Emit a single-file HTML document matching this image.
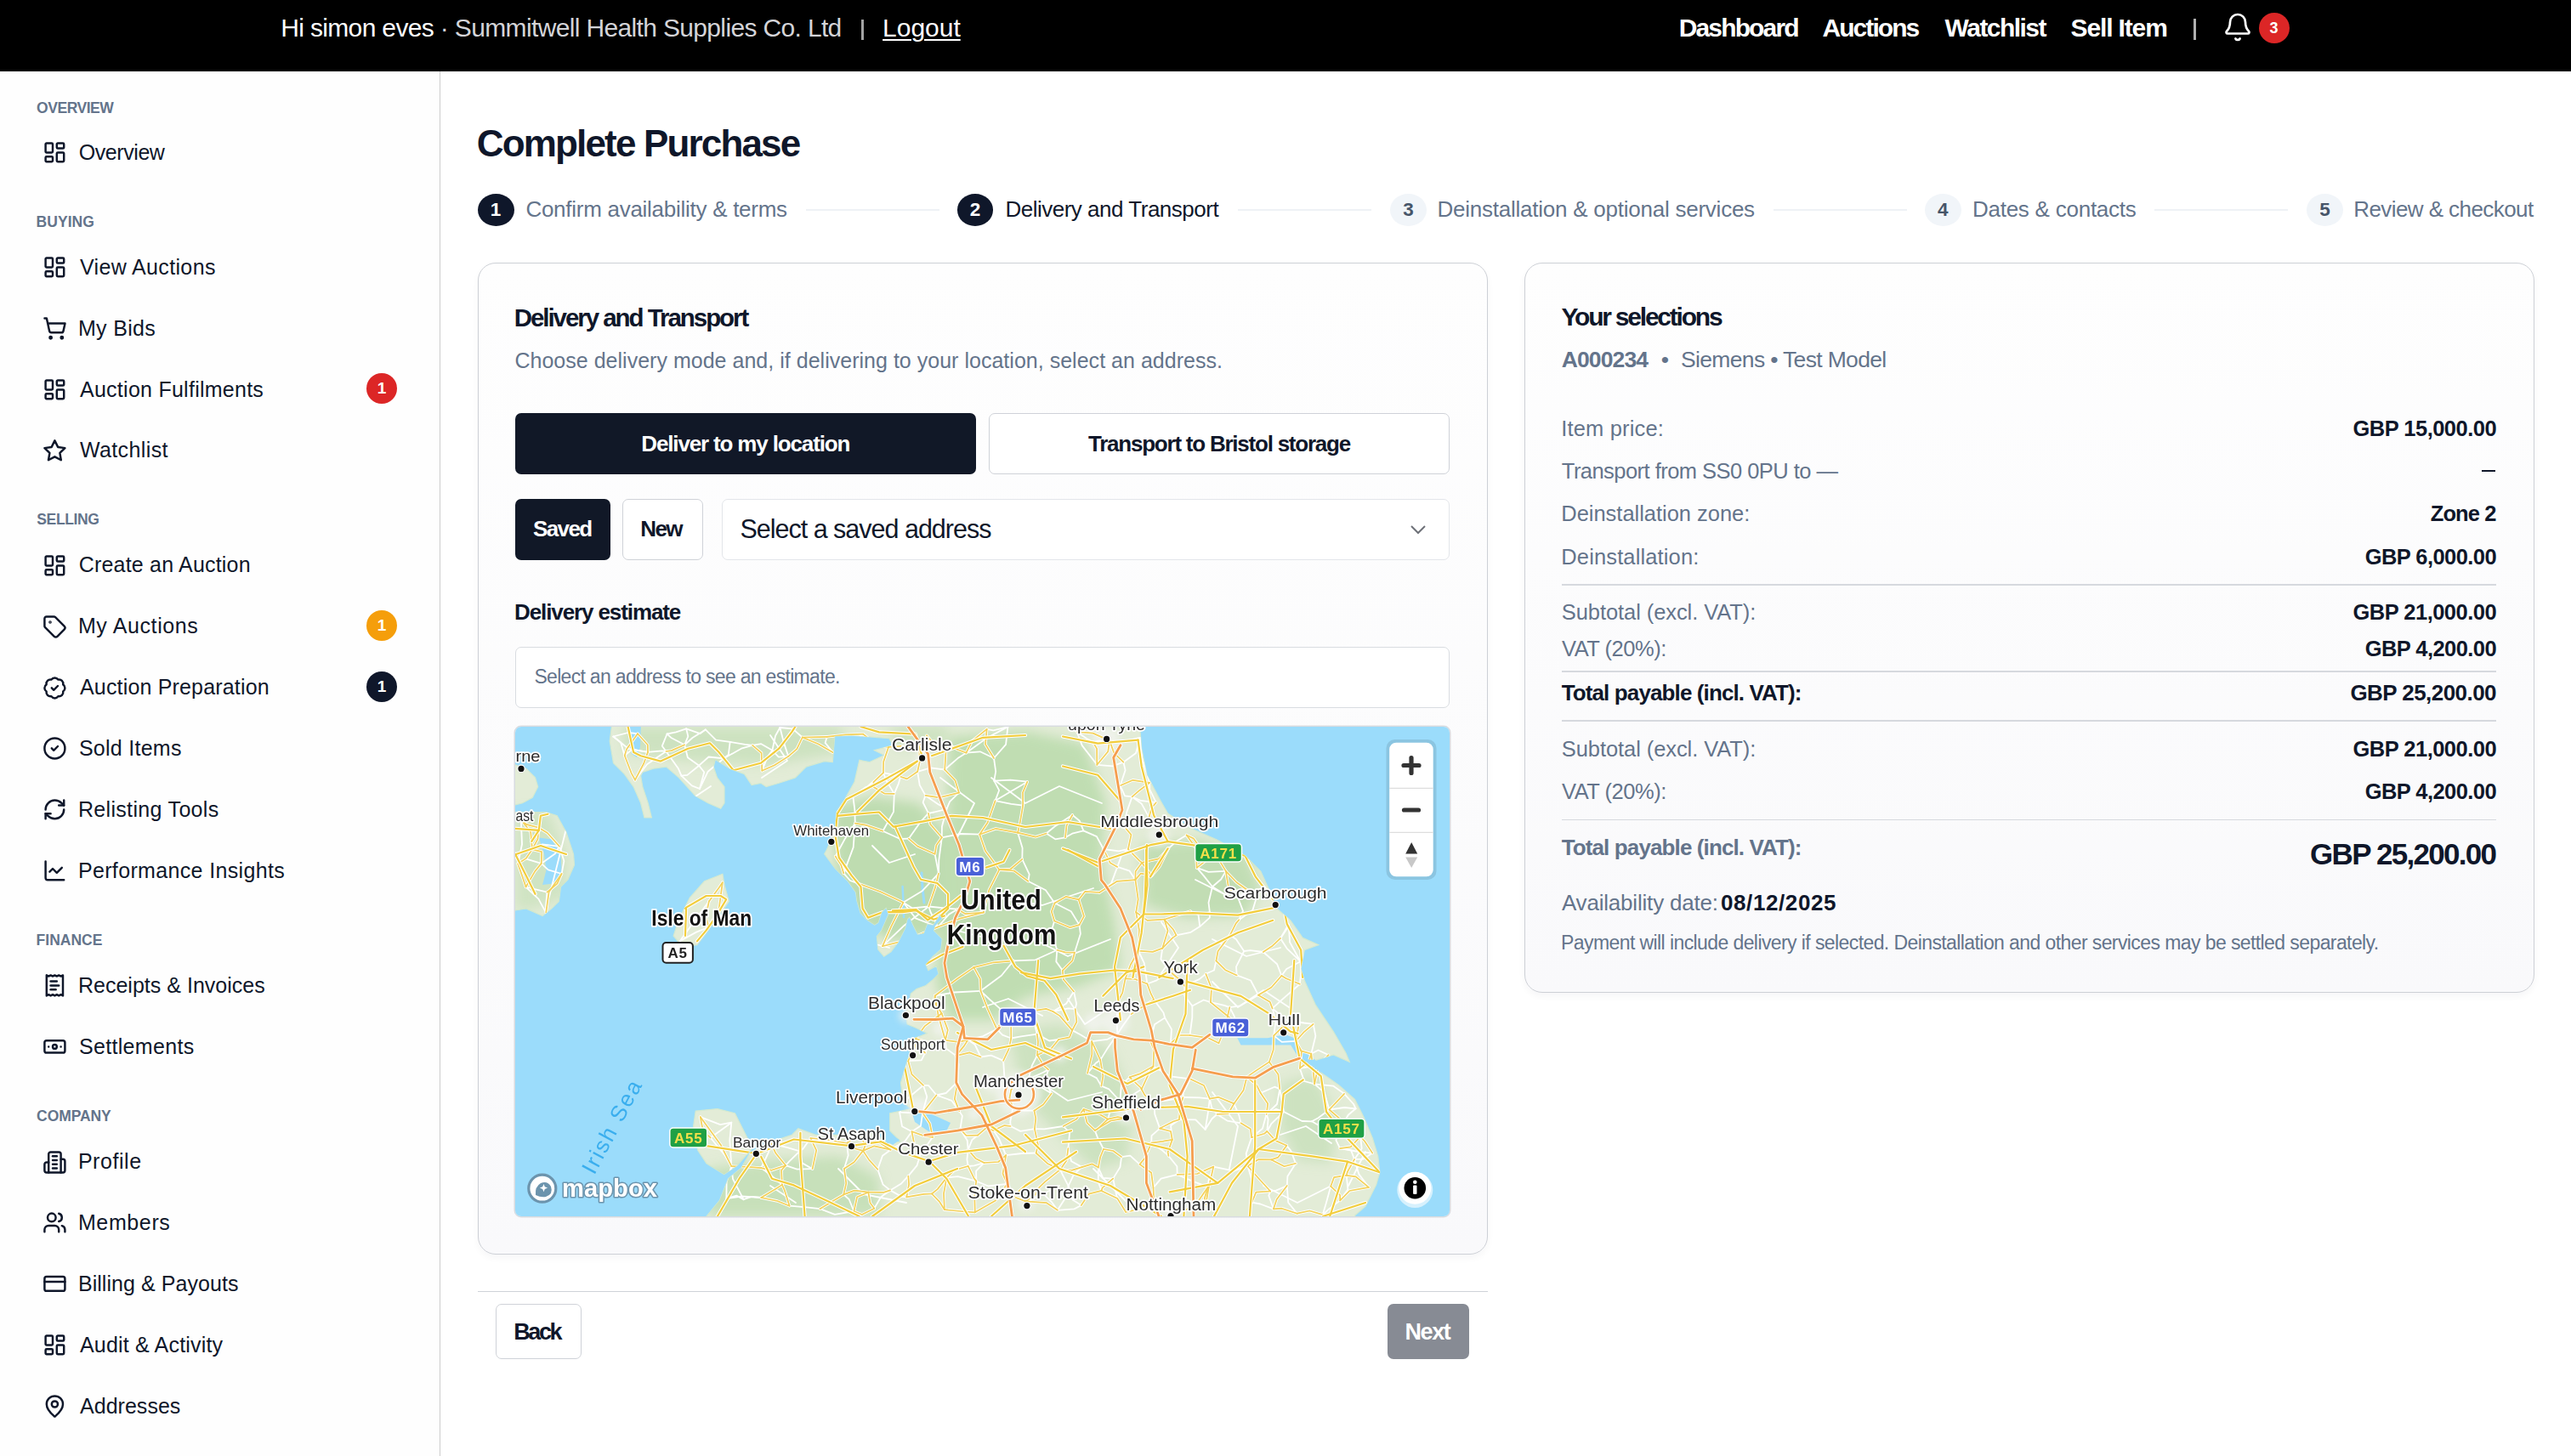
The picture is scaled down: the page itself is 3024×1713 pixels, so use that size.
<!DOCTYPE html>
<html><head><meta charset="utf-8"><title>Complete Purchase</title>
<style>
html,body{margin:0;padding:0;width:3024px;height:1713px;overflow:hidden;background:#fff;font-family:"Liberation Sans", sans-serif;}
.t{position:absolute;white-space:nowrap;line-height:1;font-family:"Liberation Sans", sans-serif;}
.ic{position:absolute;fill:none;stroke:#0f172a;stroke-width:2.05;stroke-linecap:round;stroke-linejoin:round;}
.badge{position:absolute;width:36px;height:36px;border-radius:50%;color:#fff;font-size:19px;font-weight:700;line-height:36px;text-align:center;}
.circ{position:absolute;width:42.8px;height:38px;border-radius:50%;}
.sline{position:absolute;top:245.5px;height:2px;background:#eef2f6;}
#hdr{position:absolute;left:0;top:0;width:3024px;height:84px;background:#000;}
#side{position:absolute;left:0;top:84px;width:517px;height:1629px;background:#fefefe;border-right:1.3px solid #cdcdcd;}
.card{position:absolute;box-sizing:border-box;border:1.5px solid #cdd0d6;border-radius:21px;background:linear-gradient(#fefefe,#f9f9fb);box-shadow:0 4px 8px rgba(15,23,42,0.04);}
.btn{position:absolute;box-sizing:border-box;border-radius:7px;}
.hr{position:absolute;left:1837px;width:1099px;height:1.5px;background:#d6d9de;}
</style></head><body>
<div id="hdr"></div>
<div style="position:absolute;left:1013.3px;top:22.5px;width:2.8px;height:24.5px;background:#a3a3a3"></div>
<div style="position:absolute;left:2580px;top:22px;width:3px;height:25px;background:#b0b0b0"></div>
<div id="side"></div>
<svg style="position:absolute;left:2614px;top:14px" width="36" height="36" viewBox="0 0 24 24" fill="none" stroke="#fff" stroke-width="1.8" stroke-linecap="round" stroke-linejoin="round"><path d="M10.268 21a2 2 0 0 0 3.464 0"/><path d="M3.262 15.326A1 1 0 0 0 4 17h16a1 1 0 0 0 .74-1.673C19.41 13.956 18 12.499 18 8A6 6 0 0 0 6 8c0 4.499-1.411 5.956-2.738 7.326"/></svg>
<div class="badge" style="left:2656.6px;top:14.5px;background:#dc2626;font-size:18px">3</div>
<div class="circ" style="left:562.1px;top:227.8px;background:#0f172a"></div>
<div class="circ" style="left:1125.6px;top:227.8px;background:#0f172a"></div>
<div class="circ" style="left:1635.0px;top:227.8px;background:#f1f5f9"></div>
<div class="circ" style="left:2264.1px;top:227.8px;background:#f1f5f9"></div>
<div class="circ" style="left:2713.1px;top:227.8px;background:#f1f5f9"></div>
<div class="sline" style="left:948px;width:156.79999999999995px"></div>
<div class="sline" style="left:1456px;width:156.5999999999999px"></div>
<div class="sline" style="left:2085.6px;width:157.0999999999999px"></div>
<div class="sline" style="left:2534.4px;width:157.0999999999999px"></div>
<div class="card" style="left:562px;top:309px;width:1188px;height:1167px"></div>
<div class="card" style="left:1793px;top:309px;width:1188px;height:859px"></div>
<div class="btn" style="left:606px;top:486px;width:542px;height:72px;background:#111827"></div>
<div class="btn" style="left:1163px;top:486px;width:542px;height:72px;background:#fff;border:1.5px solid #cfd2d8"></div>
<div class="btn" style="left:606px;top:587px;width:112px;height:72px;background:#111827"></div>
<div class="btn" style="left:732px;top:587px;width:95px;height:72px;background:#fff;border:1.5px solid #cfd2d8"></div>
<div class="btn" style="left:849px;top:587px;width:856px;height:72px;background:#fff;border:1.5px solid #e3e6ea"></div>
<svg style="position:absolute;left:1652px;top:607px" width="32" height="32" viewBox="0 0 24 24" fill="none" stroke="#6e7178" stroke-width="1.5" stroke-linecap="butt" stroke-linejoin="miter"><path d="m6 9 6 6 6-6"/></svg>
<div class="btn" style="left:606px;top:761px;width:1099px;height:72px;background:#fff;border:1.5px solid #d9dce1"></div>
<div id="map" style="position:absolute;left:606px;top:855px;width:1099px;height:576px;border-radius:7px;overflow:hidden;box-shadow:0 0 0 1.5px #d8dbe0;"><svg width="1099" height="576" viewBox="0 0 1099 576" style="position:absolute;left:0;top:0"><rect x="0" y="0" width="1099" height="576" fill="#9bdcfb"/><defs><filter id="bl" x="-30%" y="-30%" width="160%" height="160%"><feGaussianBlur stdDeviation="7"/></filter><filter id="bl2" x="-50%" y="-50%" width="200%" height="200%"><feGaussianBlur stdDeviation="4"/></filter><clipPath id="landclip"><polygon points="113.4,-10.0 113.4,0.0 111.2,17.1 115.5,42.8 128.4,55.6 139.1,70.6 147.6,89.8 151.9,107.0 160.4,107.0 156.2,89.8 149.8,70.6 147.6,57.8 149.8,53.5 162.6,49.2 177.6,47.1 192.5,59.9 211.8,81.3 226.8,89.8 241.7,96.3 246.0,89.8 246.0,70.6 237.5,59.9 233.2,47.1 235.3,38.5 252.4,49.2 269.5,55.6 278.1,68.5 288.8,66.3 295.2,70.6 310.2,66.3 329.4,59.9 342.3,47.1 363.7,40.6 373.3,41.7 375.7,11.0 395.5,10.2 439.9,13.7 444.5,21.8 422.4,27.7 434.0,33.5 416.5,41.7 404.9,39.3 399.0,65.0 387.3,86.0 378.0,100.0 375.7,123.4 366.3,145.0 363.7,149.8 376.5,166.9 391.5,181.8 400.7,195.0 402.0,205.0 406.2,219.3 414.4,227.6 422.7,233.1 426.8,230.3 430.9,218.0 436.4,212.5 439.2,220.7 430.9,240.0 425.4,246.8 426.8,261.9 433.7,270.2 441.9,264.7 450.2,253.7 458.4,237.2 461.1,226.2 463.9,223.5 468.0,233.1 473.5,244.1 480.4,242.7 484.5,231.7 491.4,233.1 499.6,220.7 502.4,226.2 494.1,234.5 492.7,239.9 502.4,249.6 501.0,261.9 491.4,270.2 483.1,279.8 485.9,286.6 495.5,281.2 498.2,290.8 491.4,297.6 483.1,304.5 472.1,308.6 465.3,314.1 463.9,322.4 459.8,336.1 461.1,349.8 470.8,354.0 484.5,360.8 477.6,363.6 466.6,367.7 463.9,385.0 461.2,393.1 453.5,418.8 456.1,441.9 466.3,449.6 440.7,454.7 440.7,475.2 453.5,488.0 438.1,490.6 420.1,475.2 394.5,480.4 353.4,480.4 332.9,472.7 325.2,480.4 302.0,488.0 276.4,500.9 266.1,518.9 250.7,531.7 240.4,557.4 225.0,576.0 218.0,590.0 994.0,590.0 987.5,575.0 1000.1,564.1 1012.7,538.9 1016.9,524.3 1014.8,505.4 1008.5,484.5 998.0,459.3 987.5,438.4 968.7,421.6 947.7,407.0 924.7,390.2 941.4,392.3 962.4,386.0 981.3,394.4 977.0,383.9 962.4,358.8 941.4,327.4 928.9,300.1 924.0,285.0 928.3,262.8 944.8,256.6 926.2,248.4 911.8,227.8 895.3,213.4 887.1,192.8 876.8,170.1 858.3,151.6 825.3,133.0 792.3,118.6 767.6,102.1 759.4,87.7 742.9,56.8 736.7,25.9 734.6,0.8 734.0,-10.0" fill="#000" /><polygon points="-10.0,44.9 0.0,44.9 12.8,49.2 23.5,59.9 26.7,70.6 20.3,83.4 8.6,89.8 0.0,92.0 -10.0,92.0" fill="#000" /><polygon points="-10.0,100.5 36.4,100.5 49.2,104.8 59.9,124.1 68.5,149.8 69.5,162.6 62.0,179.7 53.5,188.3 51.3,205.4 42.8,213.9 32.1,222.5 12.8,213.9 0.0,216.0 -10.0,216.0" fill="#000" /><polygon points="243.9,173.3 246.0,186.1 251.4,205.4 239.6,222.5 226.8,239.6 213.9,256.7 196.8,258.9 186.1,246.0 192.5,226.8 205.4,201.1 222.5,181.8" fill="#000" /><polygon points="212.2,452.1 237.9,449.6 258.4,454.7 268.7,475.2 279.0,495.8 261.0,516.3 245.6,526.6 225.0,513.7 214.8,498.3 209.6,470.1" fill="#000" /></clipPath></defs><polygon points="113.4,-10.0 113.4,0.0 111.2,17.1 115.5,42.8 128.4,55.6 139.1,70.6 147.6,89.8 151.9,107.0 160.4,107.0 156.2,89.8 149.8,70.6 147.6,57.8 149.8,53.5 162.6,49.2 177.6,47.1 192.5,59.9 211.8,81.3 226.8,89.8 241.7,96.3 246.0,89.8 246.0,70.6 237.5,59.9 233.2,47.1 235.3,38.5 252.4,49.2 269.5,55.6 278.1,68.5 288.8,66.3 295.2,70.6 310.2,66.3 329.4,59.9 342.3,47.1 363.7,40.6 373.3,41.7 375.7,11.0 395.5,10.2 439.9,13.7 444.5,21.8 422.4,27.7 434.0,33.5 416.5,41.7 404.9,39.3 399.0,65.0 387.3,86.0 378.0,100.0 375.7,123.4 366.3,145.0 363.7,149.8 376.5,166.9 391.5,181.8 400.7,195.0 402.0,205.0 406.2,219.3 414.4,227.6 422.7,233.1 426.8,230.3 430.9,218.0 436.4,212.5 439.2,220.7 430.9,240.0 425.4,246.8 426.8,261.9 433.7,270.2 441.9,264.7 450.2,253.7 458.4,237.2 461.1,226.2 463.9,223.5 468.0,233.1 473.5,244.1 480.4,242.7 484.5,231.7 491.4,233.1 499.6,220.7 502.4,226.2 494.1,234.5 492.7,239.9 502.4,249.6 501.0,261.9 491.4,270.2 483.1,279.8 485.9,286.6 495.5,281.2 498.2,290.8 491.4,297.6 483.1,304.5 472.1,308.6 465.3,314.1 463.9,322.4 459.8,336.1 461.1,349.8 470.8,354.0 484.5,360.8 477.6,363.6 466.6,367.7 463.9,385.0 461.2,393.1 453.5,418.8 456.1,441.9 466.3,449.6 440.7,454.7 440.7,475.2 453.5,488.0 438.1,490.6 420.1,475.2 394.5,480.4 353.4,480.4 332.9,472.7 325.2,480.4 302.0,488.0 276.4,500.9 266.1,518.9 250.7,531.7 240.4,557.4 225.0,576.0 218.0,590.0 994.0,590.0 987.5,575.0 1000.1,564.1 1012.7,538.9 1016.9,524.3 1014.8,505.4 1008.5,484.5 998.0,459.3 987.5,438.4 968.7,421.6 947.7,407.0 924.7,390.2 941.4,392.3 962.4,386.0 981.3,394.4 977.0,383.9 962.4,358.8 941.4,327.4 928.9,300.1 924.0,285.0 928.3,262.8 944.8,256.6 926.2,248.4 911.8,227.8 895.3,213.4 887.1,192.8 876.8,170.1 858.3,151.6 825.3,133.0 792.3,118.6 767.6,102.1 759.4,87.7 742.9,56.8 736.7,25.9 734.6,0.8 734.0,-10.0" fill="#e3ecd7" stroke="#d5ead0" stroke-width="1.2"/><polygon points="-10.0,44.9 0.0,44.9 12.8,49.2 23.5,59.9 26.7,70.6 20.3,83.4 8.6,89.8 0.0,92.0 -10.0,92.0" fill="#e3ecd7" stroke="#d5ead0" stroke-width="1.2"/><polygon points="-10.0,100.5 36.4,100.5 49.2,104.8 59.9,124.1 68.5,149.8 69.5,162.6 62.0,179.7 53.5,188.3 51.3,205.4 42.8,213.9 32.1,222.5 12.8,213.9 0.0,216.0 -10.0,216.0" fill="#e3ecd7" stroke="#d5ead0" stroke-width="1.2"/><polygon points="243.9,173.3 246.0,186.1 251.4,205.4 239.6,222.5 226.8,239.6 213.9,256.7 196.8,258.9 186.1,246.0 192.5,226.8 205.4,201.1 222.5,181.8" fill="#e3ecd7" stroke="#d5ead0" stroke-width="1.2"/><polygon points="212.2,452.1 237.9,449.6 258.4,454.7 268.7,475.2 279.0,495.8 261.0,516.3 245.6,526.6 225.0,513.7 214.8,498.3 209.6,470.1" fill="#e3ecd7" stroke="#d5ead0" stroke-width="1.2"/><g clip-path="url(#landclip)"><g filter="url(#bl)"><polygon points="510.0,12.0 600.0,5.0 670.0,20.0 695.0,90.0 690.0,160.0 705.0,230.0 712.0,285.0 665.0,305.0 600.0,318.0 565.0,345.0 510.0,345.0 495.0,300.0 500.0,220.0 508.0,140.0" fill="#bedcb0" opacity="0.95"/><polygon points="372.0,95.0 420.0,82.0 475.0,90.0 508.0,125.0 510.0,200.0 495.0,245.0 440.0,252.0 398.0,225.0 378.0,170.0" fill="#bedcb0" opacity="1.0"/><polygon points="736.0,140.0 800.0,133.0 860.0,150.0 877.0,190.0 860.0,222.0 790.0,225.0 740.0,210.0" fill="#bedcb0" opacity="0.9"/><polygon points="128.0,0.0 385.0,0.0 385.0,30.0 300.0,45.0 200.0,40.0 128.0,30.0" fill="#bedcb0" opacity="0.6"/><polygon points="580.0,360.0 640.0,350.0 700.0,380.0 727.0,440.0 720.0,510.0 680.0,520.0 640.0,480.0 600.0,440.0" fill="#bedcb0" opacity="0.6"/><polygon points="227.0,520.0 300.0,510.0 380.0,505.0 428.0,530.0 428.0,576.0 227.0,576.0" fill="#bedcb0" opacity="0.75"/><polygon points="900.0,420.0 940.0,410.0 967.0,460.0 960.0,513.0 920.0,510.0 900.0,470.0" fill="#bedcb0" opacity="0.6"/><polygon points="0.0,100.0 40.0,100.0 60.0,150.0 60.0,200.0 20.0,215.0 0.0,215.0" fill="#bedcb0" opacity="0.5"/><polygon points="440.0,0.0 510.0,0.0 505.0,20.0 450.0,25.0" fill="#bedcb0" opacity="0.6"/></g></g><g filter="url(#bl2)"><circle cx="592" cy="432" r="26" fill="#f1f3ee" opacity="0.85"/><circle cx="475" cy="450" r="13" fill="#f1f3ee" opacity="0.85"/><circle cx="706" cy="346" r="16" fill="#f1f3ee" opacity="0.85"/><circle cx="680" cy="348" r="11" fill="#f1f3ee" opacity="0.85"/><circle cx="718" cy="455" r="12" fill="#f1f3ee" opacity="0.85"/><circle cx="695" cy="16" r="16" fill="#f1f3ee" opacity="0.85"/><circle cx="757" cy="128" r="12" fill="#f1f3ee" opacity="0.85"/><circle cx="460" cy="340" r="8" fill="#f1f3ee" opacity="0.85"/><circle cx="904" cy="360" r="9" fill="#f1f3ee" opacity="0.85"/><circle cx="782" cy="300" r="7" fill="#f1f3ee" opacity="0.85"/><circle cx="601" cy="560" r="10" fill="#f1f3ee" opacity="0.85"/><circle cx="500" cy="355" r="9" fill="#f1f3ee" opacity="0.85"/><circle cx="771" cy="572" r="11" fill="#f1f3ee" opacity="0.85"/><circle cx="478" cy="37" r="8" fill="#f1f3ee" opacity="0.85"/><circle cx="640" cy="385" r="9" fill="#f1f3ee" opacity="0.85"/><circle cx="560" cy="420" r="10" fill="#f1f3ee" opacity="0.85"/><circle cx="540" cy="455" r="8" fill="#f1f3ee" opacity="0.85"/></g><polygon points="27.8,130.5 42.8,132.6 53.5,149.8 54.6,171.1 49.2,184.0 32.1,186.1 36.4,169.0 34.2,149.8" fill="#9bdcfb" /><polygon points="849.3,366.2 884.9,366.2 905.8,362.0 916.3,366.2 922.6,378.7 941.4,392.3 947.7,407.0 922.6,391.2 912.1,374.5 884.9,374.5 853.5,374.5" fill="#9bdcfb" /><polygon points="466.0,452.0 490.0,456.0 512.0,466.0 506.0,478.0 486.0,476.0 470.0,465.0" fill="#9bdcfb" /><polygon points="438.0,478.0 452.0,486.0 444.0,492.0 430.0,484.0" fill="#9bdcfb" /><polygon points="132.0,-5.0 148.0,-5.0 147.0,24.0 143.0,36.0 137.0,32.0 134.0,17.0" fill="#9bdcfb" /><polyline points="478.0,172.0 479.0,190.0 481.0,207.0" fill="none" stroke="#9bdcfb" stroke-width="3" stroke-linejoin="round" stroke-linecap="round" /><polyline points="455.6,188.0 456.5,206.0 457.0,224.0" fill="none" stroke="#9bdcfb" stroke-width="2.5" stroke-linejoin="round" stroke-linecap="round" /><g clip-path="url(#landclip)"><polyline points="40.0,200.0 60.0,120.0 50.0,60.0" fill="none" stroke="#ffffff" stroke-width="1.8" stroke-linejoin="round" stroke-linecap="round" /><polyline points="180.0,60.0 200.0,90.0 230.0,70.0" fill="none" stroke="#ffffff" stroke-width="1.8" stroke-linejoin="round" stroke-linecap="round" /><polyline points="300.0,10.0 320.0,40.0 290.0,60.0" fill="none" stroke="#ffffff" stroke-width="1.8" stroke-linejoin="round" stroke-linecap="round" /><polyline points="500.0,60.0 540.0,90.0 520.0,130.0" fill="none" stroke="#ffffff" stroke-width="1.8" stroke-linejoin="round" stroke-linecap="round" /><polyline points="560.0,60.0 600.0,90.0 640.0,70.0 690.0,90.0" fill="none" stroke="#ffffff" stroke-width="1.8" stroke-linejoin="round" stroke-linecap="round" /><polyline points="560.0,200.0 620.0,210.0 680.0,190.0" fill="none" stroke="#ffffff" stroke-width="1.8" stroke-linejoin="round" stroke-linecap="round" /><polyline points="610.0,250.0 650.0,270.0 700.0,250.0" fill="none" stroke="#ffffff" stroke-width="1.8" stroke-linejoin="round" stroke-linecap="round" /><polyline points="800.0,180.0 840.0,200.0 880.0,190.0" fill="none" stroke="#ffffff" stroke-width="1.8" stroke-linejoin="round" stroke-linecap="round" /><polyline points="820.0,250.0 860.0,270.0 900.0,260.0" fill="none" stroke="#ffffff" stroke-width="1.8" stroke-linejoin="round" stroke-linecap="round" /><polyline points="760.0,230.0 780.0,260.0 760.0,290.0" fill="none" stroke="#ffffff" stroke-width="1.8" stroke-linejoin="round" stroke-linecap="round" /><polyline points="550.0,330.0 580.0,320.0 620.0,340.0" fill="none" stroke="#ffffff" stroke-width="1.8" stroke-linejoin="round" stroke-linecap="round" /><polyline points="650.0,320.0 670.0,350.0 700.0,330.0" fill="none" stroke="#ffffff" stroke-width="1.8" stroke-linejoin="round" stroke-linecap="round" /><polyline points="820.0,300.0 850.0,330.0 880.0,310.0 910.0,330.0" fill="none" stroke="#ffffff" stroke-width="1.8" stroke-linejoin="round" stroke-linecap="round" /><polyline points="620.0,420.0 650.0,440.0 690.0,430.0" fill="none" stroke="#ffffff" stroke-width="1.8" stroke-linejoin="round" stroke-linecap="round" /><polyline points="820.0,430.0 850.0,470.0 840.0,520.0" fill="none" stroke="#ffffff" stroke-width="1.8" stroke-linejoin="round" stroke-linecap="round" /><polyline points="900.0,480.0 930.0,470.0 960.0,490.0" fill="none" stroke="#ffffff" stroke-width="1.8" stroke-linejoin="round" stroke-linecap="round" /><polyline points="880.0,540.0 920.0,560.0 960.0,540.0" fill="none" stroke="#ffffff" stroke-width="1.8" stroke-linejoin="round" stroke-linecap="round" /><polyline points="680.0,520.0 720.0,560.0" fill="none" stroke="#ffffff" stroke-width="1.8" stroke-linejoin="round" stroke-linecap="round" /><polyline points="600.0,560.0 640.0,540.0" fill="none" stroke="#ffffff" stroke-width="1.8" stroke-linejoin="round" stroke-linecap="round" /><polyline points="380.0,520.0 410.0,550.0 460.0,560.0" fill="none" stroke="#ffffff" stroke-width="1.8" stroke-linejoin="round" stroke-linecap="round" /><polyline points="300.0,540.0 330.0,560.0" fill="none" stroke="#ffffff" stroke-width="1.8" stroke-linejoin="round" stroke-linecap="round" /><polyline points="420.0,140.0 440.0,160.0 470.0,150.0" fill="none" stroke="#ffffff" stroke-width="1.8" stroke-linejoin="round" stroke-linecap="round" /><polyline points="520.0,240.0 560.0,250.0" fill="none" stroke="#ffffff" stroke-width="1.8" stroke-linejoin="round" stroke-linecap="round" /><polyline points="400.0,250.0 440.0,260.0" fill="none" stroke="#ffffff" stroke-width="1.8" stroke-linejoin="round" stroke-linecap="round" /><polyline points="1000.0,500.0 980.0,540.0" fill="none" stroke="#ffffff" stroke-width="1.8" stroke-linejoin="round" stroke-linecap="round" /><polyline points="715.4,41.7 730.1,31.0 734.8,13.0" fill="none" stroke="#ffffff" stroke-width="1.8" stroke-linejoin="round" stroke-linecap="round" /><polyline points="715.4,41.7 702.6,46.3 684.3,44.8" fill="none" stroke="#ffffff" stroke-width="1.8" stroke-linejoin="round" stroke-linecap="round" /><polyline points="715.4,41.7 717.6,51.1 711.6,69.3" fill="none" stroke="#ffffff" stroke-width="1.8" stroke-linejoin="round" stroke-linecap="round" /><polyline points="466.5,476.3 477.0,469.4 479.2,454.1" fill="none" stroke="#ffffff" stroke-width="1.8" stroke-linejoin="round" stroke-linecap="round" /><polyline points="466.5,476.3 455.0,470.2 452.1,453.7" fill="none" stroke="#ffffff" stroke-width="1.8" stroke-linejoin="round" stroke-linecap="round" /><polyline points="466.5,476.3 458.5,487.6 441.6,497.7" fill="none" stroke="#ffffff" stroke-width="1.8" stroke-linejoin="round" stroke-linecap="round" /><polyline points="689.5,545.9 685.8,535.6 685.8,518.6" fill="none" stroke="#ffffff" stroke-width="1.8" stroke-linejoin="round" stroke-linecap="round" /><polyline points="634.2,228.5 630.6,240.4 637.3,262.8" fill="none" stroke="#ffffff" stroke-width="1.8" stroke-linejoin="round" stroke-linecap="round" /><polyline points="639.2,368.0 628.1,369.5 613.8,361.6" fill="none" stroke="#ffffff" stroke-width="1.8" stroke-linejoin="round" stroke-linecap="round" /><polyline points="498.0,172.7 478.3,193.6 456.4,206.7" fill="none" stroke="#ffffff" stroke-width="1.8" stroke-linejoin="round" stroke-linecap="round" /><polyline points="498.0,172.7 495.6,160.2 493.6,149.7" fill="none" stroke="#ffffff" stroke-width="1.8" stroke-linejoin="round" stroke-linecap="round" /><polyline points="498.0,172.7 498.3,157.0 501.8,130.3" fill="none" stroke="#ffffff" stroke-width="1.8" stroke-linejoin="round" stroke-linecap="round" /><polyline points="577.2,504.1 596.0,502.0 612.6,501.5" fill="none" stroke="#ffffff" stroke-width="1.8" stroke-linejoin="round" stroke-linecap="round" /><polyline points="577.2,504.1 569.0,484.7 562.5,475.0" fill="none" stroke="#ffffff" stroke-width="1.8" stroke-linejoin="round" stroke-linecap="round" /><polyline points="801.7,165.9 815.4,170.8 835.8,169.9" fill="none" stroke="#ffffff" stroke-width="1.8" stroke-linejoin="round" stroke-linecap="round" /><polyline points="801.7,165.9 800.5,159.1 806.1,143.1" fill="none" stroke="#ffffff" stroke-width="1.8" stroke-linejoin="round" stroke-linecap="round" /><polyline points="801.7,165.9 810.0,175.6 820.0,188.3" fill="none" stroke="#ffffff" stroke-width="1.8" stroke-linejoin="round" stroke-linecap="round" /><polyline points="840.3,330.1 845.4,339.9 849.3,349.8" fill="none" stroke="#ffffff" stroke-width="1.8" stroke-linejoin="round" stroke-linecap="round" /><polyline points="840.3,330.1 852.9,328.3 874.0,315.7" fill="none" stroke="#ffffff" stroke-width="1.8" stroke-linejoin="round" stroke-linecap="round" /><polyline points="840.3,330.1 834.0,327.8 817.9,324.2" fill="none" stroke="#ffffff" stroke-width="1.8" stroke-linejoin="round" stroke-linecap="round" /><polyline points="764.1,342.4 772.0,355.9 770.9,372.7" fill="none" stroke="#ffffff" stroke-width="1.8" stroke-linejoin="round" stroke-linecap="round" /><polyline points="764.1,342.4 752.0,350.2 746.9,369.5" fill="none" stroke="#ffffff" stroke-width="1.8" stroke-linejoin="round" stroke-linecap="round" /><polyline points="764.1,342.4 762.5,336.5 751.2,321.1" fill="none" stroke="#ffffff" stroke-width="1.8" stroke-linejoin="round" stroke-linecap="round" /><polyline points="637.3,262.8 611.8,274.3 586.1,275.3" fill="none" stroke="#ffffff" stroke-width="1.8" stroke-linejoin="round" stroke-linecap="round" /><polyline points="637.3,262.8 636.3,276.4 643.8,286.8" fill="none" stroke="#ffffff" stroke-width="1.8" stroke-linejoin="round" stroke-linecap="round" /><polyline points="770.9,372.7 756.2,370.2 746.9,369.5" fill="none" stroke="#ffffff" stroke-width="1.8" stroke-linejoin="round" stroke-linecap="round" /><polyline points="734.8,13.0 715.1,17.3 699.1,16.4" fill="none" stroke="#ffffff" stroke-width="1.8" stroke-linejoin="round" stroke-linecap="round" /><polyline points="734.8,13.0 737.3,36.5 746.1,65.9" fill="none" stroke="#ffffff" stroke-width="1.8" stroke-linejoin="round" stroke-linecap="round" /><polyline points="507.4,96.8 492.8,100.5 486.1,101.8" fill="none" stroke="#ffffff" stroke-width="1.8" stroke-linejoin="round" stroke-linecap="round" /><polyline points="507.4,96.8 511.1,88.2 521.9,77.6" fill="none" stroke="#ffffff" stroke-width="1.8" stroke-linejoin="round" stroke-linecap="round" /><polyline points="507.4,96.8 497.9,91.4 482.5,80.9" fill="none" stroke="#ffffff" stroke-width="1.8" stroke-linejoin="round" stroke-linecap="round" /><polyline points="507.4,96.8 501.9,117.6 501.8,130.3" fill="none" stroke="#ffffff" stroke-width="1.8" stroke-linejoin="round" stroke-linecap="round" /><polyline points="128.7,34.0 137.4,26.7 156.0,29.9" fill="none" stroke="#ffffff" stroke-width="1.8" stroke-linejoin="round" stroke-linecap="round" /><polyline points="128.7,34.0 124.1,18.4 115.3,11.5" fill="none" stroke="#ffffff" stroke-width="1.8" stroke-linejoin="round" stroke-linecap="round" /><polyline points="493.7,316.5 516.5,312.5 547.5,310.8" fill="none" stroke="#ffffff" stroke-width="1.8" stroke-linejoin="round" stroke-linecap="round" /><polyline points="970.8,471.9 979.8,456.8 988.6,449.3" fill="none" stroke="#ffffff" stroke-width="1.8" stroke-linejoin="round" stroke-linecap="round" /><polyline points="970.8,471.9 953.2,473.8 937.0,464.3" fill="none" stroke="#ffffff" stroke-width="1.8" stroke-linejoin="round" stroke-linecap="round" /><polyline points="970.8,471.9 965.4,486.4 970.1,496.1" fill="none" stroke="#ffffff" stroke-width="1.8" stroke-linejoin="round" stroke-linecap="round" /><polyline points="456.4,206.7 467.2,213.4 486.3,211.5" fill="none" stroke="#ffffff" stroke-width="1.8" stroke-linejoin="round" stroke-linecap="round" /><polyline points="456.4,206.7 470.9,225.3 497.2,235.5" fill="none" stroke="#ffffff" stroke-width="1.8" stroke-linejoin="round" stroke-linecap="round" /><polyline points="566.5,355.7 573.1,362.7 583.3,366.5" fill="none" stroke="#ffffff" stroke-width="1.8" stroke-linejoin="round" stroke-linecap="round" /><polyline points="566.5,355.7 550.2,364.0 532.5,368.3" fill="none" stroke="#ffffff" stroke-width="1.8" stroke-linejoin="round" stroke-linecap="round" /><polyline points="988.6,449.3 986.1,444.0 975.1,431.8" fill="none" stroke="#ffffff" stroke-width="1.8" stroke-linejoin="round" stroke-linecap="round" /><polyline points="988.6,449.3 975.2,448.0 957.5,450.5" fill="none" stroke="#ffffff" stroke-width="1.8" stroke-linejoin="round" stroke-linecap="round" /><polyline points="373.7,30.3 386.8,24.3 409.2,8.7" fill="none" stroke="#ffffff" stroke-width="1.8" stroke-linejoin="round" stroke-linecap="round" /><polyline points="373.7,30.3 364.6,18.9 366.8,11.8" fill="none" stroke="#ffffff" stroke-width="1.8" stroke-linejoin="round" stroke-linecap="round" /><polyline points="376.6,152.5 388.1,131.4 399.8,113.6" fill="none" stroke="#ffffff" stroke-width="1.8" stroke-linejoin="round" stroke-linecap="round" /><polyline points="376.6,152.5 388.7,169.0 404.5,184.8" fill="none" stroke="#ffffff" stroke-width="1.8" stroke-linejoin="round" stroke-linecap="round" /><polyline points="585.3,448.7 596.5,451.5 610.4,451.7" fill="none" stroke="#ffffff" stroke-width="1.8" stroke-linejoin="round" stroke-linecap="round" /><polyline points="585.3,448.7 582.3,464.3 582.6,470.0" fill="none" stroke="#ffffff" stroke-width="1.8" stroke-linejoin="round" stroke-linecap="round" /><polyline points="891.9,567.3 876.4,561.5 866.4,559.7" fill="none" stroke="#ffffff" stroke-width="1.8" stroke-linejoin="round" stroke-linecap="round" /><polyline points="891.9,567.3 886.3,551.6 888.2,546.5" fill="none" stroke="#ffffff" stroke-width="1.8" stroke-linejoin="round" stroke-linecap="round" /><polyline points="937.0,464.3 944.5,460.2 957.5,450.5" fill="none" stroke="#ffffff" stroke-width="1.8" stroke-linejoin="round" stroke-linecap="round" /><polyline points="937.0,464.3 925.5,464.0 904.0,453.0" fill="none" stroke="#ffffff" stroke-width="1.8" stroke-linejoin="round" stroke-linecap="round" /><polyline points="899.3,426.2 893.1,423.7 876.7,431.0" fill="none" stroke="#ffffff" stroke-width="1.8" stroke-linejoin="round" stroke-linecap="round" /><polyline points="899.3,426.2 900.9,435.9 904.0,453.0" fill="none" stroke="#ffffff" stroke-width="1.8" stroke-linejoin="round" stroke-linecap="round" /><polyline points="899.3,426.2 896.0,444.0 883.6,455.8" fill="none" stroke="#ffffff" stroke-width="1.8" stroke-linejoin="round" stroke-linecap="round" /><polyline points="30.7,160.9 12.4,155.3 3.2,161.2" fill="none" stroke="#ffffff" stroke-width="1.8" stroke-linejoin="round" stroke-linecap="round" /><polyline points="30.7,160.9 38.8,168.3 54.6,173.0" fill="none" stroke="#ffffff" stroke-width="1.8" stroke-linejoin="round" stroke-linecap="round" /><polyline points="30.7,160.9 47.0,149.2 52.0,140.8" fill="none" stroke="#ffffff" stroke-width="1.8" stroke-linejoin="round" stroke-linecap="round" /><polyline points="685.8,518.6 691.3,530.8 703.2,531.6" fill="none" stroke="#ffffff" stroke-width="1.8" stroke-linejoin="round" stroke-linecap="round" /><polyline points="923.6,276.2 907.6,260.8 900.0,248.9" fill="none" stroke="#ffffff" stroke-width="1.8" stroke-linejoin="round" stroke-linecap="round" /><polyline points="923.6,276.2 907.2,285.0 901.4,293.0" fill="none" stroke="#ffffff" stroke-width="1.8" stroke-linejoin="round" stroke-linecap="round" /><polyline points="923.6,276.2 911.1,253.6 909.7,232.5" fill="none" stroke="#ffffff" stroke-width="1.8" stroke-linejoin="round" stroke-linecap="round" /><polyline points="923.6,276.2 924.2,288.9 922.9,302.8" fill="none" stroke="#ffffff" stroke-width="1.8" stroke-linejoin="round" stroke-linecap="round" /><polyline points="717.6,460.6 719.8,454.9 711.4,440.5" fill="none" stroke="#ffffff" stroke-width="1.8" stroke-linejoin="round" stroke-linecap="round" /><polyline points="824.4,275.3 822.0,286.5 812.3,290.8" fill="none" stroke="#ffffff" stroke-width="1.8" stroke-linejoin="round" stroke-linecap="round" /><polyline points="441.1,545.4 453.7,537.8 462.3,528.6" fill="none" stroke="#ffffff" stroke-width="1.8" stroke-linejoin="round" stroke-linecap="round" /><polyline points="441.1,545.4 432.6,538.6 426.3,520.8" fill="none" stroke="#ffffff" stroke-width="1.8" stroke-linejoin="round" stroke-linecap="round" /><polyline points="441.1,545.4 430.2,553.2 422.3,566.7" fill="none" stroke="#ffffff" stroke-width="1.8" stroke-linejoin="round" stroke-linecap="round" /><polyline points="441.1,545.4 454.2,552.8 460.3,553.3" fill="none" stroke="#ffffff" stroke-width="1.8" stroke-linejoin="round" stroke-linecap="round" /><polyline points="144.0,8.2 132.7,7.0 115.3,11.5" fill="none" stroke="#ffffff" stroke-width="1.8" stroke-linejoin="round" stroke-linecap="round" /><polyline points="578.7,537.8 556.4,540.5 542.3,534.6" fill="none" stroke="#ffffff" stroke-width="1.8" stroke-linejoin="round" stroke-linecap="round" /><polyline points="476.8,502.1 472.6,516.2 462.3,528.6" fill="none" stroke="#ffffff" stroke-width="1.8" stroke-linejoin="round" stroke-linecap="round" /><polyline points="476.8,502.1 484.9,491.6 491.0,482.8" fill="none" stroke="#ffffff" stroke-width="1.8" stroke-linejoin="round" stroke-linecap="round" /><polyline points="641.1,520.9 643.2,525.9 650.6,540.1" fill="none" stroke="#ffffff" stroke-width="1.8" stroke-linejoin="round" stroke-linecap="round" /><polyline points="201.2,2.3 217.6,8.1 223.8,3.4" fill="none" stroke="#ffffff" stroke-width="1.8" stroke-linejoin="round" stroke-linecap="round" /><polyline points="201.2,2.3 189.1,6.3 178.6,8.5" fill="none" stroke="#ffffff" stroke-width="1.8" stroke-linejoin="round" stroke-linecap="round" /><polyline points="201.2,2.3 203.3,11.3 199.2,21.3" fill="none" stroke="#ffffff" stroke-width="1.8" stroke-linejoin="round" stroke-linecap="round" /><polyline points="520.4,417.7 506.7,431.0 495.5,433.5" fill="none" stroke="#ffffff" stroke-width="1.8" stroke-linejoin="round" stroke-linecap="round" /><polyline points="520.4,417.7 521.5,397.1 518.4,387.1" fill="none" stroke="#ffffff" stroke-width="1.8" stroke-linejoin="round" stroke-linecap="round" /><polyline points="848.7,292.4 865.1,298.5 874.0,315.7" fill="none" stroke="#ffffff" stroke-width="1.8" stroke-linejoin="round" stroke-linecap="round" /><polyline points="848.7,292.4 848.0,282.4 857.2,264.0" fill="none" stroke="#ffffff" stroke-width="1.8" stroke-linejoin="round" stroke-linecap="round" /><polyline points="761.3,260.6 759.4,273.4 768.7,287.0" fill="none" stroke="#ffffff" stroke-width="1.8" stroke-linejoin="round" stroke-linecap="round" /><polyline points="586.1,275.3 571.9,292.7 547.5,310.8" fill="none" stroke="#ffffff" stroke-width="1.8" stroke-linejoin="round" stroke-linecap="round" /><polyline points="768.4,504.9 778.4,517.2 778.7,526.9" fill="none" stroke="#ffffff" stroke-width="1.8" stroke-linejoin="round" stroke-linecap="round" /><polyline points="768.4,504.9 761.6,498.8 748.3,489.6" fill="none" stroke="#ffffff" stroke-width="1.8" stroke-linejoin="round" stroke-linecap="round" /><polyline points="614.9,543.3 631.4,559.7 637.9,568.8" fill="none" stroke="#ffffff" stroke-width="1.8" stroke-linejoin="round" stroke-linecap="round" /><polyline points="861.5,516.7 866.9,535.0 866.4,559.7" fill="none" stroke="#ffffff" stroke-width="1.8" stroke-linejoin="round" stroke-linecap="round" /><polyline points="861.5,516.7 845.3,522.7 821.3,517.6" fill="none" stroke="#ffffff" stroke-width="1.8" stroke-linejoin="round" stroke-linecap="round" /><polyline points="861.5,516.7 859.7,502.1 866.1,483.2" fill="none" stroke="#ffffff" stroke-width="1.8" stroke-linejoin="round" stroke-linecap="round" /><polyline points="725.6,82.4 719.3,100.4 716.2,117.2" fill="none" stroke="#ffffff" stroke-width="1.8" stroke-linejoin="round" stroke-linecap="round" /><polyline points="725.6,82.4 736.6,90.4 745.5,106.6" fill="none" stroke="#ffffff" stroke-width="1.8" stroke-linejoin="round" stroke-linecap="round" /><polyline points="725.6,82.4 717.0,81.4 711.6,69.3" fill="none" stroke="#ffffff" stroke-width="1.8" stroke-linejoin="round" stroke-linecap="round" /><polyline points="725.6,82.4 735.4,86.8 753.8,89.2" fill="none" stroke="#ffffff" stroke-width="1.8" stroke-linejoin="round" stroke-linecap="round" /><polyline points="970.2,557.3 957.4,567.2 949.8,574.1" fill="none" stroke="#ffffff" stroke-width="1.8" stroke-linejoin="round" stroke-linecap="round" /><polyline points="970.2,557.3 979.4,544.2 977.7,527.8" fill="none" stroke="#ffffff" stroke-width="1.8" stroke-linejoin="round" stroke-linecap="round" /><polyline points="484.1,10.4 479.9,29.2 473.2,52.8" fill="none" stroke="#ffffff" stroke-width="1.8" stroke-linejoin="round" stroke-linecap="round" /><polyline points="563.0,37.0 546.8,29.3 530.5,30.7" fill="none" stroke="#ffffff" stroke-width="1.8" stroke-linejoin="round" stroke-linecap="round" /><polyline points="563.0,37.0 565.2,52.6 563.3,63.7" fill="none" stroke="#ffffff" stroke-width="1.8" stroke-linejoin="round" stroke-linecap="round" /><polyline points="563.0,37.0 577.1,20.8 579.4,0.2" fill="none" stroke="#ffffff" stroke-width="1.8" stroke-linejoin="round" stroke-linecap="round" /><polyline points="627.1,403.4 621.0,406.7 603.6,414.5" fill="none" stroke="#ffffff" stroke-width="1.8" stroke-linejoin="round" stroke-linecap="round" /><polyline points="627.1,403.4 623.0,416.4 630.8,431.5" fill="none" stroke="#ffffff" stroke-width="1.8" stroke-linejoin="round" stroke-linecap="round" /><polyline points="697.2,461.7 700.8,447.3 711.4,440.5" fill="none" stroke="#ffffff" stroke-width="1.8" stroke-linejoin="round" stroke-linecap="round" /><polyline points="177.4,29.0 172.3,28.3 156.0,29.9" fill="none" stroke="#ffffff" stroke-width="1.8" stroke-linejoin="round" stroke-linecap="round" /><polyline points="177.4,29.0 172.8,22.7 178.6,8.5" fill="none" stroke="#ffffff" stroke-width="1.8" stroke-linejoin="round" stroke-linecap="round" /><polyline points="177.4,29.0 155.0,44.2 141.0,62.7" fill="none" stroke="#ffffff" stroke-width="1.8" stroke-linejoin="round" stroke-linecap="round" /><polyline points="177.4,29.0 191.9,49.3 195.5,57.7" fill="none" stroke="#ffffff" stroke-width="1.8" stroke-linejoin="round" stroke-linecap="round" /><polyline points="20.0,144.3 31.9,138.3 52.0,140.8" fill="none" stroke="#ffffff" stroke-width="1.8" stroke-linejoin="round" stroke-linecap="round" /><polyline points="900.0,248.9 908.4,236.7 909.7,232.5" fill="none" stroke="#ffffff" stroke-width="1.8" stroke-linejoin="round" stroke-linecap="round" /><polyline points="544.0,480.7 537.4,486.0 532.7,497.7" fill="none" stroke="#ffffff" stroke-width="1.8" stroke-linejoin="round" stroke-linecap="round" /><polyline points="755.8,565.9 773.3,572.0 786.7,570.1" fill="none" stroke="#ffffff" stroke-width="1.8" stroke-linejoin="round" stroke-linecap="round" /><polyline points="956.7,386.2 939.8,399.1 922.8,401.8" fill="none" stroke="#ffffff" stroke-width="1.8" stroke-linejoin="round" stroke-linecap="round" /><polyline points="956.7,386.2 944.5,380.5 936.3,384.7" fill="none" stroke="#ffffff" stroke-width="1.8" stroke-linejoin="round" stroke-linecap="round" /><polyline points="289.3,554.0 278.1,552.8 268.6,556.2" fill="none" stroke="#ffffff" stroke-width="1.8" stroke-linejoin="round" stroke-linecap="round" /><polyline points="289.3,554.0 266.5,552.5 248.4,555.2" fill="none" stroke="#ffffff" stroke-width="1.8" stroke-linejoin="round" stroke-linecap="round" /><polyline points="268.6,556.2 256.0,532.1 254.3,517.1" fill="none" stroke="#ffffff" stroke-width="1.8" stroke-linejoin="round" stroke-linecap="round" /><polyline points="268.6,556.2 260.3,551.6 248.4,555.2" fill="none" stroke="#ffffff" stroke-width="1.8" stroke-linejoin="round" stroke-linecap="round" /><polyline points="554.7,2.9 562.3,4.4 579.4,0.2" fill="none" stroke="#ffffff" stroke-width="1.8" stroke-linejoin="round" stroke-linecap="round" /><polyline points="290.3,51.7 296.5,35.8 302.4,27.8" fill="none" stroke="#ffffff" stroke-width="1.8" stroke-linejoin="round" stroke-linecap="round" /><polyline points="722.6,412.4 712.9,421.3 711.4,440.5" fill="none" stroke="#ffffff" stroke-width="1.8" stroke-linejoin="round" stroke-linecap="round" /><polyline points="358.4,567.2 342.5,565.4 322.6,563.7" fill="none" stroke="#ffffff" stroke-width="1.8" stroke-linejoin="round" stroke-linecap="round" /><polyline points="358.4,567.2 375.9,573.8 398.4,570.0" fill="none" stroke="#ffffff" stroke-width="1.8" stroke-linejoin="round" stroke-linecap="round" /><polyline points="918.0,513.8 912.3,498.9 907.3,492.7" fill="none" stroke="#ffffff" stroke-width="1.8" stroke-linejoin="round" stroke-linecap="round" /><polyline points="918.0,513.8 908.4,529.1 907.8,540.0" fill="none" stroke="#ffffff" stroke-width="1.8" stroke-linejoin="round" stroke-linecap="round" /><polyline points="689.4,422.7 698.3,426.3 711.4,440.5" fill="none" stroke="#ffffff" stroke-width="1.8" stroke-linejoin="round" stroke-linecap="round" /><polyline points="689.4,422.7 683.9,413.4 673.1,407.7" fill="none" stroke="#ffffff" stroke-width="1.8" stroke-linejoin="round" stroke-linecap="round" /><polyline points="884.3,476.0 889.3,467.2 904.0,453.0" fill="none" stroke="#ffffff" stroke-width="1.8" stroke-linejoin="round" stroke-linecap="round" /><polyline points="884.3,476.0 885.6,461.8 883.6,455.8" fill="none" stroke="#ffffff" stroke-width="1.8" stroke-linejoin="round" stroke-linecap="round" /><polyline points="750.5,399.4 770.5,411.4 794.1,414.4" fill="none" stroke="#ffffff" stroke-width="1.8" stroke-linejoin="round" stroke-linecap="round" /><polyline points="252.7,17.9 236.1,15.6 223.8,3.4" fill="none" stroke="#ffffff" stroke-width="1.8" stroke-linejoin="round" stroke-linecap="round" /><polyline points="252.7,17.9 270.3,20.9 279.1,21.8" fill="none" stroke="#ffffff" stroke-width="1.8" stroke-linejoin="round" stroke-linecap="round" /><polyline points="252.7,17.9 250.8,33.0 245.4,37.3" fill="none" stroke="#ffffff" stroke-width="1.8" stroke-linejoin="round" stroke-linecap="round" /><polyline points="613.8,361.6 594.9,364.3 583.3,366.5" fill="none" stroke="#ffffff" stroke-width="1.8" stroke-linejoin="round" stroke-linecap="round" /><polyline points="613.8,361.6 610.0,346.3 610.1,334.1" fill="none" stroke="#ffffff" stroke-width="1.8" stroke-linejoin="round" stroke-linecap="round" /><polyline points="688.2,392.1 682.6,396.1 673.1,407.7" fill="none" stroke="#ffffff" stroke-width="1.8" stroke-linejoin="round" stroke-linecap="round" /><polyline points="688.2,392.1 695.6,380.1 708.3,361.6" fill="none" stroke="#ffffff" stroke-width="1.8" stroke-linejoin="round" stroke-linecap="round" /><polyline points="751.4,441.8 752.3,456.0 758.2,472.6" fill="none" stroke="#ffffff" stroke-width="1.8" stroke-linejoin="round" stroke-linecap="round" /><polyline points="751.4,441.8 772.2,438.7 785.4,436.0" fill="none" stroke="#ffffff" stroke-width="1.8" stroke-linejoin="round" stroke-linecap="round" /><polyline points="678.1,370.2 664.3,362.0 655.2,357.1" fill="none" stroke="#ffffff" stroke-width="1.8" stroke-linejoin="round" stroke-linecap="round" /><polyline points="678.1,370.2 696.6,367.8 708.3,361.6" fill="none" stroke="#ffffff" stroke-width="1.8" stroke-linejoin="round" stroke-linecap="round" /><polyline points="901.4,293.0 896.1,279.3 879.8,265.0" fill="none" stroke="#ffffff" stroke-width="1.8" stroke-linejoin="round" stroke-linecap="round" /><polyline points="254.3,517.1 252.3,486.7 254.3,465.7" fill="none" stroke="#ffffff" stroke-width="1.8" stroke-linejoin="round" stroke-linecap="round" /><polyline points="254.3,517.1 248.6,536.0 248.4,555.2" fill="none" stroke="#ffffff" stroke-width="1.8" stroke-linejoin="round" stroke-linecap="round" /><polyline points="254.3,517.1 246.7,504.5 229.7,483.5" fill="none" stroke="#ffffff" stroke-width="1.8" stroke-linejoin="round" stroke-linecap="round" /><polyline points="347.4,484.0 338.4,496.7 334.6,499.3" fill="none" stroke="#ffffff" stroke-width="1.8" stroke-linejoin="round" stroke-linecap="round" /><polyline points="302.4,27.8 309.8,35.6 321.3,34.9" fill="none" stroke="#ffffff" stroke-width="1.8" stroke-linejoin="round" stroke-linecap="round" /><polyline points="302.4,27.8 306.0,10.7 311.4,1.0" fill="none" stroke="#ffffff" stroke-width="1.8" stroke-linejoin="round" stroke-linecap="round" /><polyline points="302.4,27.8 289.3,20.2 279.1,21.8" fill="none" stroke="#ffffff" stroke-width="1.8" stroke-linejoin="round" stroke-linecap="round" /><polyline points="313.9,538.9 300.9,527.8 289.3,519.1" fill="none" stroke="#ffffff" stroke-width="1.8" stroke-linejoin="round" stroke-linecap="round" /><polyline points="892.3,363.4 894.6,345.4 890.6,331.4" fill="none" stroke="#ffffff" stroke-width="1.8" stroke-linejoin="round" stroke-linecap="round" /><polyline points="892.3,363.4 901.7,370.9 918.3,369.8" fill="none" stroke="#ffffff" stroke-width="1.8" stroke-linejoin="round" stroke-linecap="round" /><polyline points="1003.9,541.8 992.3,526.4 987.1,508.9" fill="none" stroke="#ffffff" stroke-width="1.8" stroke-linejoin="round" stroke-linecap="round" /><polyline points="603.6,414.5 618.9,424.2 630.8,431.5" fill="none" stroke="#ffffff" stroke-width="1.8" stroke-linejoin="round" stroke-linecap="round" /><polyline points="603.6,414.5 607.8,398.7 614.1,386.3" fill="none" stroke="#ffffff" stroke-width="1.8" stroke-linejoin="round" stroke-linecap="round" /><polyline points="495.5,433.5 513.2,439.8 522.3,452.1" fill="none" stroke="#ffffff" stroke-width="1.8" stroke-linejoin="round" stroke-linecap="round" /><polyline points="495.5,433.5 486.3,422.2 480.0,421.9" fill="none" stroke="#ffffff" stroke-width="1.8" stroke-linejoin="round" stroke-linecap="round" /><polyline points="708.3,164.9 722.6,169.7 729.4,180.1" fill="none" stroke="#ffffff" stroke-width="1.8" stroke-linejoin="round" stroke-linecap="round" /><polyline points="708.3,164.9 713.2,151.2 720.9,144.0" fill="none" stroke="#ffffff" stroke-width="1.8" stroke-linejoin="round" stroke-linecap="round" /><polyline points="708.3,164.9 701.1,184.1 687.2,195.0" fill="none" stroke="#ffffff" stroke-width="1.8" stroke-linejoin="round" stroke-linecap="round" /><polyline points="812.2,562.3 805.4,561.3 786.7,570.1" fill="none" stroke="#ffffff" stroke-width="1.8" stroke-linejoin="round" stroke-linecap="round" /><polyline points="546.3,126.7 524.1,126.0 501.8,130.3" fill="none" stroke="#ffffff" stroke-width="1.8" stroke-linejoin="round" stroke-linecap="round" /><polyline points="975.1,431.8 962.0,422.6 940.2,420.3" fill="none" stroke="#ffffff" stroke-width="1.8" stroke-linejoin="round" stroke-linecap="round" /><polyline points="692.0,497.0 685.2,484.0 681.8,474.9" fill="none" stroke="#ffffff" stroke-width="1.8" stroke-linejoin="round" stroke-linecap="round" /><polyline points="574.1,392.9 559.7,386.6 547.6,388.5" fill="none" stroke="#ffffff" stroke-width="1.8" stroke-linejoin="round" stroke-linecap="round" /><polyline points="574.1,392.9 575.5,413.6 583.3,427.3" fill="none" stroke="#ffffff" stroke-width="1.8" stroke-linejoin="round" stroke-linecap="round" /><polyline points="711.4,440.5 728.1,432.0 736.7,426.5" fill="none" stroke="#ffffff" stroke-width="1.8" stroke-linejoin="round" stroke-linecap="round" /><polyline points="660.6,6.0 666.8,22.1 684.3,44.8" fill="none" stroke="#ffffff" stroke-width="1.8" stroke-linejoin="round" stroke-linecap="round" /><polyline points="660.6,6.0 672.2,14.0 679.5,17.8" fill="none" stroke="#ffffff" stroke-width="1.8" stroke-linejoin="round" stroke-linecap="round" /><polyline points="337.8,12.5 326.3,2.4 311.4,1.0" fill="none" stroke="#ffffff" stroke-width="1.8" stroke-linejoin="round" stroke-linecap="round" /><polyline points="547.6,388.5 540.7,374.0 532.5,368.3" fill="none" stroke="#ffffff" stroke-width="1.8" stroke-linejoin="round" stroke-linecap="round" /><polyline points="37.5,194.7 27.1,192.2 12.5,188.5" fill="none" stroke="#ffffff" stroke-width="1.8" stroke-linejoin="round" stroke-linecap="round" /><polyline points="37.5,194.7 36.1,210.8 36.2,218.9" fill="none" stroke="#ffffff" stroke-width="1.8" stroke-linejoin="round" stroke-linecap="round" /><polyline points="462.2,393.2 477.8,392.3 482.1,383.7" fill="none" stroke="#ffffff" stroke-width="1.8" stroke-linejoin="round" stroke-linecap="round" /><polyline points="217.7,459.1 241.2,468.1 254.3,465.7" fill="none" stroke="#ffffff" stroke-width="1.8" stroke-linejoin="round" stroke-linecap="round" /><polyline points="812.3,290.8 804.5,297.1 787.2,304.9" fill="none" stroke="#ffffff" stroke-width="1.8" stroke-linejoin="round" stroke-linecap="round" /><polyline points="835.8,169.9 830.2,179.5 820.0,188.3" fill="none" stroke="#ffffff" stroke-width="1.8" stroke-linejoin="round" stroke-linecap="round" /><polyline points="432.4,122.7 452.7,132.0 462.8,131.7" fill="none" stroke="#ffffff" stroke-width="1.8" stroke-linejoin="round" stroke-linecap="round" /><polyline points="432.4,122.7 445.0,100.1 445.8,78.9" fill="none" stroke="#ffffff" stroke-width="1.8" stroke-linejoin="round" stroke-linecap="round" /><polyline points="156.0,29.9 133.0,25.8 115.3,11.5" fill="none" stroke="#ffffff" stroke-width="1.8" stroke-linejoin="round" stroke-linecap="round" /><polyline points="987.1,508.9 995.7,496.2 994.1,482.2" fill="none" stroke="#ffffff" stroke-width="1.8" stroke-linejoin="round" stroke-linecap="round" /><polyline points="987.1,508.9 983.0,498.2 970.1,496.1" fill="none" stroke="#ffffff" stroke-width="1.8" stroke-linejoin="round" stroke-linecap="round" /><polyline points="987.1,508.9 997.3,508.7 1008.3,501.6" fill="none" stroke="#ffffff" stroke-width="1.8" stroke-linejoin="round" stroke-linecap="round" /><polyline points="3.2,161.2 8.0,138.2 6.8,109.4" fill="none" stroke="#ffffff" stroke-width="1.8" stroke-linejoin="round" stroke-linecap="round" /><polyline points="386.3,550.4 392.6,556.0 398.4,570.0" fill="none" stroke="#ffffff" stroke-width="1.8" stroke-linejoin="round" stroke-linecap="round" /><polyline points="227.9,205.4 210.5,228.9 193.7,252.3" fill="none" stroke="#ffffff" stroke-width="1.8" stroke-linejoin="round" stroke-linecap="round" /><polyline points="520.3,214.7 507.3,213.7 486.3,211.5" fill="none" stroke="#ffffff" stroke-width="1.8" stroke-linejoin="round" stroke-linecap="round" /><polyline points="520.3,214.7 510.3,220.6 497.2,235.5" fill="none" stroke="#ffffff" stroke-width="1.8" stroke-linejoin="round" stroke-linecap="round" /><polyline points="821.3,517.6 815.6,533.8 814.9,541.4" fill="none" stroke="#ffffff" stroke-width="1.8" stroke-linejoin="round" stroke-linecap="round" /><polyline points="542.3,534.6 542.1,522.7 551.5,513.0" fill="none" stroke="#ffffff" stroke-width="1.8" stroke-linejoin="round" stroke-linecap="round" /><polyline points="542.3,534.6 520.7,529.2 507.5,530.4" fill="none" stroke="#ffffff" stroke-width="1.8" stroke-linejoin="round" stroke-linecap="round" /><polyline points="811.6,473.9 819.5,461.2 825.5,456.0" fill="none" stroke="#ffffff" stroke-width="1.8" stroke-linejoin="round" stroke-linecap="round" /><polyline points="811.6,473.9 814.7,455.0 816.9,437.6" fill="none" stroke="#ffffff" stroke-width="1.8" stroke-linejoin="round" stroke-linecap="round" /><polyline points="811.6,473.9 800.3,462.3 780.9,462.2" fill="none" stroke="#ffffff" stroke-width="1.8" stroke-linejoin="round" stroke-linecap="round" /><polyline points="849.3,349.8 834.8,355.5 827.5,372.3" fill="none" stroke="#ffffff" stroke-width="1.8" stroke-linejoin="round" stroke-linecap="round" /><polyline points="254.3,465.7 245.4,472.3 229.7,483.5" fill="none" stroke="#ffffff" stroke-width="1.8" stroke-linejoin="round" stroke-linecap="round" /><polyline points="718.0,570.8 707.4,552.1 703.2,531.6" fill="none" stroke="#ffffff" stroke-width="1.8" stroke-linejoin="round" stroke-linecap="round" /><polyline points="716.2,117.2 726.1,114.3 745.5,106.6" fill="none" stroke="#ffffff" stroke-width="1.8" stroke-linejoin="round" stroke-linecap="round" /><polyline points="12.5,188.5 27.4,202.6 36.2,218.9" fill="none" stroke="#ffffff" stroke-width="1.8" stroke-linejoin="round" stroke-linecap="round" /><polyline points="949.8,574.1 953.8,560.6 959.2,540.7" fill="none" stroke="#ffffff" stroke-width="1.8" stroke-linejoin="round" stroke-linecap="round" /><polyline points="399.8,113.6 397.7,141.9 386.3,172.4" fill="none" stroke="#ffffff" stroke-width="1.8" stroke-linejoin="round" stroke-linecap="round" /><polyline points="399.8,113.6 399.3,97.3 397.3,81.9" fill="none" stroke="#ffffff" stroke-width="1.8" stroke-linejoin="round" stroke-linecap="round" /><polyline points="223.8,3.4 208.5,13.0 199.2,21.3" fill="none" stroke="#ffffff" stroke-width="1.8" stroke-linejoin="round" stroke-linecap="round" /><polyline points="178.6,8.5 183.9,13.3 199.2,21.3" fill="none" stroke="#ffffff" stroke-width="1.8" stroke-linejoin="round" stroke-linecap="round" /><polyline points="216.9,73.0 222.3,53.5 216.2,45.7" fill="none" stroke="#ffffff" stroke-width="1.8" stroke-linejoin="round" stroke-linecap="round" /><polyline points="216.9,73.0 207.8,69.4 195.5,57.7" fill="none" stroke="#ffffff" stroke-width="1.8" stroke-linejoin="round" stroke-linecap="round" /><polyline points="216.9,73.0 226.7,52.7 245.4,37.3" fill="none" stroke="#ffffff" stroke-width="1.8" stroke-linejoin="round" stroke-linecap="round" /><polyline points="530.5,30.7 520.6,37.1 505.2,50.5" fill="none" stroke="#ffffff" stroke-width="1.8" stroke-linejoin="round" stroke-linecap="round" /><polyline points="530.5,30.7 554.3,13.4 579.4,0.2" fill="none" stroke="#ffffff" stroke-width="1.8" stroke-linejoin="round" stroke-linecap="round" /><polyline points="426.3,520.8 432.0,504.8 441.6,497.7" fill="none" stroke="#ffffff" stroke-width="1.8" stroke-linejoin="round" stroke-linecap="round" /><polyline points="421.6,70.9 412.2,71.2 397.3,81.9" fill="none" stroke="#ffffff" stroke-width="1.8" stroke-linejoin="round" stroke-linecap="round" /><polyline points="857.2,264.0 864.6,263.2 879.8,265.0" fill="none" stroke="#ffffff" stroke-width="1.8" stroke-linejoin="round" stroke-linecap="round" /><polyline points="857.2,264.0 847.9,250.1 840.7,245.3" fill="none" stroke="#ffffff" stroke-width="1.8" stroke-linejoin="round" stroke-linecap="round" /><polyline points="473.2,52.8 488.5,48.4 505.2,50.5" fill="none" stroke="#ffffff" stroke-width="1.8" stroke-linejoin="round" stroke-linecap="round" /><polyline points="473.2,52.8 475.7,68.6 482.5,80.9" fill="none" stroke="#ffffff" stroke-width="1.8" stroke-linejoin="round" stroke-linecap="round" /><polyline points="610.1,334.1 592.3,333.6 573.9,334.9" fill="none" stroke="#ffffff" stroke-width="1.8" stroke-linejoin="round" stroke-linecap="round" /><polyline points="634.5,207.5 653.8,217.2 663.5,233.1" fill="none" stroke="#ffffff" stroke-width="1.8" stroke-linejoin="round" stroke-linecap="round" /><polyline points="634.5,207.5 623.9,192.3 603.3,181.8" fill="none" stroke="#ffffff" stroke-width="1.8" stroke-linejoin="round" stroke-linecap="round" /><polyline points="486.1,101.8 477.0,111.5 462.8,131.7" fill="none" stroke="#ffffff" stroke-width="1.8" stroke-linejoin="round" stroke-linecap="round" /><polyline points="486.1,101.8 479.6,89.0 482.5,80.9" fill="none" stroke="#ffffff" stroke-width="1.8" stroke-linejoin="round" stroke-linecap="round" /><polyline points="957.5,450.5 951.8,430.6 940.2,420.3" fill="none" stroke="#ffffff" stroke-width="1.8" stroke-linejoin="round" stroke-linecap="round" /><polyline points="708.8,323.9 707.5,343.9 708.3,361.6" fill="none" stroke="#ffffff" stroke-width="1.8" stroke-linejoin="round" stroke-linecap="round" /><polyline points="708.8,323.9 711.9,325.8 724.5,338.1" fill="none" stroke="#ffffff" stroke-width="1.8" stroke-linejoin="round" stroke-linecap="round" /><polyline points="479.2,454.1 461.1,454.0 452.1,453.7" fill="none" stroke="#ffffff" stroke-width="1.8" stroke-linejoin="round" stroke-linecap="round" /><polyline points="479.2,454.1 484.3,435.3 480.0,421.9" fill="none" stroke="#ffffff" stroke-width="1.8" stroke-linejoin="round" stroke-linecap="round" /><polyline points="820.0,188.3 839.5,199.9 849.6,199.7" fill="none" stroke="#ffffff" stroke-width="1.8" stroke-linejoin="round" stroke-linecap="round" /><polyline points="820.0,188.3 815.5,207.0 816.9,218.2" fill="none" stroke="#ffffff" stroke-width="1.8" stroke-linejoin="round" stroke-linecap="round" /><polyline points="922.8,401.8 928.0,417.0 940.2,420.3" fill="none" stroke="#ffffff" stroke-width="1.8" stroke-linejoin="round" stroke-linecap="round" /><polyline points="796.4,328.5 796.3,342.1 793.5,363.0" fill="none" stroke="#ffffff" stroke-width="1.8" stroke-linejoin="round" stroke-linecap="round" /><polyline points="796.4,328.5 809.7,321.5 817.9,324.2" fill="none" stroke="#ffffff" stroke-width="1.8" stroke-linejoin="round" stroke-linecap="round" /><polyline points="796.4,328.5 787.1,316.4 787.2,304.9" fill="none" stroke="#ffffff" stroke-width="1.8" stroke-linejoin="round" stroke-linecap="round" /><polyline points="404.5,184.8 393.9,181.0 386.3,172.4" fill="none" stroke="#ffffff" stroke-width="1.8" stroke-linejoin="round" stroke-linecap="round" /><polyline points="679.5,17.8 691.1,16.0 699.1,16.4" fill="none" stroke="#ffffff" stroke-width="1.8" stroke-linejoin="round" stroke-linecap="round" /><polyline points="849.6,199.7 861.1,196.1 872.2,200.0" fill="none" stroke="#ffffff" stroke-width="1.8" stroke-linejoin="round" stroke-linecap="round" /><polyline points="849.6,199.7 856.0,216.8 851.3,227.2" fill="none" stroke="#ffffff" stroke-width="1.8" stroke-linejoin="round" stroke-linecap="round" /><polyline points="591.1,124.7 596.6,142.8 596.3,155.8" fill="none" stroke="#ffffff" stroke-width="1.8" stroke-linejoin="round" stroke-linecap="round" /><polyline points="768.7,287.0 754.5,298.4 743.4,302.5" fill="none" stroke="#ffffff" stroke-width="1.8" stroke-linejoin="round" stroke-linecap="round" /><polyline points="289.3,519.1 297.7,501.4 301.0,490.3" fill="none" stroke="#ffffff" stroke-width="1.8" stroke-linejoin="round" stroke-linecap="round" /><polyline points="772.8,485.9 771.1,469.3 780.9,462.2" fill="none" stroke="#ffffff" stroke-width="1.8" stroke-linejoin="round" stroke-linecap="round" /><polyline points="663.5,233.1 664.9,243.6 658.0,265.6" fill="none" stroke="#ffffff" stroke-width="1.8" stroke-linejoin="round" stroke-linecap="round" /><polyline points="691.9,144.0 710.1,146.4 720.9,144.0" fill="none" stroke="#ffffff" stroke-width="1.8" stroke-linejoin="round" stroke-linecap="round" /><polyline points="691.9,144.0 683.9,129.1 668.4,122.4" fill="none" stroke="#ffffff" stroke-width="1.8" stroke-linejoin="round" stroke-linecap="round" /><polyline points="597.2,92.6 583.4,90.8 564.6,87.1" fill="none" stroke="#ffffff" stroke-width="1.8" stroke-linejoin="round" stroke-linecap="round" /><polyline points="814.9,541.4 798.3,535.3 778.7,526.9" fill="none" stroke="#ffffff" stroke-width="1.8" stroke-linejoin="round" stroke-linecap="round" /><polyline points="853.5,466.3 837.5,463.6 825.5,456.0" fill="none" stroke="#ffffff" stroke-width="1.8" stroke-linejoin="round" stroke-linecap="round" /><polyline points="853.5,466.3 851.2,456.8 845.4,443.4" fill="none" stroke="#ffffff" stroke-width="1.8" stroke-linejoin="round" stroke-linecap="round" /><polyline points="389.9,490.0 391.7,504.3 386.9,520.0" fill="none" stroke="#ffffff" stroke-width="1.8" stroke-linejoin="round" stroke-linecap="round" /><polyline points="734.6,514.9 723.3,504.7 713.1,506.1" fill="none" stroke="#ffffff" stroke-width="1.8" stroke-linejoin="round" stroke-linecap="round" /><polyline points="866.1,483.2 879.0,472.8 883.6,455.8" fill="none" stroke="#ffffff" stroke-width="1.8" stroke-linejoin="round" stroke-linecap="round" /><polyline points="547.5,310.8 557.6,320.5 573.9,334.9" fill="none" stroke="#ffffff" stroke-width="1.8" stroke-linejoin="round" stroke-linecap="round" /><polyline points="532.7,517.0 531.4,509.1 532.7,497.7" fill="none" stroke="#ffffff" stroke-width="1.8" stroke-linejoin="round" stroke-linecap="round" /><polyline points="532.7,517.0 539.9,516.3 551.5,513.0" fill="none" stroke="#ffffff" stroke-width="1.8" stroke-linejoin="round" stroke-linecap="round" /><polyline points="909.7,232.5 898.8,251.2 879.8,265.0" fill="none" stroke="#ffffff" stroke-width="1.8" stroke-linejoin="round" stroke-linecap="round" /><polyline points="54.6,173.0 57.4,158.0 52.0,140.8" fill="none" stroke="#ffffff" stroke-width="1.8" stroke-linejoin="round" stroke-linecap="round" /><polyline points="733.0,263.7 739.7,277.9 743.4,302.5" fill="none" stroke="#ffffff" stroke-width="1.8" stroke-linejoin="round" stroke-linecap="round" /><polyline points="199.2,21.3 202.9,36.3 216.2,45.7" fill="none" stroke="#ffffff" stroke-width="1.8" stroke-linejoin="round" stroke-linecap="round" /><polyline points="904.0,453.0 895.0,449.8 883.6,455.8" fill="none" stroke="#ffffff" stroke-width="1.8" stroke-linejoin="round" stroke-linecap="round" /><polyline points="890.6,331.4 906.5,344.7 913.6,346.3" fill="none" stroke="#ffffff" stroke-width="1.8" stroke-linejoin="round" stroke-linecap="round" /><polyline points="890.6,331.4 901.3,321.6 922.9,302.8" fill="none" stroke="#ffffff" stroke-width="1.8" stroke-linejoin="round" stroke-linecap="round" /><polyline points="650.6,540.1 655.5,556.6 665.8,563.0" fill="none" stroke="#ffffff" stroke-width="1.8" stroke-linejoin="round" stroke-linecap="round" /><polyline points="650.6,540.1 649.0,551.4 637.9,568.8" fill="none" stroke="#ffffff" stroke-width="1.8" stroke-linejoin="round" stroke-linecap="round" /><polyline points="650.6,540.1 657.1,526.6 666.6,518.1" fill="none" stroke="#ffffff" stroke-width="1.8" stroke-linejoin="round" stroke-linecap="round" /><polyline points="453.2,58.8 450.9,66.8 445.8,78.9" fill="none" stroke="#ffffff" stroke-width="1.8" stroke-linejoin="round" stroke-linecap="round" /><polyline points="453.2,58.8 448.2,57.3 432.9,54.2" fill="none" stroke="#ffffff" stroke-width="1.8" stroke-linejoin="round" stroke-linecap="round" /><polyline points="321.3,34.9 315.9,18.6 311.4,1.0" fill="none" stroke="#ffffff" stroke-width="1.8" stroke-linejoin="round" stroke-linecap="round" /><polyline points="665.8,563.0 657.5,567.4 637.9,568.8" fill="none" stroke="#ffffff" stroke-width="1.8" stroke-linejoin="round" stroke-linecap="round" /><polyline points="913.6,346.3 927.8,348.5 938.7,349.9" fill="none" stroke="#ffffff" stroke-width="1.8" stroke-linejoin="round" stroke-linecap="round" /><polyline points="644.7,470.0 652.1,477.7 650.4,496.0" fill="none" stroke="#ffffff" stroke-width="1.8" stroke-linejoin="round" stroke-linecap="round" /><polyline points="644.7,470.0 622.2,473.3 610.9,473.1" fill="none" stroke="#ffffff" stroke-width="1.8" stroke-linejoin="round" stroke-linecap="round" /><polyline points="301.0,490.3 320.3,495.1 334.6,499.3" fill="none" stroke="#ffffff" stroke-width="1.8" stroke-linejoin="round" stroke-linecap="round" /><polyline points="825.5,456.0 819.1,447.8 816.9,437.6" fill="none" stroke="#ffffff" stroke-width="1.8" stroke-linejoin="round" stroke-linecap="round" /><polyline points="279.1,21.8 265.9,25.7 245.4,37.3" fill="none" stroke="#ffffff" stroke-width="1.8" stroke-linejoin="round" stroke-linecap="round" /><polyline points="432.0,258.2 456.4,234.8 486.3,211.5" fill="none" stroke="#ffffff" stroke-width="1.8" stroke-linejoin="round" stroke-linecap="round" /><polyline points="349.6,520.2 331.5,520.6 318.1,516.2" fill="none" stroke="#ffffff" stroke-width="1.8" stroke-linejoin="round" stroke-linecap="round" /><polyline points="349.6,520.2 337.6,513.4 334.6,499.3" fill="none" stroke="#ffffff" stroke-width="1.8" stroke-linejoin="round" stroke-linecap="round" /><polyline points="318.1,516.2 322.1,511.6 334.6,499.3" fill="none" stroke="#ffffff" stroke-width="1.8" stroke-linejoin="round" stroke-linecap="round" /><polyline points="216.2,45.7 202.4,56.9 195.5,57.7" fill="none" stroke="#ffffff" stroke-width="1.8" stroke-linejoin="round" stroke-linecap="round" /><polyline points="216.2,45.7 227.5,35.5 245.4,37.3" fill="none" stroke="#ffffff" stroke-width="1.8" stroke-linejoin="round" stroke-linecap="round" /><polyline points="805.3,235.1 803.5,221.3 794.0,217.1" fill="none" stroke="#ffffff" stroke-width="1.8" stroke-linejoin="round" stroke-linecap="round" /><polyline points="805.3,235.1 794.6,241.8 777.5,245.4" fill="none" stroke="#ffffff" stroke-width="1.8" stroke-linejoin="round" stroke-linecap="round" /><polyline points="805.3,235.1 816.9,224.6 816.9,218.2" fill="none" stroke="#ffffff" stroke-width="1.8" stroke-linejoin="round" stroke-linecap="round" /><polyline points="658.7,332.1 650.6,331.3 632.4,335.0" fill="none" stroke="#ffffff" stroke-width="1.8" stroke-linejoin="round" stroke-linecap="round" /><polyline points="658.7,332.1 660.1,325.9 657.0,311.5" fill="none" stroke="#ffffff" stroke-width="1.8" stroke-linejoin="round" stroke-linecap="round" /><polyline points="445.8,78.9 436.6,63.5 432.9,54.2" fill="none" stroke="#ffffff" stroke-width="1.8" stroke-linejoin="round" stroke-linecap="round" /><polyline points="650.4,496.0 654.1,511.3 666.6,518.1" fill="none" stroke="#ffffff" stroke-width="1.8" stroke-linejoin="round" stroke-linecap="round" /><polyline points="907.8,540.0 894.9,545.6 888.2,546.5" fill="none" stroke="#ffffff" stroke-width="1.8" stroke-linejoin="round" stroke-linecap="round" /><polyline points="907.8,540.0 909.2,559.7 919.7,572.7" fill="none" stroke="#ffffff" stroke-width="1.8" stroke-linejoin="round" stroke-linecap="round" /><polyline points="816.9,437.6 804.4,436.4 785.4,436.0" fill="none" stroke="#ffffff" stroke-width="1.8" stroke-linejoin="round" stroke-linecap="round" /><polyline points="522.3,452.1 525.9,457.9 523.4,473.4" fill="none" stroke="#ffffff" stroke-width="1.8" stroke-linejoin="round" stroke-linecap="round" /><polyline points="778.7,526.9 759.6,531.6 750.5,542.4" fill="none" stroke="#ffffff" stroke-width="1.8" stroke-linejoin="round" stroke-linecap="round" /><polyline points="632.4,335.0 648.1,325.8 657.0,311.5" fill="none" stroke="#ffffff" stroke-width="1.8" stroke-linejoin="round" stroke-linecap="round" /><polyline points="582.6,470.0 594.2,475.9 610.9,473.1" fill="none" stroke="#ffffff" stroke-width="1.8" stroke-linejoin="round" stroke-linecap="round" /><polyline points="563.3,63.7 582.6,62.7 602.4,64.7" fill="none" stroke="#ffffff" stroke-width="1.8" stroke-linejoin="round" stroke-linecap="round" /><polyline points="563.3,63.7 569.2,74.8 564.6,87.1" fill="none" stroke="#ffffff" stroke-width="1.8" stroke-linejoin="round" stroke-linecap="round" /><polyline points="758.2,472.6 748.5,481.1 748.3,489.6" fill="none" stroke="#ffffff" stroke-width="1.8" stroke-linejoin="round" stroke-linecap="round" /><polyline points="452.1,453.7 461.9,437.0 480.0,421.9" fill="none" stroke="#ffffff" stroke-width="1.8" stroke-linejoin="round" stroke-linecap="round" /><polyline points="789.6,127.5 778.8,133.9 768.5,143.1" fill="none" stroke="#ffffff" stroke-width="1.8" stroke-linejoin="round" stroke-linecap="round" /><polyline points="794.0,217.1 807.1,220.5 816.9,218.2" fill="none" stroke="#ffffff" stroke-width="1.8" stroke-linejoin="round" stroke-linecap="round" /><polyline points="668.4,122.4 663.8,110.8 655.3,103.8" fill="none" stroke="#ffffff" stroke-width="1.8" stroke-linejoin="round" stroke-linecap="round" /><polyline points="668.4,122.4 655.2,125.7 647.0,130.3" fill="none" stroke="#ffffff" stroke-width="1.8" stroke-linejoin="round" stroke-linecap="round" /><polyline points="596.3,155.8 604.7,173.6 603.3,181.8" fill="none" stroke="#ffffff" stroke-width="1.8" stroke-linejoin="round" stroke-linecap="round" /><polyline points="970.1,496.1 994.3,500.5 1008.3,501.6" fill="none" stroke="#ffffff" stroke-width="1.8" stroke-linejoin="round" stroke-linecap="round" /><polyline points="938.7,349.9 941.4,363.8 936.3,384.7" fill="none" stroke="#ffffff" stroke-width="1.8" stroke-linejoin="round" stroke-linecap="round" /><polyline points="708.3,361.6 715.4,350.8 724.5,338.1" fill="none" stroke="#ffffff" stroke-width="1.8" stroke-linejoin="round" stroke-linecap="round" /><polyline points="482.1,383.7 489.3,371.1 505.9,368.9" fill="none" stroke="#ffffff" stroke-width="1.8" stroke-linejoin="round" stroke-linecap="round" /><polyline points="602.4,64.7 584.5,75.3 564.6,87.1" fill="none" stroke="#ffffff" stroke-width="1.8" stroke-linejoin="round" stroke-linecap="round" /><polyline points="785.4,436.0 785.8,430.5 794.1,414.4" fill="none" stroke="#ffffff" stroke-width="1.8" stroke-linejoin="round" stroke-linecap="round" /><polyline points="703.2,531.6 711.5,518.1 713.1,506.1" fill="none" stroke="#ffffff" stroke-width="1.8" stroke-linejoin="round" stroke-linecap="round" /><polyline points="505.9,368.9 506.9,378.7 518.4,387.1" fill="none" stroke="#ffffff" stroke-width="1.8" stroke-linejoin="round" stroke-linecap="round" /><polyline points="486.3,211.5 488.5,218.0 497.2,235.5" fill="none" stroke="#ffffff" stroke-width="1.8" stroke-linejoin="round" stroke-linecap="round" /><polyline points="655.3,103.8 634.4,117.5 624.7,125.5" fill="none" stroke="#ffffff" stroke-width="1.8" stroke-linejoin="round" stroke-linecap="round" /><polyline points="753.8,89.2 746.2,73.7 746.1,65.9" fill="none" stroke="#ffffff" stroke-width="1.8" stroke-linejoin="round" stroke-linecap="round" /><polyline points="532.7,497.7 531.7,486.7 523.4,473.4" fill="none" stroke="#ffffff" stroke-width="1.8" stroke-linejoin="round" stroke-linecap="round" /><polyline points="872.2,200.0 867.4,215.7 851.3,227.2" fill="none" stroke="#ffffff" stroke-width="1.8" stroke-linejoin="round" stroke-linecap="round" /><polyline points="624.7,125.5 635.2,132.3 647.0,130.3" fill="none" stroke="#ffffff" stroke-width="1.8" stroke-linejoin="round" stroke-linecap="round" /><polyline points="193.7,252.3 213.1,241.6 227.7,235.7" fill="none" stroke="#ffffff" stroke-width="1.8" stroke-linejoin="round" stroke-linecap="round" /><polyline points="397.3,81.9 413.3,71.2 432.9,54.2" fill="none" stroke="#ffffff" stroke-width="1.8" stroke-linejoin="round" stroke-linecap="round" /><polyline points="715.4,41.7 704.3,30.9 699.1,16.4" fill="none" stroke="#ffffff" stroke-width="3.4" stroke-linejoin="round" stroke-linecap="round" /><polyline points="466.5,476.3 469.7,493.0 476.8,502.1" fill="none" stroke="#ffffff" stroke-width="3.4" stroke-linejoin="round" stroke-linecap="round" /><polyline points="466.5,476.3 480.9,481.4 491.0,482.8" fill="none" stroke="#ffffff" stroke-width="3.4" stroke-linejoin="round" stroke-linecap="round" /><polyline points="689.5,545.9 708.2,554.9 718.0,570.8" fill="none" stroke="#ffffff" stroke-width="3.4" stroke-linejoin="round" stroke-linecap="round" /><polyline points="689.5,545.9 674.7,549.6 665.8,563.0" fill="none" stroke="#ffffff" stroke-width="3.4" stroke-linejoin="round" stroke-linecap="round" /><polyline points="689.5,545.9 690.7,542.3 703.2,531.6" fill="none" stroke="#ffffff" stroke-width="3.4" stroke-linejoin="round" stroke-linecap="round" /><polyline points="634.2,228.5 630.8,217.5 634.5,207.5" fill="none" stroke="#ffffff" stroke-width="3.4" stroke-linejoin="round" stroke-linecap="round" /><polyline points="634.2,228.5 652.5,236.3 663.5,233.1" fill="none" stroke="#ffffff" stroke-width="3.4" stroke-linejoin="round" stroke-linecap="round" /><polyline points="639.2,368.0 652.0,365.4 655.2,357.1" fill="none" stroke="#ffffff" stroke-width="3.4" stroke-linejoin="round" stroke-linecap="round" /><polyline points="639.2,368.0 631.1,378.0 614.1,386.3" fill="none" stroke="#ffffff" stroke-width="3.4" stroke-linejoin="round" stroke-linecap="round" /><polyline points="498.0,172.7 494.2,188.6 486.3,211.5" fill="none" stroke="#ffffff" stroke-width="3.4" stroke-linejoin="round" stroke-linecap="round" /><polyline points="577.2,504.1 573.5,525.9 578.7,537.8" fill="none" stroke="#ffffff" stroke-width="3.4" stroke-linejoin="round" stroke-linecap="round" /><polyline points="577.2,504.1 568.2,512.0 551.5,513.0" fill="none" stroke="#ffffff" stroke-width="3.4" stroke-linejoin="round" stroke-linecap="round" /><polyline points="801.7,165.9 800.8,143.1 789.6,127.5" fill="none" stroke="#ffffff" stroke-width="3.4" stroke-linejoin="round" stroke-linecap="round" /><polyline points="801.7,165.9 814.0,156.1 830.4,140.8" fill="none" stroke="#ffffff" stroke-width="3.4" stroke-linejoin="round" stroke-linecap="round" /><polyline points="840.3,330.1 834.6,354.7 827.5,372.3" fill="none" stroke="#ffffff" stroke-width="3.4" stroke-linejoin="round" stroke-linecap="round" /><polyline points="637.3,262.8 646.7,265.4 658.0,265.6" fill="none" stroke="#ffffff" stroke-width="3.4" stroke-linejoin="round" stroke-linecap="round" /><polyline points="770.9,372.7 781.8,363.0 793.5,363.0" fill="none" stroke="#ffffff" stroke-width="3.4" stroke-linejoin="round" stroke-linecap="round" /><polyline points="128.7,34.0 131.0,26.4 144.0,8.2" fill="none" stroke="#ffffff" stroke-width="3.4" stroke-linejoin="round" stroke-linecap="round" /><polyline points="128.7,34.0 136.5,54.3 141.0,62.7" fill="none" stroke="#ffffff" stroke-width="3.4" stroke-linejoin="round" stroke-linecap="round" /><polyline points="493.7,316.5 519.7,296.7 539.4,283.1" fill="none" stroke="#ffffff" stroke-width="3.4" stroke-linejoin="round" stroke-linecap="round" /><polyline points="493.7,316.5 497.4,338.7 505.9,368.9" fill="none" stroke="#ffffff" stroke-width="3.4" stroke-linejoin="round" stroke-linecap="round" /><polyline points="493.7,316.5 492.6,323.2 501.6,337.3" fill="none" stroke="#ffffff" stroke-width="3.4" stroke-linejoin="round" stroke-linecap="round" /><polyline points="970.8,471.9 969.5,460.9 957.5,450.5" fill="none" stroke="#ffffff" stroke-width="3.4" stroke-linejoin="round" stroke-linecap="round" /><polyline points="970.8,471.9 983.6,472.8 994.1,482.2" fill="none" stroke="#ffffff" stroke-width="3.4" stroke-linejoin="round" stroke-linecap="round" /><polyline points="456.4,206.7 429.3,194.0 404.5,184.8" fill="none" stroke="#ffffff" stroke-width="3.4" stroke-linejoin="round" stroke-linecap="round" /><polyline points="456.4,206.7 442.4,234.7 432.0,258.2" fill="none" stroke="#ffffff" stroke-width="3.4" stroke-linejoin="round" stroke-linecap="round" /><polyline points="566.5,355.7 555.8,332.4 547.5,310.8" fill="none" stroke="#ffffff" stroke-width="3.4" stroke-linejoin="round" stroke-linecap="round" /><polyline points="566.5,355.7 575.6,341.1 573.9,334.9" fill="none" stroke="#ffffff" stroke-width="3.4" stroke-linejoin="round" stroke-linecap="round" /><polyline points="373.7,30.3 356.4,20.2 337.8,12.5" fill="none" stroke="#ffffff" stroke-width="3.4" stroke-linejoin="round" stroke-linecap="round" /><polyline points="376.6,152.5 383.1,162.2 386.3,172.4" fill="none" stroke="#ffffff" stroke-width="3.4" stroke-linejoin="round" stroke-linecap="round" /><polyline points="585.3,448.7 581.5,436.5 583.3,427.3" fill="none" stroke="#ffffff" stroke-width="3.4" stroke-linejoin="round" stroke-linecap="round" /><polyline points="891.9,567.3 895.7,556.0 907.8,540.0" fill="none" stroke="#ffffff" stroke-width="3.4" stroke-linejoin="round" stroke-linecap="round" /><polyline points="891.9,567.3 901.5,566.7 919.7,572.7" fill="none" stroke="#ffffff" stroke-width="3.4" stroke-linejoin="round" stroke-linecap="round" /><polyline points="899.3,426.2 897.4,408.9 886.9,394.4" fill="none" stroke="#ffffff" stroke-width="3.4" stroke-linejoin="round" stroke-linecap="round" /><polyline points="30.7,160.9 31.1,147.1 20.0,144.3" fill="none" stroke="#ffffff" stroke-width="3.4" stroke-linejoin="round" stroke-linecap="round" /><polyline points="30.7,160.9 23.2,170.1 12.5,188.5" fill="none" stroke="#ffffff" stroke-width="3.4" stroke-linejoin="round" stroke-linecap="round" /><polyline points="685.8,518.6 688.1,506.5 692.0,497.0" fill="none" stroke="#ffffff" stroke-width="3.4" stroke-linejoin="round" stroke-linecap="round" /><polyline points="685.8,518.6 678.7,514.4 666.6,518.1" fill="none" stroke="#ffffff" stroke-width="3.4" stroke-linejoin="round" stroke-linecap="round" /><polyline points="717.6,460.6 708.6,459.2 697.2,461.7" fill="none" stroke="#ffffff" stroke-width="3.4" stroke-linejoin="round" stroke-linecap="round" /><polyline points="717.6,460.6 700.4,463.5 681.8,474.9" fill="none" stroke="#ffffff" stroke-width="3.4" stroke-linejoin="round" stroke-linecap="round" /><polyline points="824.4,275.3 835.2,286.2 848.7,292.4" fill="none" stroke="#ffffff" stroke-width="3.4" stroke-linejoin="round" stroke-linecap="round" /><polyline points="824.4,275.3 826.6,263.9 840.7,245.3" fill="none" stroke="#ffffff" stroke-width="3.4" stroke-linejoin="round" stroke-linecap="round" /><polyline points="441.1,545.4 433.3,547.9 415.3,547.7" fill="none" stroke="#ffffff" stroke-width="3.4" stroke-linejoin="round" stroke-linecap="round" /><polyline points="144.0,8.2 155.8,21.3 156.0,29.9" fill="none" stroke="#ffffff" stroke-width="3.4" stroke-linejoin="round" stroke-linecap="round" /><polyline points="578.7,537.8 586.9,553.2 600.5,558.4" fill="none" stroke="#ffffff" stroke-width="3.4" stroke-linejoin="round" stroke-linecap="round" /><polyline points="578.7,537.8 564.9,557.6 540.8,571.3" fill="none" stroke="#ffffff" stroke-width="3.4" stroke-linejoin="round" stroke-linecap="round" /><polyline points="641.1,520.9 623.1,535.4 614.9,543.3" fill="none" stroke="#ffffff" stroke-width="3.4" stroke-linejoin="round" stroke-linecap="round" /><polyline points="641.1,520.9 626.1,513.9 612.6,501.5" fill="none" stroke="#ffffff" stroke-width="3.4" stroke-linejoin="round" stroke-linecap="round" /><polyline points="641.1,520.9 648.5,510.2 650.4,496.0" fill="none" stroke="#ffffff" stroke-width="3.4" stroke-linejoin="round" stroke-linecap="round" /><polyline points="641.1,520.9 653.8,522.1 666.6,518.1" fill="none" stroke="#ffffff" stroke-width="3.4" stroke-linejoin="round" stroke-linecap="round" /><polyline points="462.3,528.6 463.1,538.3 460.3,553.3" fill="none" stroke="#ffffff" stroke-width="3.4" stroke-linejoin="round" stroke-linecap="round" /><polyline points="520.4,417.7 516.8,437.9 522.3,452.1" fill="none" stroke="#ffffff" stroke-width="3.4" stroke-linejoin="round" stroke-linecap="round" /><polyline points="610.4,451.7 621.1,444.5 630.8,431.5" fill="none" stroke="#ffffff" stroke-width="3.4" stroke-linejoin="round" stroke-linecap="round" /><polyline points="610.4,451.7 612.3,460.9 610.9,473.1" fill="none" stroke="#ffffff" stroke-width="3.4" stroke-linejoin="round" stroke-linecap="round" /><polyline points="761.3,260.6 749.8,264.9 733.0,263.7" fill="none" stroke="#ffffff" stroke-width="3.4" stroke-linejoin="round" stroke-linecap="round" /><polyline points="761.3,260.6 767.6,239.9 763.5,226.7" fill="none" stroke="#ffffff" stroke-width="3.4" stroke-linejoin="round" stroke-linecap="round" /><polyline points="761.3,260.6 773.2,248.4 777.5,245.4" fill="none" stroke="#ffffff" stroke-width="3.4" stroke-linejoin="round" stroke-linecap="round" /><polyline points="586.1,275.3 562.7,277.3 539.4,283.1" fill="none" stroke="#ffffff" stroke-width="3.4" stroke-linejoin="round" stroke-linecap="round" /><polyline points="768.4,504.9 767.6,500.4 772.8,485.9" fill="none" stroke="#ffffff" stroke-width="3.4" stroke-linejoin="round" stroke-linecap="round" /><polyline points="614.9,543.3 612.0,550.2 600.5,558.4" fill="none" stroke="#ffffff" stroke-width="3.4" stroke-linejoin="round" stroke-linecap="round" /><polyline points="861.5,516.7 874.3,509.1 889.4,509.4" fill="none" stroke="#ffffff" stroke-width="3.4" stroke-linejoin="round" stroke-linecap="round" /><polyline points="861.5,516.7 874.5,531.5 888.2,546.5" fill="none" stroke="#ffffff" stroke-width="3.4" stroke-linejoin="round" stroke-linecap="round" /><polyline points="725.6,82.4 734.5,74.7 746.1,65.9" fill="none" stroke="#ffffff" stroke-width="3.4" stroke-linejoin="round" stroke-linecap="round" /><polyline points="970.2,557.3 981.4,546.0 1003.9,541.8" fill="none" stroke="#ffffff" stroke-width="3.4" stroke-linejoin="round" stroke-linecap="round" /><polyline points="970.2,557.3 970.1,551.2 959.2,540.7" fill="none" stroke="#ffffff" stroke-width="3.4" stroke-linejoin="round" stroke-linecap="round" /><polyline points="484.1,10.4 484.0,21.4 475.3,28.4" fill="none" stroke="#ffffff" stroke-width="3.4" stroke-linejoin="round" stroke-linecap="round" /><polyline points="484.1,10.4 492.5,20.6 507.1,19.4" fill="none" stroke="#ffffff" stroke-width="3.4" stroke-linejoin="round" stroke-linecap="round" /><polyline points="563.0,37.0 553.0,20.6 554.7,2.9" fill="none" stroke="#ffffff" stroke-width="3.4" stroke-linejoin="round" stroke-linecap="round" /><polyline points="866.4,559.7 871.3,547.7 888.2,546.5" fill="none" stroke="#ffffff" stroke-width="3.4" stroke-linejoin="round" stroke-linecap="round" /><polyline points="627.1,403.4 621.6,398.7 614.1,386.3" fill="none" stroke="#ffffff" stroke-width="3.4" stroke-linejoin="round" stroke-linecap="round" /><polyline points="697.2,461.7 684.7,473.5 681.8,474.9" fill="none" stroke="#ffffff" stroke-width="3.4" stroke-linejoin="round" stroke-linecap="round" /><polyline points="697.2,461.7 687.5,456.1 668.6,450.0" fill="none" stroke="#ffffff" stroke-width="3.4" stroke-linejoin="round" stroke-linecap="round" /><polyline points="177.4,29.0 183.7,28.1 199.2,21.3" fill="none" stroke="#ffffff" stroke-width="3.4" stroke-linejoin="round" stroke-linecap="round" /><polyline points="20.0,144.3 13.0,154.6 3.2,161.2" fill="none" stroke="#ffffff" stroke-width="3.4" stroke-linejoin="round" stroke-linecap="round" /><polyline points="20.0,144.3 26.5,132.1 27.7,118.7" fill="none" stroke="#ffffff" stroke-width="3.4" stroke-linejoin="round" stroke-linecap="round" /><polyline points="20.0,144.3 18.2,123.9 6.8,109.4" fill="none" stroke="#ffffff" stroke-width="3.4" stroke-linejoin="round" stroke-linecap="round" /><polyline points="900.0,248.9 890.8,257.7 879.8,265.0" fill="none" stroke="#ffffff" stroke-width="3.4" stroke-linejoin="round" stroke-linecap="round" /><polyline points="544.0,480.7 553.8,472.1 562.5,475.0" fill="none" stroke="#ffffff" stroke-width="3.4" stroke-linejoin="round" stroke-linecap="round" /><polyline points="544.0,480.7 530.6,481.0 523.4,473.4" fill="none" stroke="#ffffff" stroke-width="3.4" stroke-linejoin="round" stroke-linecap="round" /><polyline points="755.8,565.9 732.0,568.1 718.0,570.8" fill="none" stroke="#ffffff" stroke-width="3.4" stroke-linejoin="round" stroke-linecap="round" /><polyline points="755.8,565.9 751.2,557.3 750.5,542.4" fill="none" stroke="#ffffff" stroke-width="3.4" stroke-linejoin="round" stroke-linecap="round" /><polyline points="956.7,386.2 944.6,398.1 940.2,420.3" fill="none" stroke="#ffffff" stroke-width="3.4" stroke-linejoin="round" stroke-linecap="round" /><polyline points="289.3,554.0 306.8,543.4 313.9,538.9" fill="none" stroke="#ffffff" stroke-width="3.4" stroke-linejoin="round" stroke-linecap="round" /><polyline points="289.3,554.0 308.4,558.0 322.6,563.7" fill="none" stroke="#ffffff" stroke-width="3.4" stroke-linejoin="round" stroke-linecap="round" /><polyline points="554.7,2.9 537.3,16.9 530.5,30.7" fill="none" stroke="#ffffff" stroke-width="3.4" stroke-linejoin="round" stroke-linecap="round" /><polyline points="290.3,51.7 305.0,45.2 321.3,34.9" fill="none" stroke="#ffffff" stroke-width="3.4" stroke-linejoin="round" stroke-linecap="round" /><polyline points="290.3,51.7 289.6,30.8 279.1,21.8" fill="none" stroke="#ffffff" stroke-width="3.4" stroke-linejoin="round" stroke-linecap="round" /><polyline points="439.1,24.0 455.9,22.6 475.3,28.4" fill="none" stroke="#ffffff" stroke-width="3.4" stroke-linejoin="round" stroke-linecap="round" /><polyline points="439.1,24.0 426.4,22.3 409.2,8.7" fill="none" stroke="#ffffff" stroke-width="3.4" stroke-linejoin="round" stroke-linecap="round" /><polyline points="439.1,24.0 433.2,41.1 432.9,54.2" fill="none" stroke="#ffffff" stroke-width="3.4" stroke-linejoin="round" stroke-linecap="round" /><polyline points="722.6,412.4 735.4,408.1 750.5,399.4" fill="none" stroke="#ffffff" stroke-width="3.4" stroke-linejoin="round" stroke-linecap="round" /><polyline points="722.6,412.4 735.6,424.5 736.7,426.5" fill="none" stroke="#ffffff" stroke-width="3.4" stroke-linejoin="round" stroke-linecap="round" /><polyline points="358.4,567.2 372.4,558.7 386.3,550.4" fill="none" stroke="#ffffff" stroke-width="3.4" stroke-linejoin="round" stroke-linecap="round" /><polyline points="918.0,513.8 904.6,517.3 889.4,509.4" fill="none" stroke="#ffffff" stroke-width="3.4" stroke-linejoin="round" stroke-linecap="round" /><polyline points="689.4,422.7 691.4,411.0 688.2,392.1" fill="none" stroke="#ffffff" stroke-width="3.4" stroke-linejoin="round" stroke-linecap="round" /><polyline points="884.3,476.0 894.2,486.9 907.3,492.7" fill="none" stroke="#ffffff" stroke-width="3.4" stroke-linejoin="round" stroke-linecap="round" /><polyline points="884.3,476.0 881.0,478.8 866.1,483.2" fill="none" stroke="#ffffff" stroke-width="3.4" stroke-linejoin="round" stroke-linecap="round" /><polyline points="750.5,399.4 751.3,379.8 746.9,369.5" fill="none" stroke="#ffffff" stroke-width="3.4" stroke-linejoin="round" stroke-linecap="round" /><polyline points="750.5,399.4 745.7,407.0 736.7,426.5" fill="none" stroke="#ffffff" stroke-width="3.4" stroke-linejoin="round" stroke-linecap="round" /><polyline points="613.8,361.6 615.0,370.6 614.1,386.3" fill="none" stroke="#ffffff" stroke-width="3.4" stroke-linejoin="round" stroke-linecap="round" /><polyline points="688.2,392.1 683.2,381.2 678.1,370.2" fill="none" stroke="#ffffff" stroke-width="3.4" stroke-linejoin="round" stroke-linecap="round" /><polyline points="876.7,431.0 872.0,421.7 860.5,412.1" fill="none" stroke="#ffffff" stroke-width="3.4" stroke-linejoin="round" stroke-linecap="round" /><polyline points="876.7,431.0 885.2,443.5 883.6,455.8" fill="none" stroke="#ffffff" stroke-width="3.4" stroke-linejoin="round" stroke-linecap="round" /><polyline points="751.4,441.8 740.6,433.6 736.7,426.5" fill="none" stroke="#ffffff" stroke-width="3.4" stroke-linejoin="round" stroke-linecap="round" /><polyline points="678.1,370.2 678.4,385.4 673.1,407.7" fill="none" stroke="#ffffff" stroke-width="3.4" stroke-linejoin="round" stroke-linecap="round" /><polyline points="901.4,293.0 889.3,306.7 874.0,315.7" fill="none" stroke="#ffffff" stroke-width="3.4" stroke-linejoin="round" stroke-linecap="round" /><polyline points="901.4,293.0 906.9,296.2 922.9,302.8" fill="none" stroke="#ffffff" stroke-width="3.4" stroke-linejoin="round" stroke-linecap="round" /><polyline points="254.3,517.1 241.6,491.7 217.7,459.1" fill="none" stroke="#ffffff" stroke-width="3.4" stroke-linejoin="round" stroke-linecap="round" /><polyline points="254.3,517.1 274.6,517.9 289.3,519.1" fill="none" stroke="#ffffff" stroke-width="3.4" stroke-linejoin="round" stroke-linecap="round" /><polyline points="347.4,484.0 367.9,486.0 389.9,490.0" fill="none" stroke="#ffffff" stroke-width="3.4" stroke-linejoin="round" stroke-linecap="round" /><polyline points="347.4,484.0 354.2,498.3 349.6,520.2" fill="none" stroke="#ffffff" stroke-width="3.4" stroke-linejoin="round" stroke-linecap="round" /><polyline points="313.9,538.9 313.1,521.8 318.1,516.2" fill="none" stroke="#ffffff" stroke-width="3.4" stroke-linejoin="round" stroke-linecap="round" /><polyline points="313.9,538.9 316.8,545.4 322.6,563.7" fill="none" stroke="#ffffff" stroke-width="3.4" stroke-linejoin="round" stroke-linecap="round" /><polyline points="892.3,363.4 904.5,351.1 913.6,346.3" fill="none" stroke="#ffffff" stroke-width="3.4" stroke-linejoin="round" stroke-linecap="round" /><polyline points="892.3,363.4 891.7,380.2 886.9,394.4" fill="none" stroke="#ffffff" stroke-width="3.4" stroke-linejoin="round" stroke-linecap="round" /><polyline points="1003.9,541.8 988.7,529.3 977.7,527.8" fill="none" stroke="#ffffff" stroke-width="3.4" stroke-linejoin="round" stroke-linecap="round" /><polyline points="603.6,414.5 588.9,417.5 583.3,427.3" fill="none" stroke="#ffffff" stroke-width="3.4" stroke-linejoin="round" stroke-linecap="round" /><polyline points="495.5,433.5 482.8,449.7 479.2,454.1" fill="none" stroke="#ffffff" stroke-width="3.4" stroke-linejoin="round" stroke-linecap="round" /><polyline points="708.3,164.9 699.9,160.3 691.9,144.0" fill="none" stroke="#ffffff" stroke-width="3.4" stroke-linejoin="round" stroke-linecap="round" /><polyline points="812.2,562.3 815.4,543.6 821.3,517.6" fill="none" stroke="#ffffff" stroke-width="3.4" stroke-linejoin="round" stroke-linecap="round" /><polyline points="812.2,562.3 810.7,554.9 814.9,541.4" fill="none" stroke="#ffffff" stroke-width="3.4" stroke-linejoin="round" stroke-linecap="round" /><polyline points="546.3,126.7 565.3,119.8 591.1,124.7" fill="none" stroke="#ffffff" stroke-width="3.4" stroke-linejoin="round" stroke-linecap="round" /><polyline points="546.3,126.7 552.9,145.9 569.4,168.2" fill="none" stroke="#ffffff" stroke-width="3.4" stroke-linejoin="round" stroke-linecap="round" /><polyline points="546.3,126.7 555.6,112.7 564.6,87.1" fill="none" stroke="#ffffff" stroke-width="3.4" stroke-linejoin="round" stroke-linecap="round" /><polyline points="975.1,431.8 966.4,441.1 957.5,450.5" fill="none" stroke="#ffffff" stroke-width="3.4" stroke-linejoin="round" stroke-linecap="round" /><polyline points="692.0,497.0 703.3,499.0 713.1,506.1" fill="none" stroke="#ffffff" stroke-width="3.4" stroke-linejoin="round" stroke-linecap="round" /><polyline points="490.0,549.5 480.6,549.8 460.3,553.3" fill="none" stroke="#ffffff" stroke-width="3.4" stroke-linejoin="round" stroke-linecap="round" /><polyline points="490.0,549.5 499.3,559.2 504.9,568.2" fill="none" stroke="#ffffff" stroke-width="3.4" stroke-linejoin="round" stroke-linecap="round" /><polyline points="490.0,549.5 496.7,544.1 507.5,530.4" fill="none" stroke="#ffffff" stroke-width="3.4" stroke-linejoin="round" stroke-linecap="round" /><polyline points="907.3,492.7 897.4,506.6 889.4,509.4" fill="none" stroke="#ffffff" stroke-width="3.4" stroke-linejoin="round" stroke-linecap="round" /><polyline points="574.1,392.9 580.6,379.1 583.3,366.5" fill="none" stroke="#ffffff" stroke-width="3.4" stroke-linejoin="round" stroke-linecap="round" /><polyline points="660.6,6.0 679.5,7.6 699.1,16.4" fill="none" stroke="#ffffff" stroke-width="3.4" stroke-linejoin="round" stroke-linecap="round" /><polyline points="337.8,12.5 331.3,26.1 321.3,34.9" fill="none" stroke="#ffffff" stroke-width="3.4" stroke-linejoin="round" stroke-linecap="round" /><polyline points="337.8,12.5 348.4,12.3 366.8,11.8" fill="none" stroke="#ffffff" stroke-width="3.4" stroke-linejoin="round" stroke-linecap="round" /><polyline points="547.6,388.5 534.4,383.4 518.4,387.1" fill="none" stroke="#ffffff" stroke-width="3.4" stroke-linejoin="round" stroke-linecap="round" /><polyline points="37.5,194.7 49.4,184.7 54.6,173.0" fill="none" stroke="#ffffff" stroke-width="3.4" stroke-linejoin="round" stroke-linecap="round" /><polyline points="462.2,393.2 469.6,378.5 470.9,367.1" fill="none" stroke="#ffffff" stroke-width="3.4" stroke-linejoin="round" stroke-linecap="round" /><polyline points="462.2,393.2 466.4,408.9 480.0,421.9" fill="none" stroke="#ffffff" stroke-width="3.4" stroke-linejoin="round" stroke-linecap="round" /><polyline points="217.7,459.1 220.9,475.5 229.7,483.5" fill="none" stroke="#ffffff" stroke-width="3.4" stroke-linejoin="round" stroke-linecap="round" /><polyline points="812.3,290.8 819.0,307.8 817.9,324.2" fill="none" stroke="#ffffff" stroke-width="3.4" stroke-linejoin="round" stroke-linecap="round" /><polyline points="835.8,169.9 839.1,189.6 849.6,199.7" fill="none" stroke="#ffffff" stroke-width="3.4" stroke-linejoin="round" stroke-linecap="round" /><polyline points="835.8,169.9 848.3,183.0 872.2,200.0" fill="none" stroke="#ffffff" stroke-width="3.4" stroke-linejoin="round" stroke-linecap="round" /><polyline points="835.8,169.9 827.9,156.8 830.4,140.8" fill="none" stroke="#ffffff" stroke-width="3.4" stroke-linejoin="round" stroke-linecap="round" /><polyline points="432.4,122.7 412.0,115.6 399.8,113.6" fill="none" stroke="#ffffff" stroke-width="3.4" stroke-linejoin="round" stroke-linecap="round" /><polyline points="156.0,29.9 151.3,43.0 141.0,62.7" fill="none" stroke="#ffffff" stroke-width="3.4" stroke-linejoin="round" stroke-linecap="round" /><polyline points="987.1,508.9 978.8,523.9 977.7,527.8" fill="none" stroke="#ffffff" stroke-width="3.4" stroke-linejoin="round" stroke-linecap="round" /><polyline points="730.2,218.1 732.7,203.1 729.4,180.1" fill="none" stroke="#ffffff" stroke-width="3.4" stroke-linejoin="round" stroke-linecap="round" /><polyline points="730.2,218.1 734.0,239.7 733.0,263.7" fill="none" stroke="#ffffff" stroke-width="3.4" stroke-linejoin="round" stroke-linecap="round" /><polyline points="730.2,218.1 743.4,227.9 763.5,226.7" fill="none" stroke="#ffffff" stroke-width="3.4" stroke-linejoin="round" stroke-linecap="round" /><polyline points="3.2,161.2 7.9,174.8 12.5,188.5" fill="none" stroke="#ffffff" stroke-width="3.4" stroke-linejoin="round" stroke-linecap="round" /><polyline points="386.3,550.4 399.0,545.6 415.3,547.7" fill="none" stroke="#ffffff" stroke-width="3.4" stroke-linejoin="round" stroke-linecap="round" /><polyline points="386.3,550.4 389.3,537.1 386.9,520.0" fill="none" stroke="#ffffff" stroke-width="3.4" stroke-linejoin="round" stroke-linecap="round" /><polyline points="227.9,205.4 224.2,223.2 227.7,235.7" fill="none" stroke="#ffffff" stroke-width="3.4" stroke-linejoin="round" stroke-linecap="round" /><polyline points="227.9,205.4 239.6,189.5 243.8,183.3" fill="none" stroke="#ffffff" stroke-width="3.4" stroke-linejoin="round" stroke-linecap="round" /><polyline points="475.3,28.4 475.9,40.4 473.2,52.8" fill="none" stroke="#ffffff" stroke-width="3.4" stroke-linejoin="round" stroke-linecap="round" /><polyline points="475.3,28.4 492.1,20.5 507.1,19.4" fill="none" stroke="#ffffff" stroke-width="3.4" stroke-linejoin="round" stroke-linecap="round" /><polyline points="520.3,214.7 529.6,220.2 550.8,218.5" fill="none" stroke="#ffffff" stroke-width="3.4" stroke-linejoin="round" stroke-linecap="round" /><polyline points="821.3,517.6 802.1,526.0 778.7,526.9" fill="none" stroke="#ffffff" stroke-width="3.4" stroke-linejoin="round" stroke-linecap="round" /><polyline points="542.3,534.6 539.6,531.2 532.7,517.0" fill="none" stroke="#ffffff" stroke-width="3.4" stroke-linejoin="round" stroke-linecap="round" /><polyline points="542.3,534.6 540.2,548.7 540.8,571.3" fill="none" stroke="#ffffff" stroke-width="3.4" stroke-linejoin="round" stroke-linecap="round" /><polyline points="849.3,349.8 834.4,337.5 817.9,324.2" fill="none" stroke="#ffffff" stroke-width="3.4" stroke-linejoin="round" stroke-linecap="round" /><polyline points="409.1,498.9 416.2,509.6 426.3,520.8" fill="none" stroke="#ffffff" stroke-width="3.4" stroke-linejoin="round" stroke-linecap="round" /><polyline points="409.1,498.9 401.2,496.7 389.9,490.0" fill="none" stroke="#ffffff" stroke-width="3.4" stroke-linejoin="round" stroke-linecap="round" /><polyline points="409.1,498.9 398.6,512.2 386.9,520.0" fill="none" stroke="#ffffff" stroke-width="3.4" stroke-linejoin="round" stroke-linecap="round" /><polyline points="409.1,498.9 411.5,493.3 405.8,478.9" fill="none" stroke="#ffffff" stroke-width="3.4" stroke-linejoin="round" stroke-linecap="round" /><polyline points="409.1,498.9 422.3,493.3 441.6,497.7" fill="none" stroke="#ffffff" stroke-width="3.4" stroke-linejoin="round" stroke-linecap="round" /><polyline points="493.6,149.7 473.2,140.6 462.8,131.7" fill="none" stroke="#ffffff" stroke-width="3.4" stroke-linejoin="round" stroke-linecap="round" /><polyline points="493.6,149.7 495.3,139.6 501.8,130.3" fill="none" stroke="#ffffff" stroke-width="3.4" stroke-linejoin="round" stroke-linecap="round" /><polyline points="655.2,357.1 660.4,347.2 658.7,332.1" fill="none" stroke="#ffffff" stroke-width="3.4" stroke-linejoin="round" stroke-linecap="round" /><polyline points="655.2,357.1 640.5,340.1 632.4,335.0" fill="none" stroke="#ffffff" stroke-width="3.4" stroke-linejoin="round" stroke-linecap="round" /><polyline points="716.2,117.2 724.5,127.1 720.9,144.0" fill="none" stroke="#ffffff" stroke-width="3.4" stroke-linejoin="round" stroke-linecap="round" /><polyline points="745.5,106.6 748.4,95.7 753.8,89.2" fill="none" stroke="#ffffff" stroke-width="3.4" stroke-linejoin="round" stroke-linecap="round" /><polyline points="874.0,315.7 887.7,323.7 890.6,331.4" fill="none" stroke="#ffffff" stroke-width="3.4" stroke-linejoin="round" stroke-linecap="round" /><polyline points="949.8,574.1 934.4,569.5 919.7,572.7" fill="none" stroke="#ffffff" stroke-width="3.4" stroke-linejoin="round" stroke-linecap="round" /><polyline points="530.5,30.7 520.7,27.0 507.1,19.4" fill="none" stroke="#ffffff" stroke-width="3.4" stroke-linejoin="round" stroke-linecap="round" /><polyline points="681.8,474.9 672.6,466.0 668.6,450.0" fill="none" stroke="#ffffff" stroke-width="3.4" stroke-linejoin="round" stroke-linecap="round" /><polyline points="421.6,70.9 434.2,78.6 445.8,78.9" fill="none" stroke="#ffffff" stroke-width="3.4" stroke-linejoin="round" stroke-linecap="round" /><polyline points="421.6,70.9 421.5,65.2 432.9,54.2" fill="none" stroke="#ffffff" stroke-width="3.4" stroke-linejoin="round" stroke-linecap="round" /><polyline points="473.2,52.8 460.8,61.4 453.2,58.8" fill="none" stroke="#ffffff" stroke-width="3.4" stroke-linejoin="round" stroke-linecap="round" /><polyline points="415.3,547.7 417.5,560.3 422.3,566.7" fill="none" stroke="#ffffff" stroke-width="3.4" stroke-linejoin="round" stroke-linecap="round" /><polyline points="415.3,547.7 402.1,553.3 398.4,570.0" fill="none" stroke="#ffffff" stroke-width="3.4" stroke-linejoin="round" stroke-linecap="round" /><polyline points="583.3,366.5 583.1,347.1 573.9,334.9" fill="none" stroke="#ffffff" stroke-width="3.4" stroke-linejoin="round" stroke-linecap="round" /><polyline points="610.1,334.1 624.4,331.9 632.4,335.0" fill="none" stroke="#ffffff" stroke-width="3.4" stroke-linejoin="round" stroke-linecap="round" /><polyline points="634.5,207.5 647.7,199.9 662.8,203.4" fill="none" stroke="#ffffff" stroke-width="3.4" stroke-linejoin="round" stroke-linecap="round" /><polyline points="486.1,101.8 488.2,114.6 501.8,130.3" fill="none" stroke="#ffffff" stroke-width="3.4" stroke-linejoin="round" stroke-linecap="round" /><polyline points="729.4,180.1 708.0,181.8 687.2,195.0" fill="none" stroke="#ffffff" stroke-width="3.4" stroke-linejoin="round" stroke-linecap="round" /><polyline points="729.4,180.1 735.8,172.6 748.8,175.1" fill="none" stroke="#ffffff" stroke-width="3.4" stroke-linejoin="round" stroke-linecap="round" /><polyline points="729.4,180.1 729.6,170.2 737.1,159.9" fill="none" stroke="#ffffff" stroke-width="3.4" stroke-linejoin="round" stroke-linecap="round" /><polyline points="521.9,77.6 517.4,63.1 505.2,50.5" fill="none" stroke="#ffffff" stroke-width="3.4" stroke-linejoin="round" stroke-linecap="round" /><polyline points="521.9,77.6 499.1,83.3 482.5,80.9" fill="none" stroke="#ffffff" stroke-width="3.4" stroke-linejoin="round" stroke-linecap="round" /><polyline points="708.8,323.9 714.3,312.8 717.6,296.4" fill="none" stroke="#ffffff" stroke-width="3.4" stroke-linejoin="round" stroke-linecap="round" /><polyline points="806.1,143.1 797.8,131.6 789.6,127.5" fill="none" stroke="#ffffff" stroke-width="3.4" stroke-linejoin="round" stroke-linecap="round" /><polyline points="806.1,143.1 815.6,143.0 830.4,140.8" fill="none" stroke="#ffffff" stroke-width="3.4" stroke-linejoin="round" stroke-linecap="round" /><polyline points="860.5,412.1 871.0,404.9 886.9,394.4" fill="none" stroke="#ffffff" stroke-width="3.4" stroke-linejoin="round" stroke-linecap="round" /><polyline points="860.5,412.1 856.5,427.7 845.4,443.4" fill="none" stroke="#ffffff" stroke-width="3.4" stroke-linejoin="round" stroke-linecap="round" /><polyline points="479.2,454.1 487.7,467.0 491.0,482.8" fill="none" stroke="#ffffff" stroke-width="3.4" stroke-linejoin="round" stroke-linecap="round" /><polyline points="922.8,401.8 933.3,393.9 936.3,384.7" fill="none" stroke="#ffffff" stroke-width="3.4" stroke-linejoin="round" stroke-linecap="round" /><polyline points="922.8,401.8 924.9,381.9 918.3,369.8" fill="none" stroke="#ffffff" stroke-width="3.4" stroke-linejoin="round" stroke-linecap="round" /><polyline points="684.3,44.8 684.1,25.8 679.5,17.8" fill="none" stroke="#ffffff" stroke-width="3.4" stroke-linejoin="round" stroke-linecap="round" /><polyline points="684.3,44.8 697.2,29.3 699.1,16.4" fill="none" stroke="#ffffff" stroke-width="3.4" stroke-linejoin="round" stroke-linecap="round" /><polyline points="591.1,124.7 593.7,112.8 597.2,92.6" fill="none" stroke="#ffffff" stroke-width="3.4" stroke-linejoin="round" stroke-linecap="round" /><polyline points="591.1,124.7 611.9,129.7 624.7,125.5" fill="none" stroke="#ffffff" stroke-width="3.4" stroke-linejoin="round" stroke-linecap="round" /><polyline points="539.4,283.1 546.9,296.6 547.5,310.8" fill="none" stroke="#ffffff" stroke-width="3.4" stroke-linejoin="round" stroke-linecap="round" /><polyline points="768.7,287.0 782.1,298.0 787.2,304.9" fill="none" stroke="#ffffff" stroke-width="3.4" stroke-linejoin="round" stroke-linecap="round" /><polyline points="27.7,118.7 13.1,114.9 6.8,109.4" fill="none" stroke="#ffffff" stroke-width="3.4" stroke-linejoin="round" stroke-linecap="round" /><polyline points="27.7,118.7 37.9,125.0 52.0,140.8" fill="none" stroke="#ffffff" stroke-width="3.4" stroke-linejoin="round" stroke-linecap="round" /><polyline points="289.3,519.1 301.6,521.8 318.1,516.2" fill="none" stroke="#ffffff" stroke-width="3.4" stroke-linejoin="round" stroke-linecap="round" /><polyline points="550.8,218.5 557.3,192.1 569.4,168.2" fill="none" stroke="#ffffff" stroke-width="3.4" stroke-linejoin="round" stroke-linecap="round" /><polyline points="550.8,218.5 523.2,225.6 497.2,235.5" fill="none" stroke="#ffffff" stroke-width="3.4" stroke-linejoin="round" stroke-linecap="round" /><polyline points="827.5,372.3 814.8,366.1 793.5,363.0" fill="none" stroke="#ffffff" stroke-width="3.4" stroke-linejoin="round" stroke-linecap="round" /><polyline points="772.8,485.9 771.0,476.0 758.2,472.6" fill="none" stroke="#ffffff" stroke-width="3.4" stroke-linejoin="round" stroke-linecap="round" /><polyline points="772.8,485.9 761.5,487.8 748.3,489.6" fill="none" stroke="#ffffff" stroke-width="3.4" stroke-linejoin="round" stroke-linecap="round" /><polyline points="422.3,566.7 407.8,574.0 398.4,570.0" fill="none" stroke="#ffffff" stroke-width="3.4" stroke-linejoin="round" stroke-linecap="round" /><polyline points="663.5,233.1 669.0,222.9 662.8,203.4" fill="none" stroke="#ffffff" stroke-width="3.4" stroke-linejoin="round" stroke-linecap="round" /><polyline points="597.2,92.6 597.0,77.4 602.4,64.7" fill="none" stroke="#ffffff" stroke-width="3.4" stroke-linejoin="round" stroke-linecap="round" /><polyline points="814.9,541.4 804.5,556.5 786.7,570.1" fill="none" stroke="#ffffff" stroke-width="3.4" stroke-linejoin="round" stroke-linecap="round" /><polyline points="853.5,466.3 864.9,473.2 866.1,483.2" fill="none" stroke="#ffffff" stroke-width="3.4" stroke-linejoin="round" stroke-linecap="round" /><polyline points="389.9,490.0 401.0,482.2 405.8,478.9" fill="none" stroke="#ffffff" stroke-width="3.4" stroke-linejoin="round" stroke-linecap="round" /><polyline points="470.9,367.1 478.0,379.1 482.1,383.7" fill="none" stroke="#ffffff" stroke-width="3.4" stroke-linejoin="round" stroke-linecap="round" /><polyline points="470.9,367.1 490.6,372.7 505.9,368.9" fill="none" stroke="#ffffff" stroke-width="3.4" stroke-linejoin="round" stroke-linecap="round" /><polyline points="470.9,367.1 481.9,352.1 501.6,337.3" fill="none" stroke="#ffffff" stroke-width="3.4" stroke-linejoin="round" stroke-linecap="round" /><polyline points="720.9,144.0 734.4,157.9 737.1,159.9" fill="none" stroke="#ffffff" stroke-width="3.4" stroke-linejoin="round" stroke-linecap="round" /><polyline points="668.6,450.0 660.2,461.6 644.7,470.0" fill="none" stroke="#ffffff" stroke-width="3.4" stroke-linejoin="round" stroke-linecap="round" /><polyline points="734.6,514.9 748.2,524.8 750.5,542.4" fill="none" stroke="#ffffff" stroke-width="3.4" stroke-linejoin="round" stroke-linecap="round" /><polyline points="734.6,514.9 740.4,507.7 748.3,489.6" fill="none" stroke="#ffffff" stroke-width="3.4" stroke-linejoin="round" stroke-linecap="round" /><polyline points="532.7,517.0 516.5,521.7 507.5,530.4" fill="none" stroke="#ffffff" stroke-width="3.4" stroke-linejoin="round" stroke-linecap="round" /><polyline points="687.2,195.0 670.1,193.9 662.8,203.4" fill="none" stroke="#ffffff" stroke-width="3.4" stroke-linejoin="round" stroke-linecap="round" /><polyline points="54.6,173.0 39.6,194.6 36.2,218.9" fill="none" stroke="#ffffff" stroke-width="3.4" stroke-linejoin="round" stroke-linecap="round" /><polyline points="733.0,263.7 723.8,280.0 717.6,296.4" fill="none" stroke="#ffffff" stroke-width="3.4" stroke-linejoin="round" stroke-linecap="round" /><polyline points="940.2,420.3 939.0,408.4 936.3,384.7" fill="none" stroke="#ffffff" stroke-width="3.4" stroke-linejoin="round" stroke-linecap="round" /><polyline points="913.6,346.3 921.3,352.2 918.3,369.8" fill="none" stroke="#ffffff" stroke-width="3.4" stroke-linejoin="round" stroke-linecap="round" /><polyline points="301.0,490.3 306.4,501.8 318.1,516.2" fill="none" stroke="#ffffff" stroke-width="3.4" stroke-linejoin="round" stroke-linecap="round" /><polyline points="825.5,456.0 838.8,455.1 845.4,443.4" fill="none" stroke="#ffffff" stroke-width="3.4" stroke-linejoin="round" stroke-linecap="round" /><polyline points="505.2,50.5 506.3,33.6 507.1,19.4" fill="none" stroke="#ffffff" stroke-width="3.4" stroke-linejoin="round" stroke-linecap="round" /><polyline points="612.6,501.5 615.0,492.5 610.9,473.1" fill="none" stroke="#ffffff" stroke-width="3.4" stroke-linejoin="round" stroke-linecap="round" /><polyline points="432.0,258.2 460.6,251.0 497.2,235.5" fill="none" stroke="#ffffff" stroke-width="3.4" stroke-linejoin="round" stroke-linecap="round" /><polyline points="994.1,482.2 982.7,494.3 970.1,496.1" fill="none" stroke="#ffffff" stroke-width="3.4" stroke-linejoin="round" stroke-linecap="round" /><polyline points="994.1,482.2 999.2,487.8 1008.3,501.6" fill="none" stroke="#ffffff" stroke-width="3.4" stroke-linejoin="round" stroke-linecap="round" /><polyline points="711.6,69.3 726.5,62.8 746.1,65.9" fill="none" stroke="#ffffff" stroke-width="3.4" stroke-linejoin="round" stroke-linecap="round" /><polyline points="816.9,437.6 827.0,435.8 845.4,443.4" fill="none" stroke="#ffffff" stroke-width="3.4" stroke-linejoin="round" stroke-linecap="round" /><polyline points="816.9,437.6 810.0,422.0 794.1,414.4" fill="none" stroke="#ffffff" stroke-width="3.4" stroke-linejoin="round" stroke-linecap="round" /><polyline points="643.8,286.8 655.4,275.1 658.0,265.6" fill="none" stroke="#ffffff" stroke-width="3.4" stroke-linejoin="round" stroke-linecap="round" /><polyline points="643.8,286.8 644.8,297.2 657.0,311.5" fill="none" stroke="#ffffff" stroke-width="3.4" stroke-linejoin="round" stroke-linecap="round" /><polyline points="743.4,302.5 747.7,314.2 751.2,321.1" fill="none" stroke="#ffffff" stroke-width="3.4" stroke-linejoin="round" stroke-linecap="round" /><polyline points="743.4,302.5 729.2,297.0 717.6,296.4" fill="none" stroke="#ffffff" stroke-width="3.4" stroke-linejoin="round" stroke-linecap="round" /><polyline points="582.6,470.0 575.4,469.1 562.5,475.0" fill="none" stroke="#ffffff" stroke-width="3.4" stroke-linejoin="round" stroke-linecap="round" /><polyline points="758.2,472.6 773.9,464.5 780.9,462.2" fill="none" stroke="#ffffff" stroke-width="3.4" stroke-linejoin="round" stroke-linecap="round" /><polyline points="794.0,217.1 783.4,220.4 763.5,226.7" fill="none" stroke="#ffffff" stroke-width="3.4" stroke-linejoin="round" stroke-linecap="round" /><polyline points="596.3,155.8 582.6,167.5 569.4,168.2" fill="none" stroke="#ffffff" stroke-width="3.4" stroke-linejoin="round" stroke-linecap="round" /><polyline points="768.5,143.1 757.6,165.0 748.8,175.1" fill="none" stroke="#ffffff" stroke-width="3.4" stroke-linejoin="round" stroke-linecap="round" /><polyline points="768.5,143.1 757.0,155.3 737.1,159.9" fill="none" stroke="#ffffff" stroke-width="3.4" stroke-linejoin="round" stroke-linecap="round" /><polyline points="938.7,349.9 928.1,358.8 918.3,369.8" fill="none" stroke="#ffffff" stroke-width="3.4" stroke-linejoin="round" stroke-linecap="round" /><polyline points="763.5,226.7 774.1,238.8 777.5,245.4" fill="none" stroke="#ffffff" stroke-width="3.4" stroke-linejoin="round" stroke-linecap="round" /><polyline points="600.5,558.4 625.0,560.2 637.9,568.8" fill="none" stroke="#ffffff" stroke-width="3.4" stroke-linejoin="round" stroke-linecap="round" /><polyline points="405.8,478.9 429.1,489.9 441.6,497.7" fill="none" stroke="#ffffff" stroke-width="3.4" stroke-linejoin="round" stroke-linecap="round" /><polyline points="785.4,436.0 782.1,447.3 780.9,462.2" fill="none" stroke="#ffffff" stroke-width="3.4" stroke-linejoin="round" stroke-linecap="round" /><polyline points="409.2,8.7 388.5,9.4 366.8,11.8" fill="none" stroke="#ffffff" stroke-width="3.4" stroke-linejoin="round" stroke-linecap="round" /><polyline points="504.9,568.2 504.0,549.2 507.5,530.4" fill="none" stroke="#ffffff" stroke-width="3.4" stroke-linejoin="round" stroke-linecap="round" /><polyline points="504.9,568.2 528.6,570.5 540.8,571.3" fill="none" stroke="#ffffff" stroke-width="3.4" stroke-linejoin="round" stroke-linecap="round" /><polyline points="959.2,540.7 963.1,530.1 977.7,527.8" fill="none" stroke="#ffffff" stroke-width="3.4" stroke-linejoin="round" stroke-linecap="round" /><polyline points="748.8,175.1 746.3,172.2 737.1,159.9" fill="none" stroke="#ffffff" stroke-width="3.4" stroke-linejoin="round" stroke-linecap="round" /><polyline points="603.3,181.8 586.7,169.5 569.4,168.2" fill="none" stroke="#ffffff" stroke-width="3.4" stroke-linejoin="round" stroke-linecap="round" /><polyline points="505.9,368.9 521.2,370.9 532.5,368.3" fill="none" stroke="#ffffff" stroke-width="3.4" stroke-linejoin="round" stroke-linecap="round" /><polyline points="505.9,368.9 508.8,356.9 501.6,337.3" fill="none" stroke="#ffffff" stroke-width="3.4" stroke-linejoin="round" stroke-linecap="round" /><polyline points="655.3,103.8 648.5,116.4 647.0,130.3" fill="none" stroke="#ffffff" stroke-width="3.4" stroke-linejoin="round" stroke-linecap="round" /><polyline points="532.7,497.7 541.5,507.9 551.5,513.0" fill="none" stroke="#ffffff" stroke-width="3.4" stroke-linejoin="round" stroke-linecap="round" /><polyline points="751.2,321.1 736.6,330.3 724.5,338.1" fill="none" stroke="#ffffff" stroke-width="3.4" stroke-linejoin="round" stroke-linecap="round" /><polyline points="851.3,227.2 847.7,231.4 840.7,245.3" fill="none" stroke="#ffffff" stroke-width="3.4" stroke-linejoin="round" stroke-linecap="round" /><polyline points="936.3,384.7 924.0,381.4 918.3,369.8" fill="none" stroke="#ffffff" stroke-width="3.4" stroke-linejoin="round" stroke-linecap="round" /><polyline points="532.5,368.3 528.1,375.4 518.4,387.1" fill="none" stroke="#ffffff" stroke-width="3.4" stroke-linejoin="round" stroke-linecap="round" /><polyline points="227.7,235.7 239.5,215.3 243.8,183.3" fill="none" stroke="#ffffff" stroke-width="3.4" stroke-linejoin="round" stroke-linecap="round" /><polyline points="715.4,41.7 704.3,30.9 699.1,16.4" fill="none" stroke="#f3d15a" stroke-width="1.7" stroke-linejoin="round" stroke-linecap="round" /><polyline points="466.5,476.3 469.7,493.0 476.8,502.1" fill="none" stroke="#f3d15a" stroke-width="1.7" stroke-linejoin="round" stroke-linecap="round" /><polyline points="466.5,476.3 480.9,481.4 491.0,482.8" fill="none" stroke="#f3d15a" stroke-width="1.7" stroke-linejoin="round" stroke-linecap="round" /><polyline points="689.5,545.9 708.2,554.9 718.0,570.8" fill="none" stroke="#f3d15a" stroke-width="1.7" stroke-linejoin="round" stroke-linecap="round" /><polyline points="689.5,545.9 674.7,549.6 665.8,563.0" fill="none" stroke="#f3d15a" stroke-width="1.7" stroke-linejoin="round" stroke-linecap="round" /><polyline points="689.5,545.9 690.7,542.3 703.2,531.6" fill="none" stroke="#f3d15a" stroke-width="1.7" stroke-linejoin="round" stroke-linecap="round" /><polyline points="634.2,228.5 630.8,217.5 634.5,207.5" fill="none" stroke="#f3d15a" stroke-width="1.7" stroke-linejoin="round" stroke-linecap="round" /><polyline points="634.2,228.5 652.5,236.3 663.5,233.1" fill="none" stroke="#f3d15a" stroke-width="1.7" stroke-linejoin="round" stroke-linecap="round" /><polyline points="639.2,368.0 652.0,365.4 655.2,357.1" fill="none" stroke="#f3d15a" stroke-width="1.7" stroke-linejoin="round" stroke-linecap="round" /><polyline points="639.2,368.0 631.1,378.0 614.1,386.3" fill="none" stroke="#f3d15a" stroke-width="1.7" stroke-linejoin="round" stroke-linecap="round" /><polyline points="498.0,172.7 494.2,188.6 486.3,211.5" fill="none" stroke="#f3d15a" stroke-width="1.7" stroke-linejoin="round" stroke-linecap="round" /><polyline points="577.2,504.1 573.5,525.9 578.7,537.8" fill="none" stroke="#f3d15a" stroke-width="1.7" stroke-linejoin="round" stroke-linecap="round" /><polyline points="577.2,504.1 568.2,512.0 551.5,513.0" fill="none" stroke="#f3d15a" stroke-width="1.7" stroke-linejoin="round" stroke-linecap="round" /><polyline points="801.7,165.9 800.8,143.1 789.6,127.5" fill="none" stroke="#f3d15a" stroke-width="1.7" stroke-linejoin="round" stroke-linecap="round" /><polyline points="801.7,165.9 814.0,156.1 830.4,140.8" fill="none" stroke="#f3d15a" stroke-width="1.7" stroke-linejoin="round" stroke-linecap="round" /><polyline points="840.3,330.1 834.6,354.7 827.5,372.3" fill="none" stroke="#f3d15a" stroke-width="1.7" stroke-linejoin="round" stroke-linecap="round" /><polyline points="637.3,262.8 646.7,265.4 658.0,265.6" fill="none" stroke="#f3d15a" stroke-width="1.7" stroke-linejoin="round" stroke-linecap="round" /><polyline points="770.9,372.7 781.8,363.0 793.5,363.0" fill="none" stroke="#f3d15a" stroke-width="1.7" stroke-linejoin="round" stroke-linecap="round" /><polyline points="128.7,34.0 131.0,26.4 144.0,8.2" fill="none" stroke="#f3d15a" stroke-width="1.7" stroke-linejoin="round" stroke-linecap="round" /><polyline points="128.7,34.0 136.5,54.3 141.0,62.7" fill="none" stroke="#f3d15a" stroke-width="1.7" stroke-linejoin="round" stroke-linecap="round" /><polyline points="493.7,316.5 519.7,296.7 539.4,283.1" fill="none" stroke="#f3d15a" stroke-width="1.7" stroke-linejoin="round" stroke-linecap="round" /><polyline points="493.7,316.5 497.4,338.7 505.9,368.9" fill="none" stroke="#f3d15a" stroke-width="1.7" stroke-linejoin="round" stroke-linecap="round" /><polyline points="493.7,316.5 492.6,323.2 501.6,337.3" fill="none" stroke="#f3d15a" stroke-width="1.7" stroke-linejoin="round" stroke-linecap="round" /><polyline points="970.8,471.9 969.5,460.9 957.5,450.5" fill="none" stroke="#f3d15a" stroke-width="1.7" stroke-linejoin="round" stroke-linecap="round" /><polyline points="970.8,471.9 983.6,472.8 994.1,482.2" fill="none" stroke="#f3d15a" stroke-width="1.7" stroke-linejoin="round" stroke-linecap="round" /><polyline points="456.4,206.7 429.3,194.0 404.5,184.8" fill="none" stroke="#f3d15a" stroke-width="1.7" stroke-linejoin="round" stroke-linecap="round" /><polyline points="456.4,206.7 442.4,234.7 432.0,258.2" fill="none" stroke="#f3d15a" stroke-width="1.7" stroke-linejoin="round" stroke-linecap="round" /><polyline points="566.5,355.7 555.8,332.4 547.5,310.8" fill="none" stroke="#f3d15a" stroke-width="1.7" stroke-linejoin="round" stroke-linecap="round" /><polyline points="566.5,355.7 575.6,341.1 573.9,334.9" fill="none" stroke="#f3d15a" stroke-width="1.7" stroke-linejoin="round" stroke-linecap="round" /><polyline points="373.7,30.3 356.4,20.2 337.8,12.5" fill="none" stroke="#f3d15a" stroke-width="1.7" stroke-linejoin="round" stroke-linecap="round" /><polyline points="376.6,152.5 383.1,162.2 386.3,172.4" fill="none" stroke="#f3d15a" stroke-width="1.7" stroke-linejoin="round" stroke-linecap="round" /><polyline points="585.3,448.7 581.5,436.5 583.3,427.3" fill="none" stroke="#f3d15a" stroke-width="1.7" stroke-linejoin="round" stroke-linecap="round" /><polyline points="891.9,567.3 895.7,556.0 907.8,540.0" fill="none" stroke="#f3d15a" stroke-width="1.7" stroke-linejoin="round" stroke-linecap="round" /><polyline points="891.9,567.3 901.5,566.7 919.7,572.7" fill="none" stroke="#f3d15a" stroke-width="1.7" stroke-linejoin="round" stroke-linecap="round" /><polyline points="899.3,426.2 897.4,408.9 886.9,394.4" fill="none" stroke="#f3d15a" stroke-width="1.7" stroke-linejoin="round" stroke-linecap="round" /><polyline points="30.7,160.9 31.1,147.1 20.0,144.3" fill="none" stroke="#f3d15a" stroke-width="1.7" stroke-linejoin="round" stroke-linecap="round" /><polyline points="30.7,160.9 23.2,170.1 12.5,188.5" fill="none" stroke="#f3d15a" stroke-width="1.7" stroke-linejoin="round" stroke-linecap="round" /><polyline points="685.8,518.6 688.1,506.5 692.0,497.0" fill="none" stroke="#f3d15a" stroke-width="1.7" stroke-linejoin="round" stroke-linecap="round" /><polyline points="685.8,518.6 678.7,514.4 666.6,518.1" fill="none" stroke="#f3d15a" stroke-width="1.7" stroke-linejoin="round" stroke-linecap="round" /><polyline points="717.6,460.6 708.6,459.2 697.2,461.7" fill="none" stroke="#f3d15a" stroke-width="1.7" stroke-linejoin="round" stroke-linecap="round" /><polyline points="717.6,460.6 700.4,463.5 681.8,474.9" fill="none" stroke="#f3d15a" stroke-width="1.7" stroke-linejoin="round" stroke-linecap="round" /><polyline points="824.4,275.3 835.2,286.2 848.7,292.4" fill="none" stroke="#f3d15a" stroke-width="1.7" stroke-linejoin="round" stroke-linecap="round" /><polyline points="824.4,275.3 826.6,263.9 840.7,245.3" fill="none" stroke="#f3d15a" stroke-width="1.7" stroke-linejoin="round" stroke-linecap="round" /><polyline points="441.1,545.4 433.3,547.9 415.3,547.7" fill="none" stroke="#f3d15a" stroke-width="1.7" stroke-linejoin="round" stroke-linecap="round" /><polyline points="144.0,8.2 155.8,21.3 156.0,29.9" fill="none" stroke="#f3d15a" stroke-width="1.7" stroke-linejoin="round" stroke-linecap="round" /><polyline points="578.7,537.8 586.9,553.2 600.5,558.4" fill="none" stroke="#f3d15a" stroke-width="1.7" stroke-linejoin="round" stroke-linecap="round" /><polyline points="578.7,537.8 564.9,557.6 540.8,571.3" fill="none" stroke="#f3d15a" stroke-width="1.7" stroke-linejoin="round" stroke-linecap="round" /><polyline points="641.1,520.9 623.1,535.4 614.9,543.3" fill="none" stroke="#f3d15a" stroke-width="1.7" stroke-linejoin="round" stroke-linecap="round" /><polyline points="641.1,520.9 626.1,513.9 612.6,501.5" fill="none" stroke="#f3d15a" stroke-width="1.7" stroke-linejoin="round" stroke-linecap="round" /><polyline points="641.1,520.9 648.5,510.2 650.4,496.0" fill="none" stroke="#f3d15a" stroke-width="1.7" stroke-linejoin="round" stroke-linecap="round" /><polyline points="641.1,520.9 653.8,522.1 666.6,518.1" fill="none" stroke="#f3d15a" stroke-width="1.7" stroke-linejoin="round" stroke-linecap="round" /><polyline points="462.3,528.6 463.1,538.3 460.3,553.3" fill="none" stroke="#f3d15a" stroke-width="1.7" stroke-linejoin="round" stroke-linecap="round" /><polyline points="520.4,417.7 516.8,437.9 522.3,452.1" fill="none" stroke="#f3d15a" stroke-width="1.7" stroke-linejoin="round" stroke-linecap="round" /><polyline points="610.4,451.7 621.1,444.5 630.8,431.5" fill="none" stroke="#f3d15a" stroke-width="1.7" stroke-linejoin="round" stroke-linecap="round" /><polyline points="610.4,451.7 612.3,460.9 610.9,473.1" fill="none" stroke="#f3d15a" stroke-width="1.7" stroke-linejoin="round" stroke-linecap="round" /><polyline points="761.3,260.6 749.8,264.9 733.0,263.7" fill="none" stroke="#f3d15a" stroke-width="1.7" stroke-linejoin="round" stroke-linecap="round" /><polyline points="761.3,260.6 767.6,239.9 763.5,226.7" fill="none" stroke="#f3d15a" stroke-width="1.7" stroke-linejoin="round" stroke-linecap="round" /><polyline points="761.3,260.6 773.2,248.4 777.5,245.4" fill="none" stroke="#f3d15a" stroke-width="1.7" stroke-linejoin="round" stroke-linecap="round" /><polyline points="586.1,275.3 562.7,277.3 539.4,283.1" fill="none" stroke="#f3d15a" stroke-width="1.7" stroke-linejoin="round" stroke-linecap="round" /><polyline points="768.4,504.9 767.6,500.4 772.8,485.9" fill="none" stroke="#f3d15a" stroke-width="1.7" stroke-linejoin="round" stroke-linecap="round" /><polyline points="614.9,543.3 612.0,550.2 600.5,558.4" fill="none" stroke="#f3d15a" stroke-width="1.7" stroke-linejoin="round" stroke-linecap="round" /><polyline points="861.5,516.7 874.3,509.1 889.4,509.4" fill="none" stroke="#f3d15a" stroke-width="1.7" stroke-linejoin="round" stroke-linecap="round" /><polyline points="861.5,516.7 874.5,531.5 888.2,546.5" fill="none" stroke="#f3d15a" stroke-width="1.7" stroke-linejoin="round" stroke-linecap="round" /><polyline points="725.6,82.4 734.5,74.7 746.1,65.9" fill="none" stroke="#f3d15a" stroke-width="1.7" stroke-linejoin="round" stroke-linecap="round" /><polyline points="970.2,557.3 981.4,546.0 1003.9,541.8" fill="none" stroke="#f3d15a" stroke-width="1.7" stroke-linejoin="round" stroke-linecap="round" /><polyline points="970.2,557.3 970.1,551.2 959.2,540.7" fill="none" stroke="#f3d15a" stroke-width="1.7" stroke-linejoin="round" stroke-linecap="round" /><polyline points="484.1,10.4 484.0,21.4 475.3,28.4" fill="none" stroke="#f3d15a" stroke-width="1.7" stroke-linejoin="round" stroke-linecap="round" /><polyline points="484.1,10.4 492.5,20.6 507.1,19.4" fill="none" stroke="#f3d15a" stroke-width="1.7" stroke-linejoin="round" stroke-linecap="round" /><polyline points="563.0,37.0 553.0,20.6 554.7,2.9" fill="none" stroke="#f3d15a" stroke-width="1.7" stroke-linejoin="round" stroke-linecap="round" /><polyline points="866.4,559.7 871.3,547.7 888.2,546.5" fill="none" stroke="#f3d15a" stroke-width="1.7" stroke-linejoin="round" stroke-linecap="round" /><polyline points="627.1,403.4 621.6,398.7 614.1,386.3" fill="none" stroke="#f3d15a" stroke-width="1.7" stroke-linejoin="round" stroke-linecap="round" /><polyline points="697.2,461.7 684.7,473.5 681.8,474.9" fill="none" stroke="#f3d15a" stroke-width="1.7" stroke-linejoin="round" stroke-linecap="round" /><polyline points="697.2,461.7 687.5,456.1 668.6,450.0" fill="none" stroke="#f3d15a" stroke-width="1.7" stroke-linejoin="round" stroke-linecap="round" /><polyline points="177.4,29.0 183.7,28.1 199.2,21.3" fill="none" stroke="#f3d15a" stroke-width="1.7" stroke-linejoin="round" stroke-linecap="round" /><polyline points="20.0,144.3 13.0,154.6 3.2,161.2" fill="none" stroke="#f3d15a" stroke-width="1.7" stroke-linejoin="round" stroke-linecap="round" /><polyline points="20.0,144.3 26.5,132.1 27.7,118.7" fill="none" stroke="#f3d15a" stroke-width="1.7" stroke-linejoin="round" stroke-linecap="round" /><polyline points="20.0,144.3 18.2,123.9 6.8,109.4" fill="none" stroke="#f3d15a" stroke-width="1.7" stroke-linejoin="round" stroke-linecap="round" /><polyline points="900.0,248.9 890.8,257.7 879.8,265.0" fill="none" stroke="#f3d15a" stroke-width="1.7" stroke-linejoin="round" stroke-linecap="round" /><polyline points="544.0,480.7 553.8,472.1 562.5,475.0" fill="none" stroke="#f3d15a" stroke-width="1.7" stroke-linejoin="round" stroke-linecap="round" /><polyline points="544.0,480.7 530.6,481.0 523.4,473.4" fill="none" stroke="#f3d15a" stroke-width="1.7" stroke-linejoin="round" stroke-linecap="round" /><polyline points="755.8,565.9 732.0,568.1 718.0,570.8" fill="none" stroke="#f3d15a" stroke-width="1.7" stroke-linejoin="round" stroke-linecap="round" /><polyline points="755.8,565.9 751.2,557.3 750.5,542.4" fill="none" stroke="#f3d15a" stroke-width="1.7" stroke-linejoin="round" stroke-linecap="round" /><polyline points="956.7,386.2 944.6,398.1 940.2,420.3" fill="none" stroke="#f3d15a" stroke-width="1.7" stroke-linejoin="round" stroke-linecap="round" /><polyline points="289.3,554.0 306.8,543.4 313.9,538.9" fill="none" stroke="#f3d15a" stroke-width="1.7" stroke-linejoin="round" stroke-linecap="round" /><polyline points="289.3,554.0 308.4,558.0 322.6,563.7" fill="none" stroke="#f3d15a" stroke-width="1.7" stroke-linejoin="round" stroke-linecap="round" /><polyline points="554.7,2.9 537.3,16.9 530.5,30.7" fill="none" stroke="#f3d15a" stroke-width="1.7" stroke-linejoin="round" stroke-linecap="round" /><polyline points="290.3,51.7 305.0,45.2 321.3,34.9" fill="none" stroke="#f3d15a" stroke-width="1.7" stroke-linejoin="round" stroke-linecap="round" /><polyline points="290.3,51.7 289.6,30.8 279.1,21.8" fill="none" stroke="#f3d15a" stroke-width="1.7" stroke-linejoin="round" stroke-linecap="round" /><polyline points="439.1,24.0 455.9,22.6 475.3,28.4" fill="none" stroke="#f3d15a" stroke-width="1.7" stroke-linejoin="round" stroke-linecap="round" /><polyline points="439.1,24.0 426.4,22.3 409.2,8.7" fill="none" stroke="#f3d15a" stroke-width="1.7" stroke-linejoin="round" stroke-linecap="round" /><polyline points="439.1,24.0 433.2,41.1 432.9,54.2" fill="none" stroke="#f3d15a" stroke-width="1.7" stroke-linejoin="round" stroke-linecap="round" /><polyline points="722.6,412.4 735.4,408.1 750.5,399.4" fill="none" stroke="#f3d15a" stroke-width="1.7" stroke-linejoin="round" stroke-linecap="round" /><polyline points="722.6,412.4 735.6,424.5 736.7,426.5" fill="none" stroke="#f3d15a" stroke-width="1.7" stroke-linejoin="round" stroke-linecap="round" /><polyline points="358.4,567.2 372.4,558.7 386.3,550.4" fill="none" stroke="#f3d15a" stroke-width="1.7" stroke-linejoin="round" stroke-linecap="round" /><polyline points="918.0,513.8 904.6,517.3 889.4,509.4" fill="none" stroke="#f3d15a" stroke-width="1.7" stroke-linejoin="round" stroke-linecap="round" /><polyline points="689.4,422.7 691.4,411.0 688.2,392.1" fill="none" stroke="#f3d15a" stroke-width="1.7" stroke-linejoin="round" stroke-linecap="round" /><polyline points="884.3,476.0 894.2,486.9 907.3,492.7" fill="none" stroke="#f3d15a" stroke-width="1.7" stroke-linejoin="round" stroke-linecap="round" /><polyline points="884.3,476.0 881.0,478.8 866.1,483.2" fill="none" stroke="#f3d15a" stroke-width="1.7" stroke-linejoin="round" stroke-linecap="round" /><polyline points="750.5,399.4 751.3,379.8 746.9,369.5" fill="none" stroke="#f3d15a" stroke-width="1.7" stroke-linejoin="round" stroke-linecap="round" /><polyline points="750.5,399.4 745.7,407.0 736.7,426.5" fill="none" stroke="#f3d15a" stroke-width="1.7" stroke-linejoin="round" stroke-linecap="round" /><polyline points="613.8,361.6 615.0,370.6 614.1,386.3" fill="none" stroke="#f3d15a" stroke-width="1.7" stroke-linejoin="round" stroke-linecap="round" /><polyline points="688.2,392.1 683.2,381.2 678.1,370.2" fill="none" stroke="#f3d15a" stroke-width="1.7" stroke-linejoin="round" stroke-linecap="round" /><polyline points="876.7,431.0 872.0,421.7 860.5,412.1" fill="none" stroke="#f3d15a" stroke-width="1.7" stroke-linejoin="round" stroke-linecap="round" /><polyline points="876.7,431.0 885.2,443.5 883.6,455.8" fill="none" stroke="#f3d15a" stroke-width="1.7" stroke-linejoin="round" stroke-linecap="round" /><polyline points="751.4,441.8 740.6,433.6 736.7,426.5" fill="none" stroke="#f3d15a" stroke-width="1.7" stroke-linejoin="round" stroke-linecap="round" /><polyline points="678.1,370.2 678.4,385.4 673.1,407.7" fill="none" stroke="#f3d15a" stroke-width="1.7" stroke-linejoin="round" stroke-linecap="round" /><polyline points="901.4,293.0 889.3,306.7 874.0,315.7" fill="none" stroke="#f3d15a" stroke-width="1.7" stroke-linejoin="round" stroke-linecap="round" /><polyline points="901.4,293.0 906.9,296.2 922.9,302.8" fill="none" stroke="#f3d15a" stroke-width="1.7" stroke-linejoin="round" stroke-linecap="round" /><polyline points="254.3,517.1 241.6,491.7 217.7,459.1" fill="none" stroke="#f3d15a" stroke-width="1.7" stroke-linejoin="round" stroke-linecap="round" /><polyline points="254.3,517.1 274.6,517.9 289.3,519.1" fill="none" stroke="#f3d15a" stroke-width="1.7" stroke-linejoin="round" stroke-linecap="round" /><polyline points="347.4,484.0 367.9,486.0 389.9,490.0" fill="none" stroke="#f3d15a" stroke-width="1.7" stroke-linejoin="round" stroke-linecap="round" /><polyline points="347.4,484.0 354.2,498.3 349.6,520.2" fill="none" stroke="#f3d15a" stroke-width="1.7" stroke-linejoin="round" stroke-linecap="round" /><polyline points="313.9,538.9 313.1,521.8 318.1,516.2" fill="none" stroke="#f3d15a" stroke-width="1.7" stroke-linejoin="round" stroke-linecap="round" /><polyline points="313.9,538.9 316.8,545.4 322.6,563.7" fill="none" stroke="#f3d15a" stroke-width="1.7" stroke-linejoin="round" stroke-linecap="round" /><polyline points="892.3,363.4 904.5,351.1 913.6,346.3" fill="none" stroke="#f3d15a" stroke-width="1.7" stroke-linejoin="round" stroke-linecap="round" /><polyline points="892.3,363.4 891.7,380.2 886.9,394.4" fill="none" stroke="#f3d15a" stroke-width="1.7" stroke-linejoin="round" stroke-linecap="round" /><polyline points="1003.9,541.8 988.7,529.3 977.7,527.8" fill="none" stroke="#f3d15a" stroke-width="1.7" stroke-linejoin="round" stroke-linecap="round" /><polyline points="603.6,414.5 588.9,417.5 583.3,427.3" fill="none" stroke="#f3d15a" stroke-width="1.7" stroke-linejoin="round" stroke-linecap="round" /><polyline points="495.5,433.5 482.8,449.7 479.2,454.1" fill="none" stroke="#f3d15a" stroke-width="1.7" stroke-linejoin="round" stroke-linecap="round" /><polyline points="708.3,164.9 699.9,160.3 691.9,144.0" fill="none" stroke="#f3d15a" stroke-width="1.7" stroke-linejoin="round" stroke-linecap="round" /><polyline points="812.2,562.3 815.4,543.6 821.3,517.6" fill="none" stroke="#f3d15a" stroke-width="1.7" stroke-linejoin="round" stroke-linecap="round" /><polyline points="812.2,562.3 810.7,554.9 814.9,541.4" fill="none" stroke="#f3d15a" stroke-width="1.7" stroke-linejoin="round" stroke-linecap="round" /><polyline points="546.3,126.7 565.3,119.8 591.1,124.7" fill="none" stroke="#f3d15a" stroke-width="1.7" stroke-linejoin="round" stroke-linecap="round" /><polyline points="546.3,126.7 552.9,145.9 569.4,168.2" fill="none" stroke="#f3d15a" stroke-width="1.7" stroke-linejoin="round" stroke-linecap="round" /><polyline points="546.3,126.7 555.6,112.7 564.6,87.1" fill="none" stroke="#f3d15a" stroke-width="1.7" stroke-linejoin="round" stroke-linecap="round" /><polyline points="975.1,431.8 966.4,441.1 957.5,450.5" fill="none" stroke="#f3d15a" stroke-width="1.7" stroke-linejoin="round" stroke-linecap="round" /><polyline points="692.0,497.0 703.3,499.0 713.1,506.1" fill="none" stroke="#f3d15a" stroke-width="1.7" stroke-linejoin="round" stroke-linecap="round" /><polyline points="490.0,549.5 480.6,549.8 460.3,553.3" fill="none" stroke="#f3d15a" stroke-width="1.7" stroke-linejoin="round" stroke-linecap="round" /><polyline points="490.0,549.5 499.3,559.2 504.9,568.2" fill="none" stroke="#f3d15a" stroke-width="1.7" stroke-linejoin="round" stroke-linecap="round" /><polyline points="490.0,549.5 496.7,544.1 507.5,530.4" fill="none" stroke="#f3d15a" stroke-width="1.7" stroke-linejoin="round" stroke-linecap="round" /><polyline points="907.3,492.7 897.4,506.6 889.4,509.4" fill="none" stroke="#f3d15a" stroke-width="1.7" stroke-linejoin="round" stroke-linecap="round" /><polyline points="574.1,392.9 580.6,379.1 583.3,366.5" fill="none" stroke="#f3d15a" stroke-width="1.7" stroke-linejoin="round" stroke-linecap="round" /><polyline points="660.6,6.0 679.5,7.6 699.1,16.4" fill="none" stroke="#f3d15a" stroke-width="1.7" stroke-linejoin="round" stroke-linecap="round" /><polyline points="337.8,12.5 331.3,26.1 321.3,34.9" fill="none" stroke="#f3d15a" stroke-width="1.7" stroke-linejoin="round" stroke-linecap="round" /><polyline points="337.8,12.5 348.4,12.3 366.8,11.8" fill="none" stroke="#f3d15a" stroke-width="1.7" stroke-linejoin="round" stroke-linecap="round" /><polyline points="547.6,388.5 534.4,383.4 518.4,387.1" fill="none" stroke="#f3d15a" stroke-width="1.7" stroke-linejoin="round" stroke-linecap="round" /><polyline points="37.5,194.7 49.4,184.7 54.6,173.0" fill="none" stroke="#f3d15a" stroke-width="1.7" stroke-linejoin="round" stroke-linecap="round" /><polyline points="462.2,393.2 469.6,378.5 470.9,367.1" fill="none" stroke="#f3d15a" stroke-width="1.7" stroke-linejoin="round" stroke-linecap="round" /><polyline points="462.2,393.2 466.4,408.9 480.0,421.9" fill="none" stroke="#f3d15a" stroke-width="1.7" stroke-linejoin="round" stroke-linecap="round" /><polyline points="217.7,459.1 220.9,475.5 229.7,483.5" fill="none" stroke="#f3d15a" stroke-width="1.7" stroke-linejoin="round" stroke-linecap="round" /><polyline points="812.3,290.8 819.0,307.8 817.9,324.2" fill="none" stroke="#f3d15a" stroke-width="1.7" stroke-linejoin="round" stroke-linecap="round" /><polyline points="835.8,169.9 839.1,189.6 849.6,199.7" fill="none" stroke="#f3d15a" stroke-width="1.7" stroke-linejoin="round" stroke-linecap="round" /><polyline points="835.8,169.9 848.3,183.0 872.2,200.0" fill="none" stroke="#f3d15a" stroke-width="1.7" stroke-linejoin="round" stroke-linecap="round" /><polyline points="835.8,169.9 827.9,156.8 830.4,140.8" fill="none" stroke="#f3d15a" stroke-width="1.7" stroke-linejoin="round" stroke-linecap="round" /><polyline points="432.4,122.7 412.0,115.6 399.8,113.6" fill="none" stroke="#f3d15a" stroke-width="1.7" stroke-linejoin="round" stroke-linecap="round" /><polyline points="156.0,29.9 151.3,43.0 141.0,62.7" fill="none" stroke="#f3d15a" stroke-width="1.7" stroke-linejoin="round" stroke-linecap="round" /><polyline points="987.1,508.9 978.8,523.9 977.7,527.8" fill="none" stroke="#f3d15a" stroke-width="1.7" stroke-linejoin="round" stroke-linecap="round" /><polyline points="730.2,218.1 732.7,203.1 729.4,180.1" fill="none" stroke="#f3d15a" stroke-width="1.7" stroke-linejoin="round" stroke-linecap="round" /><polyline points="730.2,218.1 734.0,239.7 733.0,263.7" fill="none" stroke="#f3d15a" stroke-width="1.7" stroke-linejoin="round" stroke-linecap="round" /><polyline points="730.2,218.1 743.4,227.9 763.5,226.7" fill="none" stroke="#f3d15a" stroke-width="1.7" stroke-linejoin="round" stroke-linecap="round" /><polyline points="3.2,161.2 7.9,174.8 12.5,188.5" fill="none" stroke="#f3d15a" stroke-width="1.7" stroke-linejoin="round" stroke-linecap="round" /><polyline points="386.3,550.4 399.0,545.6 415.3,547.7" fill="none" stroke="#f3d15a" stroke-width="1.7" stroke-linejoin="round" stroke-linecap="round" /><polyline points="386.3,550.4 389.3,537.1 386.9,520.0" fill="none" stroke="#f3d15a" stroke-width="1.7" stroke-linejoin="round" stroke-linecap="round" /><polyline points="227.9,205.4 224.2,223.2 227.7,235.7" fill="none" stroke="#f3d15a" stroke-width="1.7" stroke-linejoin="round" stroke-linecap="round" /><polyline points="227.9,205.4 239.6,189.5 243.8,183.3" fill="none" stroke="#f3d15a" stroke-width="1.7" stroke-linejoin="round" stroke-linecap="round" /><polyline points="475.3,28.4 475.9,40.4 473.2,52.8" fill="none" stroke="#f3d15a" stroke-width="1.7" stroke-linejoin="round" stroke-linecap="round" /><polyline points="475.3,28.4 492.1,20.5 507.1,19.4" fill="none" stroke="#f3d15a" stroke-width="1.7" stroke-linejoin="round" stroke-linecap="round" /><polyline points="520.3,214.7 529.6,220.2 550.8,218.5" fill="none" stroke="#f3d15a" stroke-width="1.7" stroke-linejoin="round" stroke-linecap="round" /><polyline points="821.3,517.6 802.1,526.0 778.7,526.9" fill="none" stroke="#f3d15a" stroke-width="1.7" stroke-linejoin="round" stroke-linecap="round" /><polyline points="542.3,534.6 539.6,531.2 532.7,517.0" fill="none" stroke="#f3d15a" stroke-width="1.7" stroke-linejoin="round" stroke-linecap="round" /><polyline points="542.3,534.6 540.2,548.7 540.8,571.3" fill="none" stroke="#f3d15a" stroke-width="1.7" stroke-linejoin="round" stroke-linecap="round" /><polyline points="849.3,349.8 834.4,337.5 817.9,324.2" fill="none" stroke="#f3d15a" stroke-width="1.7" stroke-linejoin="round" stroke-linecap="round" /><polyline points="409.1,498.9 416.2,509.6 426.3,520.8" fill="none" stroke="#f3d15a" stroke-width="1.7" stroke-linejoin="round" stroke-linecap="round" /><polyline points="409.1,498.9 401.2,496.7 389.9,490.0" fill="none" stroke="#f3d15a" stroke-width="1.7" stroke-linejoin="round" stroke-linecap="round" /><polyline points="409.1,498.9 398.6,512.2 386.9,520.0" fill="none" stroke="#f3d15a" stroke-width="1.7" stroke-linejoin="round" stroke-linecap="round" /><polyline points="409.1,498.9 411.5,493.3 405.8,478.9" fill="none" stroke="#f3d15a" stroke-width="1.7" stroke-linejoin="round" stroke-linecap="round" /><polyline points="409.1,498.9 422.3,493.3 441.6,497.7" fill="none" stroke="#f3d15a" stroke-width="1.7" stroke-linejoin="round" stroke-linecap="round" /><polyline points="493.6,149.7 473.2,140.6 462.8,131.7" fill="none" stroke="#f3d15a" stroke-width="1.7" stroke-linejoin="round" stroke-linecap="round" /><polyline points="493.6,149.7 495.3,139.6 501.8,130.3" fill="none" stroke="#f3d15a" stroke-width="1.7" stroke-linejoin="round" stroke-linecap="round" /><polyline points="655.2,357.1 660.4,347.2 658.7,332.1" fill="none" stroke="#f3d15a" stroke-width="1.7" stroke-linejoin="round" stroke-linecap="round" /><polyline points="655.2,357.1 640.5,340.1 632.4,335.0" fill="none" stroke="#f3d15a" stroke-width="1.7" stroke-linejoin="round" stroke-linecap="round" /><polyline points="716.2,117.2 724.5,127.1 720.9,144.0" fill="none" stroke="#f3d15a" stroke-width="1.7" stroke-linejoin="round" stroke-linecap="round" /><polyline points="745.5,106.6 748.4,95.7 753.8,89.2" fill="none" stroke="#f3d15a" stroke-width="1.7" stroke-linejoin="round" stroke-linecap="round" /><polyline points="874.0,315.7 887.7,323.7 890.6,331.4" fill="none" stroke="#f3d15a" stroke-width="1.7" stroke-linejoin="round" stroke-linecap="round" /><polyline points="949.8,574.1 934.4,569.5 919.7,572.7" fill="none" stroke="#f3d15a" stroke-width="1.7" stroke-linejoin="round" stroke-linecap="round" /><polyline points="530.5,30.7 520.7,27.0 507.1,19.4" fill="none" stroke="#f3d15a" stroke-width="1.7" stroke-linejoin="round" stroke-linecap="round" /><polyline points="681.8,474.9 672.6,466.0 668.6,450.0" fill="none" stroke="#f3d15a" stroke-width="1.7" stroke-linejoin="round" stroke-linecap="round" /><polyline points="421.6,70.9 434.2,78.6 445.8,78.9" fill="none" stroke="#f3d15a" stroke-width="1.7" stroke-linejoin="round" stroke-linecap="round" /><polyline points="421.6,70.9 421.5,65.2 432.9,54.2" fill="none" stroke="#f3d15a" stroke-width="1.7" stroke-linejoin="round" stroke-linecap="round" /><polyline points="473.2,52.8 460.8,61.4 453.2,58.8" fill="none" stroke="#f3d15a" stroke-width="1.7" stroke-linejoin="round" stroke-linecap="round" /><polyline points="415.3,547.7 417.5,560.3 422.3,566.7" fill="none" stroke="#f3d15a" stroke-width="1.7" stroke-linejoin="round" stroke-linecap="round" /><polyline points="415.3,547.7 402.1,553.3 398.4,570.0" fill="none" stroke="#f3d15a" stroke-width="1.7" stroke-linejoin="round" stroke-linecap="round" /><polyline points="583.3,366.5 583.1,347.1 573.9,334.9" fill="none" stroke="#f3d15a" stroke-width="1.7" stroke-linejoin="round" stroke-linecap="round" /><polyline points="610.1,334.1 624.4,331.9 632.4,335.0" fill="none" stroke="#f3d15a" stroke-width="1.7" stroke-linejoin="round" stroke-linecap="round" /><polyline points="634.5,207.5 647.7,199.9 662.8,203.4" fill="none" stroke="#f3d15a" stroke-width="1.7" stroke-linejoin="round" stroke-linecap="round" /><polyline points="486.1,101.8 488.2,114.6 501.8,130.3" fill="none" stroke="#f3d15a" stroke-width="1.7" stroke-linejoin="round" stroke-linecap="round" /><polyline points="729.4,180.1 708.0,181.8 687.2,195.0" fill="none" stroke="#f3d15a" stroke-width="1.7" stroke-linejoin="round" stroke-linecap="round" /><polyline points="729.4,180.1 735.8,172.6 748.8,175.1" fill="none" stroke="#f3d15a" stroke-width="1.7" stroke-linejoin="round" stroke-linecap="round" /><polyline points="729.4,180.1 729.6,170.2 737.1,159.9" fill="none" stroke="#f3d15a" stroke-width="1.7" stroke-linejoin="round" stroke-linecap="round" /><polyline points="521.9,77.6 517.4,63.1 505.2,50.5" fill="none" stroke="#f3d15a" stroke-width="1.7" stroke-linejoin="round" stroke-linecap="round" /><polyline points="521.9,77.6 499.1,83.3 482.5,80.9" fill="none" stroke="#f3d15a" stroke-width="1.7" stroke-linejoin="round" stroke-linecap="round" /><polyline points="708.8,323.9 714.3,312.8 717.6,296.4" fill="none" stroke="#f3d15a" stroke-width="1.7" stroke-linejoin="round" stroke-linecap="round" /><polyline points="806.1,143.1 797.8,131.6 789.6,127.5" fill="none" stroke="#f3d15a" stroke-width="1.7" stroke-linejoin="round" stroke-linecap="round" /><polyline points="806.1,143.1 815.6,143.0 830.4,140.8" fill="none" stroke="#f3d15a" stroke-width="1.7" stroke-linejoin="round" stroke-linecap="round" /><polyline points="860.5,412.1 871.0,404.9 886.9,394.4" fill="none" stroke="#f3d15a" stroke-width="1.7" stroke-linejoin="round" stroke-linecap="round" /><polyline points="860.5,412.1 856.5,427.7 845.4,443.4" fill="none" stroke="#f3d15a" stroke-width="1.7" stroke-linejoin="round" stroke-linecap="round" /><polyline points="479.2,454.1 487.7,467.0 491.0,482.8" fill="none" stroke="#f3d15a" stroke-width="1.7" stroke-linejoin="round" stroke-linecap="round" /><polyline points="922.8,401.8 933.3,393.9 936.3,384.7" fill="none" stroke="#f3d15a" stroke-width="1.7" stroke-linejoin="round" stroke-linecap="round" /><polyline points="922.8,401.8 924.9,381.9 918.3,369.8" fill="none" stroke="#f3d15a" stroke-width="1.7" stroke-linejoin="round" stroke-linecap="round" /><polyline points="684.3,44.8 684.1,25.8 679.5,17.8" fill="none" stroke="#f3d15a" stroke-width="1.7" stroke-linejoin="round" stroke-linecap="round" /><polyline points="684.3,44.8 697.2,29.3 699.1,16.4" fill="none" stroke="#f3d15a" stroke-width="1.7" stroke-linejoin="round" stroke-linecap="round" /><polyline points="591.1,124.7 593.7,112.8 597.2,92.6" fill="none" stroke="#f3d15a" stroke-width="1.7" stroke-linejoin="round" stroke-linecap="round" /><polyline points="591.1,124.7 611.9,129.7 624.7,125.5" fill="none" stroke="#f3d15a" stroke-width="1.7" stroke-linejoin="round" stroke-linecap="round" /><polyline points="539.4,283.1 546.9,296.6 547.5,310.8" fill="none" stroke="#f3d15a" stroke-width="1.7" stroke-linejoin="round" stroke-linecap="round" /><polyline points="768.7,287.0 782.1,298.0 787.2,304.9" fill="none" stroke="#f3d15a" stroke-width="1.7" stroke-linejoin="round" stroke-linecap="round" /><polyline points="27.7,118.7 13.1,114.9 6.8,109.4" fill="none" stroke="#f3d15a" stroke-width="1.7" stroke-linejoin="round" stroke-linecap="round" /><polyline points="27.7,118.7 37.9,125.0 52.0,140.8" fill="none" stroke="#f3d15a" stroke-width="1.7" stroke-linejoin="round" stroke-linecap="round" /><polyline points="289.3,519.1 301.6,521.8 318.1,516.2" fill="none" stroke="#f3d15a" stroke-width="1.7" stroke-linejoin="round" stroke-linecap="round" /><polyline points="550.8,218.5 557.3,192.1 569.4,168.2" fill="none" stroke="#f3d15a" stroke-width="1.7" stroke-linejoin="round" stroke-linecap="round" /><polyline points="550.8,218.5 523.2,225.6 497.2,235.5" fill="none" stroke="#f3d15a" stroke-width="1.7" stroke-linejoin="round" stroke-linecap="round" /><polyline points="827.5,372.3 814.8,366.1 793.5,363.0" fill="none" stroke="#f3d15a" stroke-width="1.7" stroke-linejoin="round" stroke-linecap="round" /><polyline points="772.8,485.9 771.0,476.0 758.2,472.6" fill="none" stroke="#f3d15a" stroke-width="1.7" stroke-linejoin="round" stroke-linecap="round" /><polyline points="772.8,485.9 761.5,487.8 748.3,489.6" fill="none" stroke="#f3d15a" stroke-width="1.7" stroke-linejoin="round" stroke-linecap="round" /><polyline points="422.3,566.7 407.8,574.0 398.4,570.0" fill="none" stroke="#f3d15a" stroke-width="1.7" stroke-linejoin="round" stroke-linecap="round" /><polyline points="663.5,233.1 669.0,222.9 662.8,203.4" fill="none" stroke="#f3d15a" stroke-width="1.7" stroke-linejoin="round" stroke-linecap="round" /><polyline points="597.2,92.6 597.0,77.4 602.4,64.7" fill="none" stroke="#f3d15a" stroke-width="1.7" stroke-linejoin="round" stroke-linecap="round" /><polyline points="814.9,541.4 804.5,556.5 786.7,570.1" fill="none" stroke="#f3d15a" stroke-width="1.7" stroke-linejoin="round" stroke-linecap="round" /><polyline points="853.5,466.3 864.9,473.2 866.1,483.2" fill="none" stroke="#f3d15a" stroke-width="1.7" stroke-linejoin="round" stroke-linecap="round" /><polyline points="389.9,490.0 401.0,482.2 405.8,478.9" fill="none" stroke="#f3d15a" stroke-width="1.7" stroke-linejoin="round" stroke-linecap="round" /><polyline points="470.9,367.1 478.0,379.1 482.1,383.7" fill="none" stroke="#f3d15a" stroke-width="1.7" stroke-linejoin="round" stroke-linecap="round" /><polyline points="470.9,367.1 490.6,372.7 505.9,368.9" fill="none" stroke="#f3d15a" stroke-width="1.7" stroke-linejoin="round" stroke-linecap="round" /><polyline points="470.9,367.1 481.9,352.1 501.6,337.3" fill="none" stroke="#f3d15a" stroke-width="1.7" stroke-linejoin="round" stroke-linecap="round" /><polyline points="720.9,144.0 734.4,157.9 737.1,159.9" fill="none" stroke="#f3d15a" stroke-width="1.7" stroke-linejoin="round" stroke-linecap="round" /><polyline points="668.6,450.0 660.2,461.6 644.7,470.0" fill="none" stroke="#f3d15a" stroke-width="1.7" stroke-linejoin="round" stroke-linecap="round" /><polyline points="734.6,514.9 748.2,524.8 750.5,542.4" fill="none" stroke="#f3d15a" stroke-width="1.7" stroke-linejoin="round" stroke-linecap="round" /><polyline points="734.6,514.9 740.4,507.7 748.3,489.6" fill="none" stroke="#f3d15a" stroke-width="1.7" stroke-linejoin="round" stroke-linecap="round" /><polyline points="532.7,517.0 516.5,521.7 507.5,530.4" fill="none" stroke="#f3d15a" stroke-width="1.7" stroke-linejoin="round" stroke-linecap="round" /><polyline points="687.2,195.0 670.1,193.9 662.8,203.4" fill="none" stroke="#f3d15a" stroke-width="1.7" stroke-linejoin="round" stroke-linecap="round" /><polyline points="54.6,173.0 39.6,194.6 36.2,218.9" fill="none" stroke="#f3d15a" stroke-width="1.7" stroke-linejoin="round" stroke-linecap="round" /><polyline points="733.0,263.7 723.8,280.0 717.6,296.4" fill="none" stroke="#f3d15a" stroke-width="1.7" stroke-linejoin="round" stroke-linecap="round" /><polyline points="940.2,420.3 939.0,408.4 936.3,384.7" fill="none" stroke="#f3d15a" stroke-width="1.7" stroke-linejoin="round" stroke-linecap="round" /><polyline points="913.6,346.3 921.3,352.2 918.3,369.8" fill="none" stroke="#f3d15a" stroke-width="1.7" stroke-linejoin="round" stroke-linecap="round" /><polyline points="301.0,490.3 306.4,501.8 318.1,516.2" fill="none" stroke="#f3d15a" stroke-width="1.7" stroke-linejoin="round" stroke-linecap="round" /><polyline points="825.5,456.0 838.8,455.1 845.4,443.4" fill="none" stroke="#f3d15a" stroke-width="1.7" stroke-linejoin="round" stroke-linecap="round" /><polyline points="505.2,50.5 506.3,33.6 507.1,19.4" fill="none" stroke="#f3d15a" stroke-width="1.7" stroke-linejoin="round" stroke-linecap="round" /><polyline points="612.6,501.5 615.0,492.5 610.9,473.1" fill="none" stroke="#f3d15a" stroke-width="1.7" stroke-linejoin="round" stroke-linecap="round" /><polyline points="432.0,258.2 460.6,251.0 497.2,235.5" fill="none" stroke="#f3d15a" stroke-width="1.7" stroke-linejoin="round" stroke-linecap="round" /><polyline points="994.1,482.2 982.7,494.3 970.1,496.1" fill="none" stroke="#f3d15a" stroke-width="1.7" stroke-linejoin="round" stroke-linecap="round" /><polyline points="994.1,482.2 999.2,487.8 1008.3,501.6" fill="none" stroke="#f3d15a" stroke-width="1.7" stroke-linejoin="round" stroke-linecap="round" /><polyline points="711.6,69.3 726.5,62.8 746.1,65.9" fill="none" stroke="#f3d15a" stroke-width="1.7" stroke-linejoin="round" stroke-linecap="round" /><polyline points="816.9,437.6 827.0,435.8 845.4,443.4" fill="none" stroke="#f3d15a" stroke-width="1.7" stroke-linejoin="round" stroke-linecap="round" /><polyline points="816.9,437.6 810.0,422.0 794.1,414.4" fill="none" stroke="#f3d15a" stroke-width="1.7" stroke-linejoin="round" stroke-linecap="round" /><polyline points="643.8,286.8 655.4,275.1 658.0,265.6" fill="none" stroke="#f3d15a" stroke-width="1.7" stroke-linejoin="round" stroke-linecap="round" /><polyline points="643.8,286.8 644.8,297.2 657.0,311.5" fill="none" stroke="#f3d15a" stroke-width="1.7" stroke-linejoin="round" stroke-linecap="round" /><polyline points="743.4,302.5 747.7,314.2 751.2,321.1" fill="none" stroke="#f3d15a" stroke-width="1.7" stroke-linejoin="round" stroke-linecap="round" /><polyline points="743.4,302.5 729.2,297.0 717.6,296.4" fill="none" stroke="#f3d15a" stroke-width="1.7" stroke-linejoin="round" stroke-linecap="round" /><polyline points="582.6,470.0 575.4,469.1 562.5,475.0" fill="none" stroke="#f3d15a" stroke-width="1.7" stroke-linejoin="round" stroke-linecap="round" /><polyline points="758.2,472.6 773.9,464.5 780.9,462.2" fill="none" stroke="#f3d15a" stroke-width="1.7" stroke-linejoin="round" stroke-linecap="round" /><polyline points="794.0,217.1 783.4,220.4 763.5,226.7" fill="none" stroke="#f3d15a" stroke-width="1.7" stroke-linejoin="round" stroke-linecap="round" /><polyline points="596.3,155.8 582.6,167.5 569.4,168.2" fill="none" stroke="#f3d15a" stroke-width="1.7" stroke-linejoin="round" stroke-linecap="round" /><polyline points="768.5,143.1 757.6,165.0 748.8,175.1" fill="none" stroke="#f3d15a" stroke-width="1.7" stroke-linejoin="round" stroke-linecap="round" /><polyline points="768.5,143.1 757.0,155.3 737.1,159.9" fill="none" stroke="#f3d15a" stroke-width="1.7" stroke-linejoin="round" stroke-linecap="round" /><polyline points="938.7,349.9 928.1,358.8 918.3,369.8" fill="none" stroke="#f3d15a" stroke-width="1.7" stroke-linejoin="round" stroke-linecap="round" /><polyline points="763.5,226.7 774.1,238.8 777.5,245.4" fill="none" stroke="#f3d15a" stroke-width="1.7" stroke-linejoin="round" stroke-linecap="round" /><polyline points="600.5,558.4 625.0,560.2 637.9,568.8" fill="none" stroke="#f3d15a" stroke-width="1.7" stroke-linejoin="round" stroke-linecap="round" /><polyline points="405.8,478.9 429.1,489.9 441.6,497.7" fill="none" stroke="#f3d15a" stroke-width="1.7" stroke-linejoin="round" stroke-linecap="round" /><polyline points="785.4,436.0 782.1,447.3 780.9,462.2" fill="none" stroke="#f3d15a" stroke-width="1.7" stroke-linejoin="round" stroke-linecap="round" /><polyline points="409.2,8.7 388.5,9.4 366.8,11.8" fill="none" stroke="#f3d15a" stroke-width="1.7" stroke-linejoin="round" stroke-linecap="round" /><polyline points="504.9,568.2 504.0,549.2 507.5,530.4" fill="none" stroke="#f3d15a" stroke-width="1.7" stroke-linejoin="round" stroke-linecap="round" /><polyline points="504.9,568.2 528.6,570.5 540.8,571.3" fill="none" stroke="#f3d15a" stroke-width="1.7" stroke-linejoin="round" stroke-linecap="round" /><polyline points="959.2,540.7 963.1,530.1 977.7,527.8" fill="none" stroke="#f3d15a" stroke-width="1.7" stroke-linejoin="round" stroke-linecap="round" /><polyline points="748.8,175.1 746.3,172.2 737.1,159.9" fill="none" stroke="#f3d15a" stroke-width="1.7" stroke-linejoin="round" stroke-linecap="round" /><polyline points="603.3,181.8 586.7,169.5 569.4,168.2" fill="none" stroke="#f3d15a" stroke-width="1.7" stroke-linejoin="round" stroke-linecap="round" /><polyline points="505.9,368.9 521.2,370.9 532.5,368.3" fill="none" stroke="#f3d15a" stroke-width="1.7" stroke-linejoin="round" stroke-linecap="round" /><polyline points="505.9,368.9 508.8,356.9 501.6,337.3" fill="none" stroke="#f3d15a" stroke-width="1.7" stroke-linejoin="round" stroke-linecap="round" /><polyline points="655.3,103.8 648.5,116.4 647.0,130.3" fill="none" stroke="#f3d15a" stroke-width="1.7" stroke-linejoin="round" stroke-linecap="round" /><polyline points="532.7,497.7 541.5,507.9 551.5,513.0" fill="none" stroke="#f3d15a" stroke-width="1.7" stroke-linejoin="round" stroke-linecap="round" /><polyline points="751.2,321.1 736.6,330.3 724.5,338.1" fill="none" stroke="#f3d15a" stroke-width="1.7" stroke-linejoin="round" stroke-linecap="round" /><polyline points="851.3,227.2 847.7,231.4 840.7,245.3" fill="none" stroke="#f3d15a" stroke-width="1.7" stroke-linejoin="round" stroke-linecap="round" /><polyline points="936.3,384.7 924.0,381.4 918.3,369.8" fill="none" stroke="#f3d15a" stroke-width="1.7" stroke-linejoin="round" stroke-linecap="round" /><polyline points="532.5,368.3 528.1,375.4 518.4,387.1" fill="none" stroke="#f3d15a" stroke-width="1.7" stroke-linejoin="round" stroke-linecap="round" /><polyline points="227.7,235.7 239.5,215.3 243.8,183.3" fill="none" stroke="#f3d15a" stroke-width="1.7" stroke-linejoin="round" stroke-linecap="round" /><polyline points="132.6,0.0 139.1,30.0 147.6,34.2 171.1,40.6 203.2,25.7 228.9,19.3 239.6,30.0 256.7,51.3 288.8,42.8 310.2,25.7 325.2,6.4 329.4,0.0" fill="none" stroke="#ffffff" stroke-width="4.2" stroke-linejoin="round" stroke-linecap="round" /><polyline points="406.5,0.0 427.9,6.4 470.6,8.6 479.2,36.4" fill="none" stroke="#ffffff" stroke-width="4.2" stroke-linejoin="round" stroke-linecap="round" /><polyline points="489.9,34.2 550.0,12.8 600.0,10.0" fill="none" stroke="#ffffff" stroke-width="4.2" stroke-linejoin="round" stroke-linecap="round" /><polyline points="472.8,40.6 438.6,59.9 389.3,85.6 378.7,102.7 376.5,128.4 380.8,154.0 395.8,175.4 406.5,188.3 408.6,213.9 415.0,224.6 432.1,218.2 455.7,218.2 470.6,216.1 492.0,226.8 504.9,222.5" fill="none" stroke="#ffffff" stroke-width="4.2" stroke-linejoin="round" stroke-linecap="round" /><polyline points="378.7,104.8 402.2,102.7 427.9,100.5 445.0,117.7 481.3,111.2 513.4,104.8 550.0,107.0 600.0,118.0 650.0,112.0 700.0,120.0" fill="none" stroke="#ffffff" stroke-width="4.2" stroke-linejoin="round" stroke-linecap="round" /><polyline points="472.8,40.6 427.9,74.9 402.2,100.5" fill="none" stroke="#ffffff" stroke-width="4.2" stroke-linejoin="round" stroke-linecap="round" /><polyline points="447.1,117.7 468.5,164.7 477.1,179.7 496.3,184.0 509.1,196.8 509.1,213.9 496.3,226.8" fill="none" stroke="#ffffff" stroke-width="4.2" stroke-linejoin="round" stroke-linecap="round" /><polyline points="199.0,213.9 224.6,199.0 241.7,199.0 248.2,203.2 235.3,224.6 224.6,239.6 213.9,252.4" fill="none" stroke="#ffffff" stroke-width="4.2" stroke-linejoin="round" stroke-linecap="round" /><polyline points="201.1,213.9 200.0,246.0" fill="none" stroke="#ffffff" stroke-width="4.2" stroke-linejoin="round" stroke-linecap="round" /><polyline points="0.0,119.8 27.8,121.9 29.9,104.8 38.5,102.7" fill="none" stroke="#ffffff" stroke-width="4.2" stroke-linejoin="round" stroke-linecap="round" /><polyline points="0.0,149.8 10.7,171.1 23.5,196.8" fill="none" stroke="#ffffff" stroke-width="4.2" stroke-linejoin="round" stroke-linecap="round" /><polyline points="27.8,121.9 19.3,134.8" fill="none" stroke="#ffffff" stroke-width="4.2" stroke-linejoin="round" stroke-linecap="round" /><polyline points="595.1,289.2 629.4,296.1 663.8,290.6 705.0,286.5 732.5,287.9 773.7,296.1" fill="none" stroke="#ffffff" stroke-width="4.2" stroke-linejoin="round" stroke-linecap="round" /><polyline points="574.5,257.6 588.2,282.4 602.0,293.4 622.6,298.8 636.3,315.3 650.0,345.0" fill="none" stroke="#ffffff" stroke-width="4.2" stroke-linejoin="round" stroke-linecap="round" /><polyline points="742.1,145.0 743.5,186.2 739.3,220.5 711.9,248.0 705.0,282.4 711.9,345.0" fill="none" stroke="#ffffff" stroke-width="4.2" stroke-linejoin="round" stroke-linecap="round" /><polyline points="739.3,220.5 759.9,220.5 797.1,219.2 850.0,221.6 891.2,213.4" fill="none" stroke="#ffffff" stroke-width="4.2" stroke-linejoin="round" stroke-linecap="round" /><polyline points="553.9,165.6 574.5,158.7 581.4,145.0" fill="none" stroke="#ffffff" stroke-width="4.2" stroke-linejoin="round" stroke-linecap="round" /><polyline points="650.0,145.0 685.8,164.2" fill="none" stroke="#ffffff" stroke-width="4.2" stroke-linejoin="round" stroke-linecap="round" /><polyline points="444.0,216.4 471.5,215.1 485.2,227.4 505.8,213.7 526.4,197.2" fill="none" stroke="#ffffff" stroke-width="4.2" stroke-linejoin="round" stroke-linecap="round" /><polyline points="482.5,279.6 501.7,268.6 526.4,259.0" fill="none" stroke="#ffffff" stroke-width="4.2" stroke-linejoin="round" stroke-linecap="round" /><polyline points="691.3,316.7 718.7,289.2 739.3,282.4" fill="none" stroke="#ffffff" stroke-width="4.2" stroke-linejoin="round" stroke-linecap="round" /><polyline points="739.3,327.7 773.7,316.7 794.0,309.8" fill="none" stroke="#ffffff" stroke-width="4.2" stroke-linejoin="round" stroke-linecap="round" /><polyline points="644.0,11.5 685.2,19.7 732.6,15.6" fill="none" stroke="#ffffff" stroke-width="4.2" stroke-linejoin="round" stroke-linecap="round" /><polyline points="732.6,15.6 736.7,46.5 747.0,87.7 751.1,104.2 767.6,135.1 796.5,139.2 858.3,151.6 870.6,176.3 891.2,203.1 903.6,211.3 907.7,231.9 924.2,262.8 926.2,295.0" fill="none" stroke="#ffffff" stroke-width="4.2" stroke-linejoin="round" stroke-linecap="round" /><polyline points="644.0,143.3 685.2,159.8 747.0,139.2 767.6,135.1" fill="none" stroke="#ffffff" stroke-width="4.2" stroke-linejoin="round" stroke-linecap="round" /><polyline points="742.9,139.2 740.8,201.0 736.7,242.2 726.4,295.0" fill="none" stroke="#ffffff" stroke-width="4.2" stroke-linejoin="round" stroke-linecap="round" /><polyline points="767.6,143.3 747.0,176.3" fill="none" stroke="#ffffff" stroke-width="4.2" stroke-linejoin="round" stroke-linecap="round" /><polyline points="757.3,295.0 808.8,262.8 850.0,242.2 891.2,227.8" fill="none" stroke="#ffffff" stroke-width="4.2" stroke-linejoin="round" stroke-linecap="round" /><polyline points="644.0,46.5 685.2,56.8 712.0,87.7" fill="none" stroke="#ffffff" stroke-width="4.2" stroke-linejoin="round" stroke-linecap="round" /><polyline points="790.6,275.0 788.5,337.8 773.9,379.7 769.7,421.6 786.4,463.5 790.6,505.4 786.4,576.0" fill="none" stroke="#ffffff" stroke-width="4.2" stroke-linejoin="round" stroke-linecap="round" /><polyline points="870.2,413.2 870.2,492.8 863.9,576.0" fill="none" stroke="#ffffff" stroke-width="4.2" stroke-linejoin="round" stroke-linecap="round" /><polyline points="790.6,300.1 853.5,316.9 887.0,337.8 912.1,358.8 920.5,360.9" fill="none" stroke="#ffffff" stroke-width="4.2" stroke-linejoin="round" stroke-linecap="round" /><polyline points="916.3,275.0 912.1,337.8 922.6,390.2 947.7,411.2 954.0,453.0 979.1,484.5 1016.8,524.3" fill="none" stroke="#ffffff" stroke-width="4.2" stroke-linejoin="round" stroke-linecap="round" /><polyline points="832.5,453.0 901.6,453.0 895.4,484.5 874.4,497.0 843.0,536.8 822.0,576.0" fill="none" stroke="#ffffff" stroke-width="4.2" stroke-linejoin="round" stroke-linecap="round" /><polyline points="901.6,453.0 903.7,432.1 926.8,415.3" fill="none" stroke="#ffffff" stroke-width="4.2" stroke-linejoin="round" stroke-linecap="round" /><polyline points="644.0,459.3 727.8,448.9 790.6,446.8 832.5,453.0" fill="none" stroke="#ffffff" stroke-width="4.2" stroke-linejoin="round" stroke-linecap="round" /><polyline points="874.4,497.0 937.2,505.4 979.1,511.7 1016.8,524.3" fill="none" stroke="#ffffff" stroke-width="4.2" stroke-linejoin="round" stroke-linecap="round" /><polyline points="769.7,547.3 826.2,536.8 874.4,497.0" fill="none" stroke="#ffffff" stroke-width="4.2" stroke-linejoin="round" stroke-linecap="round" /><polyline points="979.1,511.7 958.2,576.0" fill="none" stroke="#ffffff" stroke-width="4.2" stroke-linejoin="round" stroke-linecap="round" /><polyline points="644.0,488.7 717.3,484.5 769.7,497.0 826.2,536.8" fill="none" stroke="#ffffff" stroke-width="4.2" stroke-linejoin="round" stroke-linecap="round" /><polyline points="225.0,493.2 284.1,502.2 327.7,485.5 394.5,493.2 430.4,488.1 456.1,500.9 486.9,511.2" fill="none" stroke="#ffffff" stroke-width="4.2" stroke-linejoin="round" stroke-linecap="round" /><polyline points="284.1,502.2 263.5,531.7 237.9,576.0" fill="none" stroke="#ffffff" stroke-width="4.2" stroke-linejoin="round" stroke-linecap="round" /><polyline points="289.2,506.0 302.0,531.7 327.7,539.4 366.2,557.4 404.7,576.0" fill="none" stroke="#ffffff" stroke-width="4.2" stroke-linejoin="round" stroke-linecap="round" /><polyline points="335.4,477.8 335.4,506.0 340.6,576.0" fill="none" stroke="#ffffff" stroke-width="4.2" stroke-linejoin="round" stroke-linecap="round" /><polyline points="486.9,511.2 507.4,531.7 533.1,576.0" fill="none" stroke="#ffffff" stroke-width="4.2" stroke-linejoin="round" stroke-linecap="round" /><polyline points="486.9,511.2 520.3,500.9 584.4,493.2 654.0,475.2" fill="none" stroke="#ffffff" stroke-width="4.2" stroke-linejoin="round" stroke-linecap="round" /><polyline points="456.1,390.5 463.8,429.0 468.9,454.7" fill="none" stroke="#ffffff" stroke-width="4.2" stroke-linejoin="round" stroke-linecap="round" /><polyline points="615.2,275.0 610.1,339.2 622.9,377.7 654.0,390.5" fill="none" stroke="#ffffff" stroke-width="4.2" stroke-linejoin="round" stroke-linecap="round" /><polyline points="520.0,360.0 560.0,380.0 600.0,372.0 640.0,390.0" fill="none" stroke="#ffffff" stroke-width="4.2" stroke-linejoin="round" stroke-linecap="round" /><polyline points="600.0,480.0 640.0,520.0 700.0,540.0 760.0,576.0" fill="none" stroke="#ffffff" stroke-width="4.2" stroke-linejoin="round" stroke-linecap="round" /><polyline points="560.0,576.0 600.0,540.0 660.0,500.0" fill="none" stroke="#ffffff" stroke-width="4.2" stroke-linejoin="round" stroke-linecap="round" /><polyline points="420.0,576.0 470.0,540.0 520.0,520.0" fill="none" stroke="#ffffff" stroke-width="4.2" stroke-linejoin="round" stroke-linecap="round" /><polyline points="680.0,400.0 720.0,420.0 760.0,400.0" fill="none" stroke="#ffffff" stroke-width="4.2" stroke-linejoin="round" stroke-linecap="round" /><polyline points="540.0,420.0 560.0,470.0 600.0,500.0" fill="none" stroke="#ffffff" stroke-width="4.2" stroke-linejoin="round" stroke-linecap="round" /><polyline points="1.0,150.0 30.0,140.0 60.0,150.0" fill="none" stroke="#ffffff" stroke-width="4.2" stroke-linejoin="round" stroke-linecap="round" /><polyline points="950.0,576.0 1000.0,560.0" fill="none" stroke="#ffffff" stroke-width="4.2" stroke-linejoin="round" stroke-linecap="round" /><polyline points="132.6,0.0 139.1,30.0 147.6,34.2 171.1,40.6 203.2,25.7 228.9,19.3 239.6,30.0 256.7,51.3 288.8,42.8 310.2,25.7 325.2,6.4 329.4,0.0" fill="none" stroke="#f2cd3c" stroke-width="2.2" stroke-linejoin="round" stroke-linecap="round" /><polyline points="406.5,0.0 427.9,6.4 470.6,8.6 479.2,36.4" fill="none" stroke="#f2cd3c" stroke-width="2.2" stroke-linejoin="round" stroke-linecap="round" /><polyline points="489.9,34.2 550.0,12.8 600.0,10.0" fill="none" stroke="#f2cd3c" stroke-width="2.2" stroke-linejoin="round" stroke-linecap="round" /><polyline points="472.8,40.6 438.6,59.9 389.3,85.6 378.7,102.7 376.5,128.4 380.8,154.0 395.8,175.4 406.5,188.3 408.6,213.9 415.0,224.6 432.1,218.2 455.7,218.2 470.6,216.1 492.0,226.8 504.9,222.5" fill="none" stroke="#f2cd3c" stroke-width="2.2" stroke-linejoin="round" stroke-linecap="round" /><polyline points="378.7,104.8 402.2,102.7 427.9,100.5 445.0,117.7 481.3,111.2 513.4,104.8 550.0,107.0 600.0,118.0 650.0,112.0 700.0,120.0" fill="none" stroke="#f2cd3c" stroke-width="2.2" stroke-linejoin="round" stroke-linecap="round" /><polyline points="472.8,40.6 427.9,74.9 402.2,100.5" fill="none" stroke="#f2cd3c" stroke-width="2.2" stroke-linejoin="round" stroke-linecap="round" /><polyline points="447.1,117.7 468.5,164.7 477.1,179.7 496.3,184.0 509.1,196.8 509.1,213.9 496.3,226.8" fill="none" stroke="#f2cd3c" stroke-width="2.2" stroke-linejoin="round" stroke-linecap="round" /><polyline points="199.0,213.9 224.6,199.0 241.7,199.0 248.2,203.2 235.3,224.6 224.6,239.6 213.9,252.4" fill="none" stroke="#f2cd3c" stroke-width="2.2" stroke-linejoin="round" stroke-linecap="round" /><polyline points="201.1,213.9 200.0,246.0" fill="none" stroke="#f2cd3c" stroke-width="2.2" stroke-linejoin="round" stroke-linecap="round" /><polyline points="0.0,119.8 27.8,121.9 29.9,104.8 38.5,102.7" fill="none" stroke="#f2cd3c" stroke-width="2.2" stroke-linejoin="round" stroke-linecap="round" /><polyline points="0.0,149.8 10.7,171.1 23.5,196.8" fill="none" stroke="#f2cd3c" stroke-width="2.2" stroke-linejoin="round" stroke-linecap="round" /><polyline points="27.8,121.9 19.3,134.8" fill="none" stroke="#f2cd3c" stroke-width="2.2" stroke-linejoin="round" stroke-linecap="round" /><polyline points="595.1,289.2 629.4,296.1 663.8,290.6 705.0,286.5 732.5,287.9 773.7,296.1" fill="none" stroke="#f2cd3c" stroke-width="2.2" stroke-linejoin="round" stroke-linecap="round" /><polyline points="574.5,257.6 588.2,282.4 602.0,293.4 622.6,298.8 636.3,315.3 650.0,345.0" fill="none" stroke="#f2cd3c" stroke-width="2.2" stroke-linejoin="round" stroke-linecap="round" /><polyline points="742.1,145.0 743.5,186.2 739.3,220.5 711.9,248.0 705.0,282.4 711.9,345.0" fill="none" stroke="#f2cd3c" stroke-width="2.2" stroke-linejoin="round" stroke-linecap="round" /><polyline points="739.3,220.5 759.9,220.5 797.1,219.2 850.0,221.6 891.2,213.4" fill="none" stroke="#f2cd3c" stroke-width="2.2" stroke-linejoin="round" stroke-linecap="round" /><polyline points="553.9,165.6 574.5,158.7 581.4,145.0" fill="none" stroke="#f2cd3c" stroke-width="2.2" stroke-linejoin="round" stroke-linecap="round" /><polyline points="650.0,145.0 685.8,164.2" fill="none" stroke="#f2cd3c" stroke-width="2.2" stroke-linejoin="round" stroke-linecap="round" /><polyline points="444.0,216.4 471.5,215.1 485.2,227.4 505.8,213.7 526.4,197.2" fill="none" stroke="#f2cd3c" stroke-width="2.2" stroke-linejoin="round" stroke-linecap="round" /><polyline points="482.5,279.6 501.7,268.6 526.4,259.0" fill="none" stroke="#f2cd3c" stroke-width="2.2" stroke-linejoin="round" stroke-linecap="round" /><polyline points="691.3,316.7 718.7,289.2 739.3,282.4" fill="none" stroke="#f2cd3c" stroke-width="2.2" stroke-linejoin="round" stroke-linecap="round" /><polyline points="739.3,327.7 773.7,316.7 794.0,309.8" fill="none" stroke="#f2cd3c" stroke-width="2.2" stroke-linejoin="round" stroke-linecap="round" /><polyline points="644.0,11.5 685.2,19.7 732.6,15.6" fill="none" stroke="#f2cd3c" stroke-width="2.2" stroke-linejoin="round" stroke-linecap="round" /><polyline points="732.6,15.6 736.7,46.5 747.0,87.7 751.1,104.2 767.6,135.1 796.5,139.2 858.3,151.6 870.6,176.3 891.2,203.1 903.6,211.3 907.7,231.9 924.2,262.8 926.2,295.0" fill="none" stroke="#f2cd3c" stroke-width="2.2" stroke-linejoin="round" stroke-linecap="round" /><polyline points="644.0,143.3 685.2,159.8 747.0,139.2 767.6,135.1" fill="none" stroke="#f2cd3c" stroke-width="2.2" stroke-linejoin="round" stroke-linecap="round" /><polyline points="742.9,139.2 740.8,201.0 736.7,242.2 726.4,295.0" fill="none" stroke="#f2cd3c" stroke-width="2.2" stroke-linejoin="round" stroke-linecap="round" /><polyline points="767.6,143.3 747.0,176.3" fill="none" stroke="#f2cd3c" stroke-width="2.2" stroke-linejoin="round" stroke-linecap="round" /><polyline points="757.3,295.0 808.8,262.8 850.0,242.2 891.2,227.8" fill="none" stroke="#f2cd3c" stroke-width="2.2" stroke-linejoin="round" stroke-linecap="round" /><polyline points="644.0,46.5 685.2,56.8 712.0,87.7" fill="none" stroke="#f2cd3c" stroke-width="2.2" stroke-linejoin="round" stroke-linecap="round" /><polyline points="790.6,275.0 788.5,337.8 773.9,379.7 769.7,421.6 786.4,463.5 790.6,505.4 786.4,576.0" fill="none" stroke="#f2cd3c" stroke-width="2.2" stroke-linejoin="round" stroke-linecap="round" /><polyline points="870.2,413.2 870.2,492.8 863.9,576.0" fill="none" stroke="#f2cd3c" stroke-width="2.2" stroke-linejoin="round" stroke-linecap="round" /><polyline points="790.6,300.1 853.5,316.9 887.0,337.8 912.1,358.8 920.5,360.9" fill="none" stroke="#f2cd3c" stroke-width="2.2" stroke-linejoin="round" stroke-linecap="round" /><polyline points="916.3,275.0 912.1,337.8 922.6,390.2 947.7,411.2 954.0,453.0 979.1,484.5 1016.8,524.3" fill="none" stroke="#f2cd3c" stroke-width="2.2" stroke-linejoin="round" stroke-linecap="round" /><polyline points="832.5,453.0 901.6,453.0 895.4,484.5 874.4,497.0 843.0,536.8 822.0,576.0" fill="none" stroke="#f2cd3c" stroke-width="2.2" stroke-linejoin="round" stroke-linecap="round" /><polyline points="901.6,453.0 903.7,432.1 926.8,415.3" fill="none" stroke="#f2cd3c" stroke-width="2.2" stroke-linejoin="round" stroke-linecap="round" /><polyline points="644.0,459.3 727.8,448.9 790.6,446.8 832.5,453.0" fill="none" stroke="#f2cd3c" stroke-width="2.2" stroke-linejoin="round" stroke-linecap="round" /><polyline points="874.4,497.0 937.2,505.4 979.1,511.7 1016.8,524.3" fill="none" stroke="#f2cd3c" stroke-width="2.2" stroke-linejoin="round" stroke-linecap="round" /><polyline points="769.7,547.3 826.2,536.8 874.4,497.0" fill="none" stroke="#f2cd3c" stroke-width="2.2" stroke-linejoin="round" stroke-linecap="round" /><polyline points="979.1,511.7 958.2,576.0" fill="none" stroke="#f2cd3c" stroke-width="2.2" stroke-linejoin="round" stroke-linecap="round" /><polyline points="644.0,488.7 717.3,484.5 769.7,497.0 826.2,536.8" fill="none" stroke="#f2cd3c" stroke-width="2.2" stroke-linejoin="round" stroke-linecap="round" /><polyline points="225.0,493.2 284.1,502.2 327.7,485.5 394.5,493.2 430.4,488.1 456.1,500.9 486.9,511.2" fill="none" stroke="#f2cd3c" stroke-width="2.2" stroke-linejoin="round" stroke-linecap="round" /><polyline points="284.1,502.2 263.5,531.7 237.9,576.0" fill="none" stroke="#f2cd3c" stroke-width="2.2" stroke-linejoin="round" stroke-linecap="round" /><polyline points="289.2,506.0 302.0,531.7 327.7,539.4 366.2,557.4 404.7,576.0" fill="none" stroke="#f2cd3c" stroke-width="2.2" stroke-linejoin="round" stroke-linecap="round" /><polyline points="335.4,477.8 335.4,506.0 340.6,576.0" fill="none" stroke="#f2cd3c" stroke-width="2.2" stroke-linejoin="round" stroke-linecap="round" /><polyline points="486.9,511.2 507.4,531.7 533.1,576.0" fill="none" stroke="#f2cd3c" stroke-width="2.2" stroke-linejoin="round" stroke-linecap="round" /><polyline points="486.9,511.2 520.3,500.9 584.4,493.2 654.0,475.2" fill="none" stroke="#f2cd3c" stroke-width="2.2" stroke-linejoin="round" stroke-linecap="round" /><polyline points="456.1,390.5 463.8,429.0 468.9,454.7" fill="none" stroke="#f2cd3c" stroke-width="2.2" stroke-linejoin="round" stroke-linecap="round" /><polyline points="615.2,275.0 610.1,339.2 622.9,377.7 654.0,390.5" fill="none" stroke="#f2cd3c" stroke-width="2.2" stroke-linejoin="round" stroke-linecap="round" /><polyline points="520.0,360.0 560.0,380.0 600.0,372.0 640.0,390.0" fill="none" stroke="#f2cd3c" stroke-width="2.2" stroke-linejoin="round" stroke-linecap="round" /><polyline points="600.0,480.0 640.0,520.0 700.0,540.0 760.0,576.0" fill="none" stroke="#f2cd3c" stroke-width="2.2" stroke-linejoin="round" stroke-linecap="round" /><polyline points="560.0,576.0 600.0,540.0 660.0,500.0" fill="none" stroke="#f2cd3c" stroke-width="2.2" stroke-linejoin="round" stroke-linecap="round" /><polyline points="420.0,576.0 470.0,540.0 520.0,520.0" fill="none" stroke="#f2cd3c" stroke-width="2.2" stroke-linejoin="round" stroke-linecap="round" /><polyline points="680.0,400.0 720.0,420.0 760.0,400.0" fill="none" stroke="#f2cd3c" stroke-width="2.2" stroke-linejoin="round" stroke-linecap="round" /><polyline points="540.0,420.0 560.0,470.0 600.0,500.0" fill="none" stroke="#f2cd3c" stroke-width="2.2" stroke-linejoin="round" stroke-linecap="round" /><polyline points="1.0,150.0 30.0,140.0 60.0,150.0" fill="none" stroke="#f2cd3c" stroke-width="2.2" stroke-linejoin="round" stroke-linecap="round" /><polyline points="950.0,576.0 1000.0,560.0" fill="none" stroke="#f2cd3c" stroke-width="2.2" stroke-linejoin="round" stroke-linecap="round" /><polyline points="462.1,0.0 485.6,32.1 487.8,53.5 507.0,102.7 522.0,139.0 526.3,154.0 534.8,181.8 528.4,203.2 517.7,224.6 509.1,256.7 504.9,278.1 507.7,295.0 527.0,352.7 520.1,377.4 518.7,418.6 525.6,432.4 548.9,457.1 566.8,495.0 576.7,518.9 584.4,576.0" fill="none" stroke="#ffffff" stroke-width="4.6" stroke-linejoin="round" stroke-linecap="round" /><polyline points="712.0,21.8 703.7,36.2 709.9,73.3 714.0,98.0 705.8,118.6 687.3,155.7 689.3,180.4 694.0,186.2 711.9,213.7 725.6,248.0 732.5,282.4 734.4,295.0 735.8,315.6 748.1,356.8 752.2,377.4 761.9,404.9 779.7,432.4 796.2,487.3 798.0,576.0" fill="none" stroke="#ffffff" stroke-width="4.6" stroke-linejoin="round" stroke-linecap="round" /><polyline points="494.0,454.3 535.2,447.5 570.9,440.6 592.9,439.2" fill="none" stroke="#ffffff" stroke-width="4.6" stroke-linejoin="round" stroke-linecap="round" /><polyline points="593.0,410.4 645.1,385.7 672.6,371.9 676.7,359.6 697.3,359.6 708.3,363.7 727.5,367.8 748.1,369.2 768.7,373.3 796.2,377.4 816.8,362.3" fill="none" stroke="#ffffff" stroke-width="4.6" stroke-linejoin="round" stroke-linecap="round" /><polyline points="705.5,367.8 705.5,377.4 708.3,404.9 719.3,432.4 727.5,453.0 742.4,505.4 742.4,536.8 757.1,576.0" fill="none" stroke="#ffffff" stroke-width="4.6" stroke-linejoin="round" stroke-linecap="round" /><polyline points="800.3,380.2 796.2,404.9 782.5,432.4 759.1,439.2 735.8,450.2" fill="none" stroke="#ffffff" stroke-width="4.6" stroke-linejoin="round" stroke-linecap="round" /><polyline points="796.2,402.1 844.0,411.8 870.2,413.2 891.2,400.7 922.6,390.2" fill="none" stroke="#ffffff" stroke-width="4.6" stroke-linejoin="round" stroke-linecap="round" /><polyline points="468.9,344.3 494.0,344.5 514.6,343.1 527.0,352.7 528.3,366.4 555.8,367.8 569.5,354.1" fill="none" stroke="#ffffff" stroke-width="4.6" stroke-linejoin="round" stroke-linecap="round" /><polyline points="468.9,452.1 494.0,454.3" fill="none" stroke="#ffffff" stroke-width="4.6" stroke-linejoin="round" stroke-linecap="round" /><polyline points="481.7,480.4 520.3,475.2 560.0,468.0 593.0,452.0" fill="none" stroke="#ffffff" stroke-width="4.6" stroke-linejoin="round" stroke-linecap="round" /><polyline points="462.1,0.0 485.6,32.1 487.8,53.5 507.0,102.7 522.0,139.0 526.3,154.0 534.8,181.8 528.4,203.2 517.7,224.6 509.1,256.7 504.9,278.1 507.7,295.0 527.0,352.7 520.1,377.4 518.7,418.6 525.6,432.4 548.9,457.1 566.8,495.0 576.7,518.9 584.4,576.0" fill="none" stroke="#f59e4e" stroke-width="2.8" stroke-linejoin="round" stroke-linecap="round" /><polyline points="712.0,21.8 703.7,36.2 709.9,73.3 714.0,98.0 705.8,118.6 687.3,155.7 689.3,180.4 694.0,186.2 711.9,213.7 725.6,248.0 732.5,282.4 734.4,295.0 735.8,315.6 748.1,356.8 752.2,377.4 761.9,404.9 779.7,432.4 796.2,487.3 798.0,576.0" fill="none" stroke="#f59e4e" stroke-width="2.8" stroke-linejoin="round" stroke-linecap="round" /><polyline points="494.0,454.3 535.2,447.5 570.9,440.6 592.9,439.2" fill="none" stroke="#f59e4e" stroke-width="2.8" stroke-linejoin="round" stroke-linecap="round" /><polyline points="593.0,410.4 645.1,385.7 672.6,371.9 676.7,359.6 697.3,359.6 708.3,363.7 727.5,367.8 748.1,369.2 768.7,373.3 796.2,377.4 816.8,362.3" fill="none" stroke="#f59e4e" stroke-width="2.8" stroke-linejoin="round" stroke-linecap="round" /><polyline points="705.5,367.8 705.5,377.4 708.3,404.9 719.3,432.4 727.5,453.0 742.4,505.4 742.4,536.8 757.1,576.0" fill="none" stroke="#f59e4e" stroke-width="2.8" stroke-linejoin="round" stroke-linecap="round" /><polyline points="800.3,380.2 796.2,404.9 782.5,432.4 759.1,439.2 735.8,450.2" fill="none" stroke="#f59e4e" stroke-width="2.8" stroke-linejoin="round" stroke-linecap="round" /><polyline points="796.2,402.1 844.0,411.8 870.2,413.2 891.2,400.7 922.6,390.2" fill="none" stroke="#f59e4e" stroke-width="2.8" stroke-linejoin="round" stroke-linecap="round" /><polyline points="468.9,344.3 494.0,344.5 514.6,343.1 527.0,352.7 528.3,366.4 555.8,367.8 569.5,354.1" fill="none" stroke="#f59e4e" stroke-width="2.8" stroke-linejoin="round" stroke-linecap="round" /><polyline points="468.9,452.1 494.0,454.3" fill="none" stroke="#f59e4e" stroke-width="2.8" stroke-linejoin="round" stroke-linecap="round" /><polyline points="481.7,480.4 520.3,475.2 560.0,468.0 593.0,452.0" fill="none" stroke="#f59e4e" stroke-width="2.8" stroke-linejoin="round" stroke-linecap="round" /><circle cx="592.9" cy="432.4" r="17" fill="none" stroke="#ffffff" stroke-width="4.6"/><circle cx="592.9" cy="432.4" r="17" fill="none" stroke="#f59e4e" stroke-width="2.6"/></g><circle cx="478.6" cy="36.9" r="4.8" fill="#fff"/><circle cx="478.6" cy="36.9" r="3.6" fill="#111"/><circle cx="695.6" cy="14.4" r="4.8" fill="#fff"/><circle cx="695.6" cy="14.4" r="3.6" fill="#111"/><circle cx="371.8" cy="135.3" r="4.8" fill="#fff"/><circle cx="371.8" cy="135.3" r="3.6" fill="#111"/><circle cx="757.3" cy="127.1" r="4.8" fill="#fff"/><circle cx="757.3" cy="127.1" r="3.6" fill="#111"/><circle cx="894.2" cy="209.6" r="4.8" fill="#fff"/><circle cx="894.2" cy="209.6" r="3.6" fill="#111"/><circle cx="782.4" cy="300.2" r="4.8" fill="#fff"/><circle cx="782.4" cy="300.2" r="3.6" fill="#111"/><circle cx="459.4" cy="339.5" r="4.8" fill="#fff"/><circle cx="459.4" cy="339.5" r="3.6" fill="#111"/><circle cx="706.4" cy="345.6" r="4.8" fill="#fff"/><circle cx="706.4" cy="345.6" r="3.6" fill="#111"/><circle cx="903.7" cy="359.8" r="4.8" fill="#fff"/><circle cx="903.7" cy="359.8" r="3.6" fill="#111"/><circle cx="467.6" cy="386.6" r="4.8" fill="#fff"/><circle cx="467.6" cy="386.6" r="3.6" fill="#111"/><circle cx="592" cy="433.2" r="4.8" fill="#fff"/><circle cx="592" cy="433.2" r="3.6" fill="#111"/><circle cx="469.8" cy="452.6" r="4.8" fill="#fff"/><circle cx="469.8" cy="452.6" r="3.6" fill="#111"/><circle cx="718.5" cy="460" r="4.8" fill="#fff"/><circle cx="718.5" cy="460" r="3.6" fill="#111"/><circle cx="283.3" cy="502.3" r="4.8" fill="#fff"/><circle cx="283.3" cy="502.3" r="3.6" fill="#111"/><circle cx="395.5" cy="493.7" r="4.8" fill="#fff"/><circle cx="395.5" cy="493.7" r="3.6" fill="#111"/><circle cx="486.2" cy="512.2" r="4.8" fill="#fff"/><circle cx="486.2" cy="512.2" r="3.6" fill="#111"/><circle cx="601.9" cy="563.6" r="4.8" fill="#fff"/><circle cx="601.9" cy="563.6" r="3.6" fill="#111"/><circle cx="771" cy="575.7" r="4.8" fill="#fff"/><circle cx="771" cy="575.7" r="3.6" fill="#111"/><circle cx="7" cy="49.4" r="4.8" fill="#fff"/><circle cx="7" cy="49.4" r="3.6" fill="#111"/><text x="443" y="28" font-size="19.5" fill="#2b2b2b" textLength="70.6" lengthAdjust="spacingAndGlyphs" stroke="#ffffff" stroke-width="3.5" stroke-linejoin="round" paint-order="stroke" style="font-family:'Liberation Sans',sans-serif">Carlisle</text><text x="650" y="4" font-size="19" fill="#2b2b2b" textLength="91" lengthAdjust="spacingAndGlyphs" stroke="#ffffff" stroke-width="3.5" stroke-linejoin="round" paint-order="stroke" style="font-family:'Liberation Sans',sans-serif">upon Tyne</text><text x="327.3" y="128" font-size="16.5" fill="#2b2b2b" textLength="88.9" lengthAdjust="spacingAndGlyphs" stroke="#ffffff" stroke-width="3.5" stroke-linejoin="round" paint-order="stroke" style="font-family:'Liberation Sans',sans-serif">Whitehaven</text><text x="688.2" y="118" font-size="19" fill="#2b2b2b" textLength="139.1" lengthAdjust="spacingAndGlyphs" stroke="#ffffff" stroke-width="3.5" stroke-linejoin="round" paint-order="stroke" style="font-family:'Liberation Sans',sans-serif">Middlesbrough</text><text x="833.8" y="202" font-size="19" fill="#2b2b2b" textLength="120.8" lengthAdjust="spacingAndGlyphs" stroke="#ffffff" stroke-width="3.5" stroke-linejoin="round" paint-order="stroke" style="font-family:'Liberation Sans',sans-serif">Scarborough</text><text x="762.5" y="290" font-size="19.5" fill="#2b2b2b" textLength="40.1" lengthAdjust="spacingAndGlyphs" stroke="#ffffff" stroke-width="3.5" stroke-linejoin="round" paint-order="stroke" style="font-family:'Liberation Sans',sans-serif">York</text><text x="415" y="331.8" font-size="20" fill="#2b2b2b" textLength="90.6" lengthAdjust="spacingAndGlyphs" stroke="#ffffff" stroke-width="3.5" stroke-linejoin="round" paint-order="stroke" style="font-family:'Liberation Sans',sans-serif">Blackpool</text><text x="680.5" y="335" font-size="19.5" fill="#2b2b2b" textLength="53.9" lengthAdjust="spacingAndGlyphs" stroke="#ffffff" stroke-width="3.5" stroke-linejoin="round" paint-order="stroke" style="font-family:'Liberation Sans',sans-serif">Leeds</text><text x="885.5" y="351" font-size="19" fill="#2b2b2b" textLength="37.5" lengthAdjust="spacingAndGlyphs" stroke="#ffffff" stroke-width="3.5" stroke-linejoin="round" paint-order="stroke" style="font-family:'Liberation Sans',sans-serif">Hull</text><text x="430" y="380" font-size="17.5" fill="#2b2b2b" textLength="75.6" lengthAdjust="spacingAndGlyphs" stroke="#ffffff" stroke-width="3.5" stroke-linejoin="round" paint-order="stroke" style="font-family:'Liberation Sans',sans-serif">Southport</text><text x="538.9" y="424" font-size="19.5" fill="#2b2b2b" textLength="106.1" lengthAdjust="spacingAndGlyphs" stroke="#ffffff" stroke-width="3.5" stroke-linejoin="round" paint-order="stroke" style="font-family:'Liberation Sans',sans-serif">Manchester</text><text x="377" y="443" font-size="21" fill="#2b2b2b" textLength="84" lengthAdjust="spacingAndGlyphs" stroke="#ffffff" stroke-width="3.5" stroke-linejoin="round" paint-order="stroke" style="font-family:'Liberation Sans',sans-serif">Liverpool</text><text x="678.3" y="449" font-size="19.5" fill="#2b2b2b" textLength="80.7" lengthAdjust="spacingAndGlyphs" stroke="#ffffff" stroke-width="3.5" stroke-linejoin="round" paint-order="stroke" style="font-family:'Liberation Sans',sans-serif">Sheffield</text><text x="256" y="495" font-size="16" fill="#2b2b2b" textLength="56.2" lengthAdjust="spacingAndGlyphs" stroke="#ffffff" stroke-width="3.5" stroke-linejoin="round" paint-order="stroke" style="font-family:'Liberation Sans',sans-serif">Bangor</text><text x="355.8" y="485.5" font-size="20" fill="#2b2b2b" textLength="79.4" lengthAdjust="spacingAndGlyphs" stroke="#ffffff" stroke-width="3.5" stroke-linejoin="round" paint-order="stroke" style="font-family:'Liberation Sans',sans-serif">St Asaph</text><text x="450.3" y="503" font-size="18.5" fill="#2b2b2b" textLength="71.3" lengthAdjust="spacingAndGlyphs" stroke="#ffffff" stroke-width="3.5" stroke-linejoin="round" paint-order="stroke" style="font-family:'Liberation Sans',sans-serif">Chester</text><text x="532.4" y="555" font-size="19.5" fill="#2b2b2b" textLength="141.6" lengthAdjust="spacingAndGlyphs" stroke="#ffffff" stroke-width="3.5" stroke-linejoin="round" paint-order="stroke" style="font-family:'Liberation Sans',sans-serif">Stoke-on-Trent</text><text x="718.5" y="569" font-size="19.5" fill="#2b2b2b" textLength="105.7" lengthAdjust="spacingAndGlyphs" stroke="#ffffff" stroke-width="3.5" stroke-linejoin="round" paint-order="stroke" style="font-family:'Liberation Sans',sans-serif">Nottingham</text><text x="0.5" y="41" font-size="19" fill="#2b2b2b" textLength="29" lengthAdjust="spacingAndGlyphs" stroke="#ffffff" stroke-width="3.5" stroke-linejoin="round" paint-order="stroke" style="font-family:'Liberation Sans',sans-serif">rne</text><text x="0.5" y="111" font-size="19" fill="#2b2b2b" textLength="21" lengthAdjust="spacingAndGlyphs" stroke="#ffffff" stroke-width="3.5" stroke-linejoin="round" paint-order="stroke" style="font-family:'Liberation Sans',sans-serif">ast</text><text x="160.3" y="234" font-size="26" font-weight="700" fill="#111" textLength="117.8" lengthAdjust="spacingAndGlyphs" stroke="#ffffff" stroke-width="4" stroke-linejoin="round" paint-order="stroke" style="font-family:'Liberation Sans',sans-serif">Isle of Man</text><text x="571.5" y="215" font-size="33" font-weight="700" fill="#111" text-anchor="middle" stroke="#ffffff" stroke-width="4" stroke-linejoin="round" paint-order="stroke" style="font-family:'Liberation Sans',sans-serif" textLength="95" lengthAdjust="spacingAndGlyphs">United</text><text x="507.8" y="256" font-size="33" font-weight="700" fill="#111" stroke="#ffffff" stroke-width="4" stroke-linejoin="round" paint-order="stroke" style="font-family:'Liberation Sans',sans-serif" textLength="128.6" lengthAdjust="spacingAndGlyphs">Kingdom</text><text x="0" y="0" transform="translate(93 528) rotate(-62) " font-size="26" fill="#3aaeee" letter-spacing="2.2" style="font-family:'Liberation Sans',sans-serif">Irish Sea</text><rect x="518.2" y="153.3" width="33.5" height="22.5" rx="4" fill="#4a61d8" stroke="#ffffff" stroke-width="1.5"/><text x="534.95" y="170.85000000000002" font-size="17" font-weight="700" fill="#ffffff" text-anchor="middle" letter-spacing="0.8" style="font-family:'Liberation Sans',sans-serif">M6</text><rect x="569.5" y="330.9" width="43.2" height="21.6" rx="4" fill="#4a61d8" stroke="#ffffff" stroke-width="1.5"/><text x="591.1" y="348.0" font-size="17" font-weight="700" fill="#ffffff" text-anchor="middle" letter-spacing="0.8" style="font-family:'Liberation Sans',sans-serif">M65</text><rect x="819.5" y="343" width="43.5" height="22" rx="4" fill="#4a61d8" stroke="#ffffff" stroke-width="1.5"/><text x="841.25" y="360.3" font-size="17" font-weight="700" fill="#ffffff" text-anchor="middle" letter-spacing="0.8" style="font-family:'Liberation Sans',sans-serif">M62</text><rect x="799.6" y="137.5" width="54.9" height="21.5" rx="4" fill="#1fa045" stroke="#ffffff" stroke-width="1.5"/><text x="827.0500000000001" y="154.55" font-size="17" font-weight="700" fill="#f4e04a" text-anchor="middle" letter-spacing="0.8" style="font-family:'Liberation Sans',sans-serif">A171</text><rect x="944.7" y="461.3" width="54.4" height="22.9" rx="4" fill="#1fa045" stroke="#ffffff" stroke-width="1.5"/><text x="971.9000000000001" y="479.05" font-size="17" font-weight="700" fill="#f4e04a" text-anchor="middle" letter-spacing="0.8" style="font-family:'Liberation Sans',sans-serif">A157</text><rect x="181.8" y="472" width="44" height="23" rx="4" fill="#1fa045" stroke="#ffffff" stroke-width="1.5"/><text x="203.8" y="489.8" font-size="17" font-weight="700" fill="#f4e04a" text-anchor="middle" letter-spacing="0.8" style="font-family:'Liberation Sans',sans-serif">A55</text><rect x="173.5" y="254" width="35.4" height="23.8" rx="4" fill="#ffffff" stroke="#222" stroke-width="2"/><text x="191.2" y="272.2" font-size="17" font-weight="700" fill="#222" text-anchor="middle" letter-spacing="0.8" style="font-family:'Liberation Sans',sans-serif">A5</text><rect x="1024.5" y="15" width="59" height="165" rx="10" fill="rgba(0,0,0,0.10)"/><rect x="1028.2" y="18.7" width="51.5" height="157.6" rx="8" fill="#ffffff"/><line x1="1028.2" x2="1079.7" y1="72.3" y2="72.3" stroke="#dddddd" stroke-width="1.2"/><line x1="1028.2" x2="1079.7" y1="124.4" y2="124.4" stroke="#dddddd" stroke-width="1.2"/><path d="M1054 36.5v18M1045 45.5h18" stroke="#333" stroke-width="5.2" stroke-linecap="round"/><path d="M1045.5 98h17" stroke="#333" stroke-width="5.2" stroke-linecap="round"/><path d="M1054.2 136l7 13.5h-14z" fill="#333"/><path d="M1054.2 166l7 -12.5h-14z" fill="#c8c8c8"/><circle cx="1058.3" cy="545" r="21" fill="rgba(255,255,255,0.6)"/><circle cx="1058.3" cy="542.7" r="19" fill="#ffffff"/><circle cx="1058.3" cy="542.7" r="12.8" fill="#000"/><circle cx="1058.3" cy="535.8" r="2.3" fill="#fff"/><rect x="1056.1" y="539.6" width="4.4" height="10.5" rx="1" fill="#fff"/><circle cx="31.8" cy="543.2" r="16" fill="#ffffff" stroke="#6c94ad" stroke-width="3.2"/><path d="M24 551 q-1-10 6-14 q8-3 12 4 q3 9-6 12 q-6 1-12 -2z" fill="#6c94ad"/><path d="M33.5 538l1.3 3.3 3.3 1.3-3.3 1.3-1.3 3.3-1.3-3.3-3.3-1.3 3.3-1.3z" fill="#fff"/><text x="55" y="553" font-size="29" font-weight="700" fill="#ffffff" stroke="#6c94ad" stroke-width="3.2" paint-order="stroke" stroke-linejoin="round" textLength="112" lengthAdjust="spacingAndGlyphs" style="font-family:'Liberation Sans',sans-serif">mapbox</text></svg></div>
<div style="position:absolute;left:562px;top:1518.7px;width:1188px;height:1.5px;background:#cfd2d8"></div>
<div class="btn" style="left:583px;top:1534px;width:101px;height:65px;background:#fff;border:1.5px solid #cfd2d8"></div>
<div class="btn" style="left:1631.5px;top:1534px;width:96.5px;height:65px;background:#878b94"></div>
<div class="hr" style="top:687.2px"></div>
<div class="hr" style="top:789.4px"></div>
<div class="hr" style="top:847.3px"></div>
<div class="hr" style="top:963.5px"></div>

<div style="position:absolute;left:2918.7px;top:552.6px;width:16.7px;height:2.5px;background:#0f172a"></div>
<svg class="ic" style="left:50px;top:165.0px" width="28.8" height="28.8" viewBox="0 0 24 24"><rect width="7" height="9" x="3" y="3" rx="1"/><rect width="7" height="5" x="14" y="3" rx="1"/><rect width="7" height="9" x="14" y="12" rx="1"/><rect width="7" height="5" x="3" y="16" rx="1"/></svg>
<svg class="ic" style="left:50px;top:300.0px" width="28.8" height="28.8" viewBox="0 0 24 24"><rect width="7" height="9" x="3" y="3" rx="1"/><rect width="7" height="5" x="14" y="3" rx="1"/><rect width="7" height="9" x="14" y="12" rx="1"/><rect width="7" height="5" x="3" y="16" rx="1"/></svg>
<svg class="ic" style="left:50px;top:371.9px" width="28.8" height="28.8" viewBox="0 0 24 24"><circle cx="8" cy="21" r="1"/><circle cx="19" cy="21" r="1"/><path d="M2.05 2.05h2l2.66 12.42a2 2 0 0 0 2 1.58h9.78a2 2 0 0 0 1.95-1.57l1.65-7.43H5.12"/></svg>
<svg class="ic" style="left:50px;top:443.8px" width="28.8" height="28.8" viewBox="0 0 24 24"><rect width="7" height="9" x="3" y="3" rx="1"/><rect width="7" height="5" x="14" y="3" rx="1"/><rect width="7" height="9" x="14" y="12" rx="1"/><rect width="7" height="5" x="3" y="16" rx="1"/></svg>
<svg class="ic" style="left:50px;top:515.7px" width="28.8" height="28.8" viewBox="0 0 24 24"><polygon points="12 2 15.09 8.26 22 9.27 17 14.14 18.18 21.02 12 17.77 5.82 21.02 7 14.14 2 9.27 8.91 8.26 12 2"/></svg>
<svg class="ic" style="left:50px;top:650.7px" width="28.8" height="28.8" viewBox="0 0 24 24"><rect width="7" height="9" x="3" y="3" rx="1"/><rect width="7" height="5" x="14" y="3" rx="1"/><rect width="7" height="9" x="14" y="12" rx="1"/><rect width="7" height="5" x="3" y="16" rx="1"/></svg>
<svg class="ic" style="left:50px;top:722.6px" width="28.8" height="28.8" viewBox="0 0 24 24"><path d="M12.586 2.586A2 2 0 0 0 11.172 2H4a2 2 0 0 0-2 2v7.172a2 2 0 0 0 .586 1.414l8.704 8.704a2.426 2.426 0 0 0 3.42 0l6.58-6.58a2.426 2.426 0 0 0 0-3.42z"/><circle cx="7.5" cy="7.5" r=".5" fill="currentColor"/></svg>
<svg class="ic" style="left:50px;top:794.5px" width="28.8" height="28.8" viewBox="0 0 24 24"><path d="M3.85 8.62a4 4 0 0 1 4.78-4.77 4 4 0 0 1 6.74 0 4 4 0 0 1 4.78 4.78 4 4 0 0 1 0 6.74 4 4 0 0 1-4.77 4.78 4 4 0 0 1-6.75 0 4 4 0 0 1-4.78-4.77 4 4 0 0 1 0-6.76Z"/><path d="m9 12 2 2 4-4"/></svg>
<svg class="ic" style="left:50px;top:866.4px" width="28.8" height="28.8" viewBox="0 0 24 24"><circle cx="12" cy="12" r="10"/><path d="m9 12 2 2 4-4"/></svg>
<svg class="ic" style="left:50px;top:938.3px" width="28.8" height="28.8" viewBox="0 0 24 24"><path d="M3 12a9 9 0 0 1 9-9 9.75 9.75 0 0 1 6.74 2.74L21 8"/><path d="M21 3v5h-5"/><path d="M21 12a9 9 0 0 1-9 9 9.75 9.75 0 0 1-6.74-2.74L3 16"/><path d="M8 16H3v5"/></svg>
<svg class="ic" style="left:50px;top:1010.2px" width="28.8" height="28.8" viewBox="0 0 24 24"><path d="M3 3v16a2 2 0 0 0 2 2h16"/><path d="m19 9-5 5-4-4-3 3"/></svg>
<svg class="ic" style="left:50px;top:1145.2px" width="28.8" height="28.8" viewBox="0 0 24 24"><path d="M4 2v20l2-1 2 1 2-1 2 1 2-1 2 1 2-1 2 1V2l-2 1-2-1-2 1-2-1-2 1-2-1-2 1Z"/><path d="M14 8H8"/><path d="M16 12H8"/><path d="M13 16H8"/></svg>
<svg class="ic" style="left:50px;top:1217.1px" width="28.8" height="28.8" viewBox="0 0 24 24"><rect width="20" height="12" x="2" y="6" rx="2"/><circle cx="12" cy="12" r="2"/><path d="M6 12h.01M18 12h.01"/></svg>
<svg class="ic" style="left:50px;top:1352.5px" width="28.8" height="28.8" viewBox="0 0 24 24"><path d="M6 22V4a2 2 0 0 1 2-2h8a2 2 0 0 1 2 2v18Z"/><path d="M6 12H4a2 2 0 0 0-2 2v6a2 2 0 0 0 2 2h2"/><path d="M18 9h2a2 2 0 0 1 2 2v9a2 2 0 0 1-2 2h-2"/><path d="M10 6h4"/><path d="M10 10h4"/><path d="M10 14h4"/><path d="M10 18h4"/></svg>
<svg class="ic" style="left:50px;top:1424.4px" width="28.8" height="28.8" viewBox="0 0 24 24"><path d="M16 21v-2a4 4 0 0 0-4-4H6a4 4 0 0 0-4 4v2"/><circle cx="9" cy="7" r="4"/><path d="M22 21v-2a4 4 0 0 0-3-3.87"/><path d="M16 3.13a4 4 0 0 1 0 7.75"/></svg>
<svg class="ic" style="left:50px;top:1496.3px" width="28.8" height="28.8" viewBox="0 0 24 24"><rect width="20" height="14" x="2" y="5" rx="2"/><line x1="2" x2="22" y1="10" y2="10"/></svg>
<svg class="ic" style="left:50px;top:1568.2px" width="28.8" height="28.8" viewBox="0 0 24 24"><rect width="7" height="9" x="3" y="3" rx="1"/><rect width="7" height="5" x="14" y="3" rx="1"/><rect width="7" height="9" x="14" y="12" rx="1"/><rect width="7" height="5" x="3" y="16" rx="1"/></svg>
<svg class="ic" style="left:50px;top:1640.1px" width="28.8" height="28.8" viewBox="0 0 24 24"><path d="M20 10c0 4.993-5.539 10.193-7.399 11.799a1 1 0 0 1-1.202 0C9.539 20.193 4 14.993 4 10a8 8 0 0 1 16 0"/><circle cx="12" cy="10" r="3"/></svg>
<div class="badge" style="left:431px;top:439.0px;background:#dc2626">1</div>
<div class="badge" style="left:431px;top:717.8px;background:#f59e0b">1</div>
<div class="badge" style="left:431px;top:789.7px;background:#0f172a">1</div>
<div class="t" style="left:330.2px;top:18.0px;font-size:30px;font-weight:400;color:#ffffff;letter-spacing:-0.65px;">Hi simon eves <span style="color:#d4d4d8">· Summitwell Health Supplies Co. Ltd</span></div>
<div class="t" style="left:1038.1px;top:18.0px;font-size:30px;font-weight:400;color:#ffffff;letter-spacing:-0.02px;text-decoration:underline;text-underline-offset:2.5px;text-decoration-thickness:2px;">Logout</div>
<div class="t" style="left:1974.7px;top:18.2px;font-size:30px;font-weight:700;color:#ffffff;letter-spacing:-1.85px;">Dashboard</div>
<div class="t" style="left:2143.5px;top:18.2px;font-size:30px;font-weight:700;color:#ffffff;letter-spacing:-1.94px;">Auctions</div>
<div class="t" style="left:2287.6px;top:18.2px;font-size:30px;font-weight:700;color:#ffffff;letter-spacing:-1.55px;">Watchlist</div>
<div class="t" style="left:2435.5px;top:18.2px;font-size:30px;font-weight:700;color:#ffffff;letter-spacing:-1.13px;">Sell Item</div>
<div class="t" style="left:43.1px;top:119.0px;font-size:17.5px;font-weight:700;color:#64748b;letter-spacing:-0.47px;">OVERVIEW</div>
<div class="t" style="left:92.8px;top:166.7px;font-size:25px;font-weight:400;color:#0f172a;letter-spacing:-0.44px;">Overview</div>
<div class="t" style="left:42.6px;top:252.5px;font-size:17.5px;font-weight:700;color:#64748b;letter-spacing:0.04px;">BUYING</div>
<div class="t" style="left:93.9px;top:301.7px;font-size:25px;font-weight:400;color:#0f172a;letter-spacing:0.36px;">View Auctions</div>
<div class="t" style="left:91.9px;top:373.6px;font-size:25px;font-weight:400;color:#0f172a;letter-spacing:0.34px;">My Bids</div>
<div class="t" style="left:94.0px;top:445.5px;font-size:25px;font-weight:400;color:#0f172a;letter-spacing:0.26px;">Auction Fulfilments</div>
<div class="t" style="left:93.9px;top:517.4px;font-size:25px;font-weight:400;color:#0f172a;letter-spacing:0.40px;">Watchlist</div>
<div class="t" style="left:43.3px;top:603.2px;font-size:17.5px;font-weight:700;color:#64748b;letter-spacing:-0.38px;">SELLING</div>
<div class="t" style="left:92.7px;top:652.4px;font-size:25px;font-weight:400;color:#0f172a;letter-spacing:0.20px;">Create an Auction</div>
<div class="t" style="left:91.9px;top:724.3px;font-size:25px;font-weight:400;color:#0f172a;letter-spacing:0.62px;">My Auctions</div>
<div class="t" style="left:94.0px;top:796.2px;font-size:25px;font-weight:400;color:#0f172a;letter-spacing:0.17px;">Auction Preparation</div>
<div class="t" style="left:92.9px;top:868.1px;font-size:25px;font-weight:400;color:#0f172a;letter-spacing:0.27px;">Sold Items</div>
<div class="t" style="left:91.9px;top:940.0px;font-size:25px;font-weight:400;color:#0f172a;letter-spacing:0.33px;">Relisting Tools</div>
<div class="t" style="left:91.9px;top:1011.9px;font-size:25px;font-weight:400;color:#0f172a;letter-spacing:0.35px;">Performance Insights</div>
<div class="t" style="left:42.6px;top:1097.7px;font-size:17.5px;font-weight:700;color:#64748b;letter-spacing:0.01px;">FINANCE</div>
<div class="t" style="left:91.9px;top:1146.9px;font-size:25px;font-weight:400;color:#0f172a;letter-spacing:0.02px;">Receipts &amp; Invoices</div>
<div class="t" style="left:92.9px;top:1218.8px;font-size:25px;font-weight:400;color:#0f172a;letter-spacing:0.34px;">Settlements</div>
<div class="t" style="left:43.1px;top:1305.2px;font-size:17.5px;font-weight:700;color:#64748b;letter-spacing:-0.09px;">COMPANY</div>
<div class="t" style="left:91.9px;top:1354.2px;font-size:25px;font-weight:400;color:#0f172a;letter-spacing:0.55px;">Profile</div>
<div class="t" style="left:91.9px;top:1426.1px;font-size:25px;font-weight:400;color:#0f172a;letter-spacing:0.63px;">Members</div>
<div class="t" style="left:91.9px;top:1498.0px;font-size:25px;font-weight:400;color:#0f172a;letter-spacing:0.06px;">Billing &amp; Payouts</div>
<div class="t" style="left:94.0px;top:1569.9px;font-size:25px;font-weight:400;color:#0f172a;letter-spacing:0.18px;">Audit &amp; Activity</div>
<div class="t" style="left:94.0px;top:1641.8px;font-size:25px;font-weight:400;color:#0f172a;letter-spacing:0.03px;">Addresses</div>
<div class="t" style="left:560.8px;top:146.9px;font-size:44px;font-weight:700;color:#0f172a;letter-spacing:-1.84px;">Complete Purchase</div>
<div class="t" style="left:618.4px;top:233.4px;font-size:26px;font-weight:400;color:#64748b;letter-spacing:-0.27px;">Confirm availability &amp; terms</div>
<div class="t" style="left:576.8px;top:235.5px;font-size:22.5px;font-weight:700;color:#ffffff;letter-spacing:0.00px;">1</div>
<div class="t" style="left:1182.4px;top:233.4px;font-size:26px;font-weight:400;color:#0f172a;letter-spacing:-0.49px;">Delivery and Transport</div>
<div class="t" style="left:1140.8px;top:235.5px;font-size:22.5px;font-weight:700;color:#ffffff;letter-spacing:0.00px;">2</div>
<div class="t" style="left:1690.5px;top:233.4px;font-size:26px;font-weight:400;color:#64748b;letter-spacing:-0.24px;">Deinstallation &amp; optional services</div>
<div class="t" style="left:1650.3px;top:235.5px;font-size:22.5px;font-weight:700;color:#475569;letter-spacing:0.00px;">3</div>
<div class="t" style="left:2319.9px;top:233.4px;font-size:26px;font-weight:400;color:#64748b;letter-spacing:-0.24px;">Dates &amp; contacts</div>
<div class="t" style="left:2279.1px;top:235.5px;font-size:22.5px;font-weight:700;color:#475569;letter-spacing:0.00px;">4</div>
<div class="t" style="left:2768.2px;top:233.4px;font-size:26px;font-weight:400;color:#64748b;letter-spacing:-0.57px;">Review &amp; checkout</div>
<div class="t" style="left:2728.2px;top:235.5px;font-size:22.5px;font-weight:700;color:#475569;letter-spacing:0.00px;">5</div>
<div class="t" style="left:604.7px;top:358.8px;font-size:29.5px;font-weight:700;color:#0f172a;letter-spacing:-2.05px;">Delivery and Transport</div>
<div class="t" style="left:605.4px;top:411.8px;font-size:25px;font-weight:400;color:#64748b;letter-spacing:0.02px;">Choose delivery mode and, if delivering to your location, select an address.</div>
<div class="t" style="left:754.3px;top:509.0px;font-size:26px;font-weight:700;color:#ffffff;letter-spacing:-1.15px;">Deliver to my location</div>
<div class="t" style="left:1280.0px;top:509.0px;font-size:26px;font-weight:700;color:#0f172a;letter-spacing:-1.23px;">Transport to Bristol storage</div>
<div class="t" style="left:627.0px;top:609.4px;font-size:26px;font-weight:700;color:#ffffff;letter-spacing:-1.61px;">Saved</div>
<div class="t" style="left:753.3px;top:609.4px;font-size:26px;font-weight:700;color:#0f172a;letter-spacing:-1.59px;">New</div>
<div class="t" style="left:870.4px;top:607.0px;font-size:30.5px;font-weight:400;color:#0f172a;letter-spacing:-1.00px;">Select a saved address</div>
<div class="t" style="left:605.0px;top:706.5px;font-size:26px;font-weight:700;color:#0f172a;letter-spacing:-1.10px;">Delivery estimate</div>
<div class="t" style="left:628.4px;top:785.1px;font-size:23px;font-weight:400;color:#64748b;letter-spacing:-0.69px;">Select an address to see an estimate.</div>
<div class="t" style="left:604.2px;top:1553.6px;font-size:27px;font-weight:700;color:#0f172a;letter-spacing:-2.39px;">Back</div>
<div class="t" style="left:1652.5px;top:1553.6px;font-size:27px;font-weight:700;color:#ffffff;letter-spacing:-1.43px;">Next</div>
<div class="t" style="left:1836.5px;top:358.4px;font-size:30px;font-weight:700;color:#0f172a;letter-spacing:-2.22px;">Your selections</div>
<div class="t" style="left:1836.7px;top:410.4px;font-size:26.5px;font-weight:700;color:#64748b;letter-spacing:-0.88px;">A000234</div>
<div class="t" style="left:1953.8px;top:410.4px;font-size:26.5px;font-weight:400;color:#64748b;letter-spacing:0.00px;">•</div>
<div class="t" style="left:1977.0px;top:410.4px;font-size:26.5px;font-weight:400;color:#64748b;letter-spacing:-0.66px;">Siemens • Test Model</div>
<div class="t" style="left:1836.2px;top:491.9px;font-size:25.5px;font-weight:400;color:#64748b;letter-spacing:0.16px;">Item price:</div>
<div class="t" style="left:2767.5px;top:491.9px;font-size:25.5px;font-weight:700;color:#0f172a;letter-spacing:-0.52px;">GBP 15,000.00</div>
<div class="t" style="left:1836.8px;top:542.2px;font-size:25.5px;font-weight:400;color:#64748b;letter-spacing:-0.54px;">Transport from SS0 0PU to —</div>
<div class="t" style="left:1836.3px;top:592.4px;font-size:25.5px;font-weight:400;color:#64748b;letter-spacing:-0.03px;">Deinstallation zone:</div>
<div class="t" style="left:2858.7px;top:592.4px;font-size:25.5px;font-weight:700;color:#0f172a;letter-spacing:-0.88px;">Zone 2</div>
<div class="t" style="left:1836.3px;top:642.8px;font-size:25.5px;font-weight:400;color:#64748b;letter-spacing:0.13px;">Deinstallation:</div>
<div class="t" style="left:2781.7px;top:642.8px;font-size:25.5px;font-weight:700;color:#0f172a;letter-spacing:-0.57px;">GBP 6,000.00</div>
<div class="t" style="left:1836.8px;top:708.4px;font-size:25.5px;font-weight:400;color:#64748b;letter-spacing:-0.08px;">Subtotal (excl. VAT):</div>
<div class="t" style="left:2767.5px;top:708.4px;font-size:25.5px;font-weight:700;color:#0f172a;letter-spacing:-0.52px;">GBP 21,000.00</div>
<div class="t" style="left:1837.1px;top:751.4px;font-size:25.5px;font-weight:400;color:#64748b;letter-spacing:-0.48px;">VAT (20%):</div>
<div class="t" style="left:2781.7px;top:751.4px;font-size:25.5px;font-weight:700;color:#0f172a;letter-spacing:-0.57px;">GBP 4,200.00</div>
<div class="t" style="left:1836.8px;top:868.9px;font-size:25.5px;font-weight:400;color:#64748b;letter-spacing:-0.08px;">Subtotal (excl. VAT):</div>
<div class="t" style="left:2767.5px;top:868.9px;font-size:25.5px;font-weight:700;color:#0f172a;letter-spacing:-0.52px;">GBP 21,000.00</div>
<div class="t" style="left:1837.1px;top:918.7px;font-size:25.5px;font-weight:400;color:#64748b;letter-spacing:-0.48px;">VAT (20%):</div>
<div class="t" style="left:2781.7px;top:918.7px;font-size:25.5px;font-weight:700;color:#0f172a;letter-spacing:-0.57px;">GBP 4,200.00</div>
<div class="t" style="left:1836.7px;top:802.0px;font-size:26px;font-weight:700;color:#0f172a;letter-spacing:-0.88px;">Total payable (incl. VAT):</div>
<div class="t" style="left:2764.4px;top:802.0px;font-size:26px;font-weight:700;color:#0f172a;letter-spacing:-0.55px;">GBP 25,200.00</div>
<div class="t" style="left:1836.7px;top:984.3px;font-size:26px;font-weight:700;color:#64748b;letter-spacing:-0.88px;">Total payable (incl. VAT):</div>
<div class="t" style="left:2717.1px;top:986.6px;font-size:35px;font-weight:700;color:#0f172a;letter-spacing:-1.73px;">GBP 25,200.00</div>
<div class="t" style="left:1836.9px;top:1048.9px;font-size:26px;font-weight:400;color:#64748b;letter-spacing:-0.19px;">Availability date:</div>
<div class="t" style="left:2024.0px;top:1048.9px;font-size:26px;font-weight:700;color:#0f172a;letter-spacing:0.59px;">08/12/2025</div>
<div class="t" style="left:1836.1px;top:1098.1px;font-size:23px;font-weight:400;color:#64748b;letter-spacing:-0.59px;">Payment will include delivery if selected. Deinstallation and other services may be settled separately.</div>
<script>(function(){var z=window.innerWidth/3024;if(z>0&&Math.abs(z-1)>0.02){document.documentElement.style.zoom=z;}})();</script>
</body></html>
